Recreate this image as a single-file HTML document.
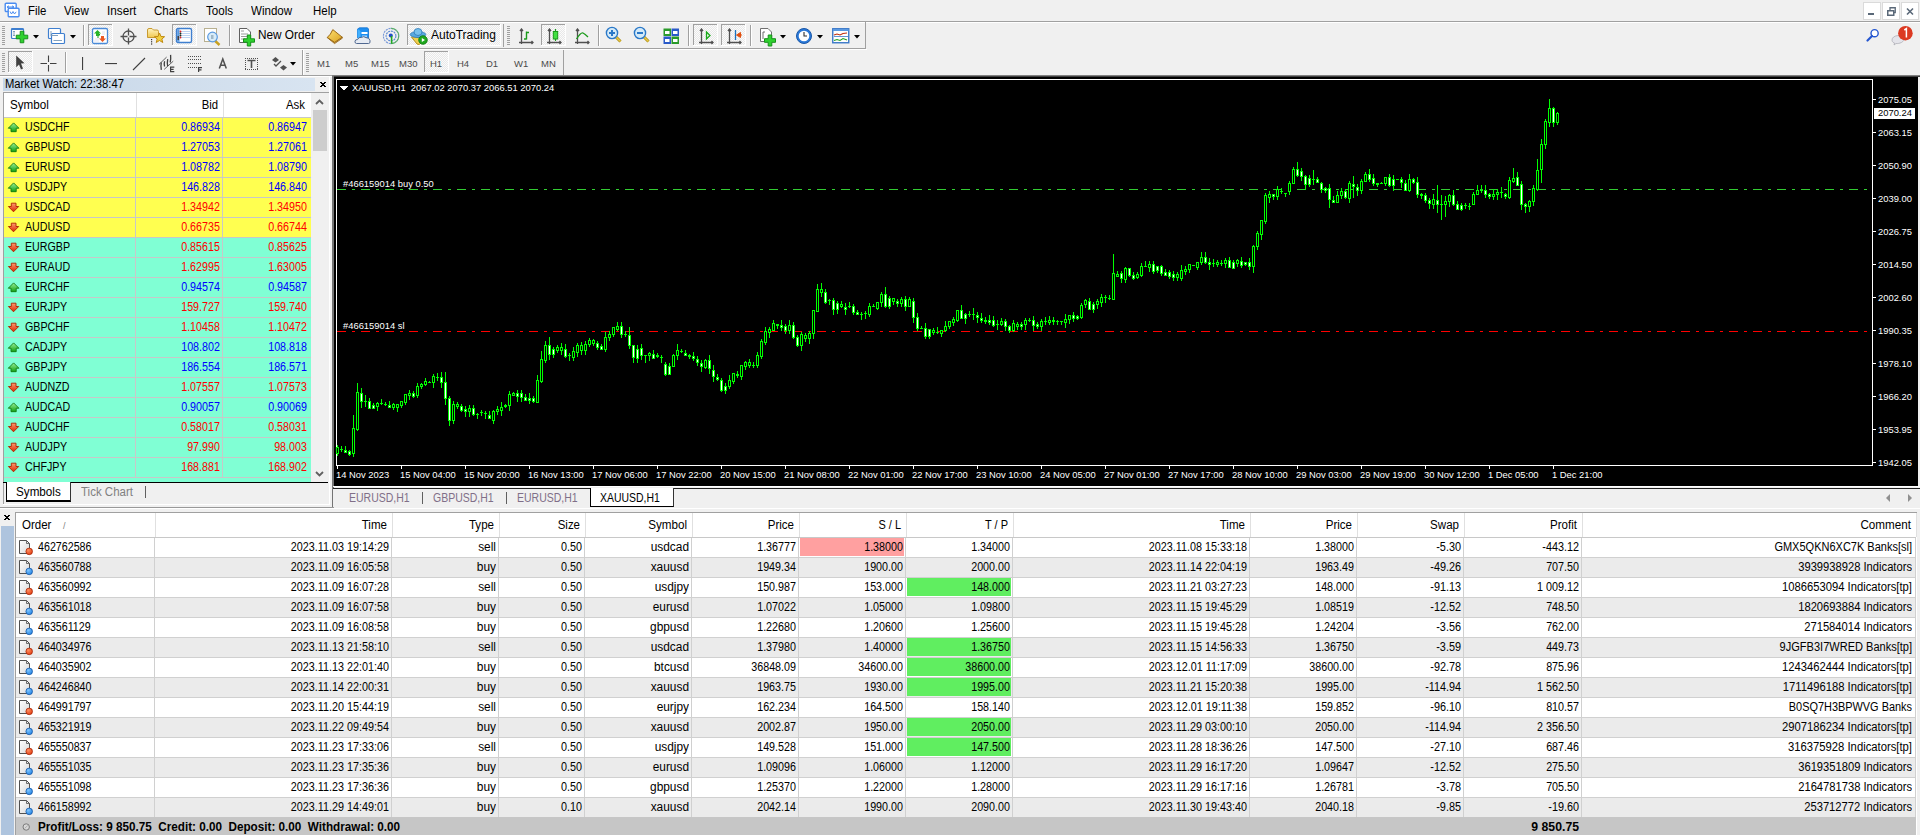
<!DOCTYPE html>
<html><head><meta charset="utf-8"><style>
html,body{margin:0;padding:0;}
body{width:1920px;height:835px;overflow:hidden;position:relative;background:#f0f0f0;font-family:"Liberation Sans", sans-serif;}
body>div, body>svg{position:absolute;}
.t{white-space:nowrap;}
</style></head><body>
<div class="t" style="left:28px;top:4.84px;font-size:12px;line-height:12px;color:#000;font-weight:normal;transform:scaleX(0.952);transform-origin:left top;">File</div><div class="t" style="left:64px;top:4.84px;font-size:12px;line-height:12px;color:#000;font-weight:normal;transform:scaleX(0.959);transform-origin:left top;">View</div><div class="t" style="left:107px;top:4.84px;font-size:12px;line-height:12px;color:#000;font-weight:normal;transform:scaleX(0.979);transform-origin:left top;">Insert</div><div class="t" style="left:154px;top:4.84px;font-size:12px;line-height:12px;color:#000;font-weight:normal;transform:scaleX(0.965);transform-origin:left top;">Charts</div><div class="t" style="left:206px;top:4.84px;font-size:12px;line-height:12px;color:#000;font-weight:normal;transform:scaleX(0.965);transform-origin:left top;">Tools</div><div class="t" style="left:251px;top:4.84px;font-size:12px;line-height:12px;color:#000;font-weight:normal;transform:scaleX(0.963);transform-origin:left top;">Window</div><div class="t" style="left:313px;top:4.84px;font-size:12px;line-height:12px;color:#000;font-weight:normal;transform:scaleX(0.955);transform-origin:left top;">Help</div><div style="left:0px;top:21px;width:1920px;height:1px;background:#a0a0a0"></div><div style="left:0px;top:22px;width:1920px;height:1px;background:#fff"></div><div style="left:0px;top:48px;width:866px;height:1px;background:#a0a0a0"></div><div style="left:0px;top:49px;width:867px;height:1px;background:#fff"></div><div style="left:0px;top:75px;width:1920px;height:1px;background:#a0a0a0"></div><div style="left:0px;top:76px;width:332px;height:1px;background:#fff"></div><div style="left:332px;top:75px;width:1588px;height:2px;background:linear-gradient(#a0a0a0,#202020)"></div><svg style="left:4px;top:2px" width="17" height="16" viewBox="0 0 17 16"><rect x="1.2" y="1.2" width="11" height="8.3" rx="1" fill="#fff" stroke="#4a8cf0" stroke-width="1.4"/><path d="M3 5 L5 3.8 M3 5 L5 6.2 M3 5 H10 L8 3.8 M10 5 L8 6.2" fill="none" stroke="#4a8cf0" stroke-width="1"/><rect x="4.2" y="6.2" width="10.8" height="8.6" rx="1" fill="#fff" stroke="#4a8cf0" stroke-width="1.4"/><path d="M6 9.5 L7.5 12 L9 9.5 L10.5 12 L12.2 9.8" fill="none" stroke="#4a8cf0" stroke-width="1"/></svg><div style="left:1863px;top:2px;width:18px;height:18px;background:#fff;border:1px solid #dadada;box-sizing:border-box"></div><div style="left:1882px;top:2px;width:18px;height:18px;background:#fff;border:1px solid #dadada;box-sizing:border-box"></div><div style="left:1901px;top:2px;width:18px;height:18px;background:#fff;border:1px solid #dadada;box-sizing:border-box"></div><svg style="left:1863px;top:2px" width="18" height="18" viewBox="0 0 18 18"><rect x="5" y="11" width="6" height="2" fill="#5a6878"/></svg><svg style="left:1882px;top:2px" width="18" height="18" viewBox="0 0 18 18"><rect x="5.75" y="8.75" width="6" height="4.5" fill="none" stroke="#5a6878" stroke-width="1.5"/><path d="M8 8 V5.75 H13.25 V10.5 H12" fill="none" stroke="#5a6878" stroke-width="1.3"/></svg><svg style="left:1901px;top:2px" width="18" height="18" viewBox="0 0 18 18"><path d="M6 6.5 L12 12.5 M12 6.5 L6 12.5" stroke="#5a6878" stroke-width="1.6"/></svg><svg style="left:1864px;top:27px" width="16" height="16" viewBox="0 0 16 16"><circle cx="10.6" cy="6.2" r="3.6" fill="#fff" stroke="#2456d0" stroke-width="1.4"/><path d="M8 9 L3.5 13.5" stroke="#2456d0" stroke-width="2.2" stroke-linecap="round"/></svg><svg style="left:1889px;top:24px" width="24" height="24" viewBox="0 0 24 24"><path d="M3 16 C3 11 13 10 15 14 C16 18 10 20 7 19.5 L5 21 L5.5 19 C3.5 18.5 3 17 3 16Z" fill="#e4e4ea" stroke="#a8a8b0" stroke-width="0.7"/><circle cx="16.4" cy="9.2" r="7.3" fill="#dc3a22"/><path d="M15.3 6 L17.4 4.7 V13.5" fill="none" stroke="#fff" stroke-width="1.5"/></svg><svg style="left:2px;top:26px" width="3" height="20" viewBox="0 0 3 20"><rect x="0" y="0" width="3" height="1" fill="#a0a0a0"/><rect x="0" y="2" width="3" height="1" fill="#a0a0a0"/><rect x="0" y="4" width="3" height="1" fill="#a0a0a0"/><rect x="0" y="6" width="3" height="1" fill="#a0a0a0"/><rect x="0" y="8" width="3" height="1" fill="#a0a0a0"/><rect x="0" y="10" width="3" height="1" fill="#a0a0a0"/><rect x="0" y="12" width="3" height="1" fill="#a0a0a0"/><rect x="0" y="14" width="3" height="1" fill="#a0a0a0"/><rect x="0" y="16" width="3" height="1" fill="#a0a0a0"/><rect x="0" y="18" width="3" height="1" fill="#a0a0a0"/></svg><svg style="left:10px;top:27px" width="20" height="18" viewBox="0 0 20 18"><rect x="1.5" y="1.5" width="12" height="10" rx="1" fill="#fff" stroke="#3f7fcf" stroke-width="1.2"/><rect x="1.5" y="1.5" width="12" height="1.5" fill="#3f7fcf"/><path d="M4 4 V9 M3 5 L4 4 L5 5 M3 8 L4 9 L5 8" stroke="#7090b0" stroke-width="0.8" fill="none"/><path d="M10.2 4.25 H13.8 V8.2 H17.75 V11.8 H13.8 V15.75 H10.2 V11.8 H6.25 V8.2 H10.2 Z" fill="#2fd12f" stroke="#16901a" stroke-width="1"/></svg><svg style="left:33px;top:35px" width="6" height="4" viewBox="0 0 6 4"><path d="M0 0 H6 L3 3.5 Z" fill="#000"/></svg><svg style="left:47px;top:27px" width="20" height="18" viewBox="0 0 20 18"><rect x="1.5" y="1.5" width="12" height="10" rx="1" fill="#fff" stroke="#3f7fcf" stroke-width="1.2"/><rect x="4.5" y="6.5" width="13" height="10" rx="1" fill="#fff" stroke="#3f7fcf" stroke-width="1.2"/><path d="M4 4 V9 M4 8.5 H11 M6.5 13.5 H15" stroke="#7898b8" stroke-width="0.9" fill="none"/></svg><svg style="left:70px;top:35px" width="6" height="4" viewBox="0 0 6 4"><path d="M0 0 H6 L3 3.5 Z" fill="#000"/></svg><svg style="left:83px;top:25px" width="2" height="21" viewBox="0 0 2 21"><rect x="0" y="0" width="1" height="21" fill="#a0a0a0"/><rect x="1" y="0" width="1" height="21" fill="#fff"/></svg><svg style="left:88px;top:24px" width="25" height="22" viewBox="0 0 25 22"><defs><pattern id="chk88" width="2" height="2" patternUnits="userSpaceOnUse"><rect width="2" height="2" fill="#fbfbfb"/><rect width="1" height="1" fill="#e8e8e8"/><rect x="1" y="1" width="1" height="1" fill="#e8e8e8"/></pattern></defs><rect width="25" height="22" fill="url(#chk88)"/><rect x="0" y="0" width="25" height="1" fill="#a0a0a0"/><rect x="0" y="0" width="1" height="22" fill="#a0a0a0"/><rect x="24" y="0" width="1" height="22" fill="#fff"/><rect x="0" y="21" width="25" height="1" fill="#fff"/></svg><svg style="left:91px;top:27px" width="18" height="18" viewBox="0 0 18 18"><rect x="1.5" y="1.5" width="15" height="15" rx="1.5" fill="#fff" stroke="#4a8ad8" stroke-width="1.3"/><path d="M7 8 V11 M7 6 L5 8 H9Z" stroke="#1e9a1e" fill="#2fbf2f" stroke-width="1"/><path d="M4 3 L7.5 6.5 L6 6.5 L6 9 L4 9 Z" fill="#24a824" opacity="0"/><path d="M6.5 3 L10 6.5 H8 V9 H5 V6.5 H3Z" fill="#27b427"/><path d="M11.5 15 L15 11.5 H13 V9 H10 V11.5 H8Z" fill="#ec5a24"/><path d="M4 12 H8 M11 5 H14 M11 7 H14 M3 14 H8" stroke="#dde" stroke-width="0.8"/></svg><svg style="left:120px;top:28px" width="17" height="17" viewBox="0 0 17 17"><circle cx="8.5" cy="8.5" r="5.5" fill="none" stroke="#505050" stroke-width="1.3"/><path d="M8.5 0.5 V7.5 M8.5 9.5 V16.5 M0.5 8.5 H7.5 M9.5 8.5 H16.5" stroke="#505050" stroke-width="1.3"/></svg><svg style="left:146px;top:27px" width="20" height="18" viewBox="0 0 20 18"><defs><linearGradient id="fld" x1="0" y1="0" x2="0" y2="1"><stop offset="0" stop-color="#fff4c0"/><stop offset="1" stop-color="#f0c850"/></linearGradient></defs><path d="M1.5 3 Q1.5 1.5 3 1.5 H6 L7.5 3 H11 Q12.5 3 12.5 4.5 V10.5 H1.5 Z" fill="url(#fld)" stroke="#c89a30" stroke-width="1"/><path d="M13.5 6 L15 9.5 L18.6 9.7 L15.8 12 L16.8 15.5 L13.5 13.5 L10.2 15.5 L11.2 12 L8.4 9.7 L12 9.5 Z" fill="#f2d040" stroke="#c08a10" stroke-width="1"/><rect x="5" y="12" width="1.2" height="1.2" fill="#303030"/><rect x="5" y="14.2" width="1.2" height="1.2" fill="#303030"/><rect x="5" y="16.4" width="1.2" height="1.2" fill="#303030"/></svg><svg style="left:172px;top:24px" width="25" height="22" viewBox="0 0 25 22"><defs><pattern id="chk172" width="2" height="2" patternUnits="userSpaceOnUse"><rect width="2" height="2" fill="#fbfbfb"/><rect width="1" height="1" fill="#e8e8e8"/><rect x="1" y="1" width="1" height="1" fill="#e8e8e8"/></pattern></defs><rect width="25" height="22" fill="url(#chk172)"/><rect x="0" y="0" width="25" height="1" fill="#a0a0a0"/><rect x="0" y="0" width="1" height="22" fill="#a0a0a0"/><rect x="24" y="0" width="1" height="22" fill="#fff"/><rect x="0" y="21" width="25" height="1" fill="#fff"/></svg><svg style="left:175px;top:27px" width="18" height="18" viewBox="0 0 18 18"><rect x="1.5" y="1.5" width="15" height="14" rx="1.5" fill="#fff" stroke="#3f7fcf" stroke-width="1.4"/><rect x="2.2" y="2.2" width="2.3" height="12.6" fill="#5a9ae0"/><rect x="2.5" y="9" width="1.5" height="4" fill="#404040"/><path d="M6 4.5 H15 M6 6.5 H15 M6 8.5 H15 M6 10.5 H15" stroke="#b8cff0" stroke-width="0.9"/><circle cx="5.5" cy="4.5" r="0.9" fill="#e02020"/><circle cx="5.5" cy="6.5" r="0.9" fill="#203020"/><circle cx="5.5" cy="8.5" r="0.9" fill="#203020"/><circle cx="5.5" cy="10.5" r="0.9" fill="#e02020"/></svg><svg style="left:203px;top:27px" width="20" height="20" viewBox="0 0 20 20"><rect x="1.5" y="1.5" width="12" height="13" fill="#fff" stroke="#b8b090" stroke-width="1"/><path d="M9 11 L16.5 18" stroke="#c8a020" stroke-width="2.4"/><circle cx="9.5" cy="10" r="4.8" fill="#d8ecf8" stroke="#5a9ae0" stroke-width="1.2"/><rect x="8" y="8" width="2.5" height="4" fill="#a0b8c8"/></svg><svg style="left:229px;top:25px" width="2" height="21" viewBox="0 0 2 21"><rect x="0" y="0" width="1" height="21" fill="#a0a0a0"/><rect x="1" y="0" width="1" height="21" fill="#fff"/></svg><svg style="left:238px;top:27px" width="19" height="20" viewBox="0 0 19 20"><path d="M1.5 1.5 H9 L12.5 5 V15.5 H1.5 Z" fill="#fff" stroke="#606060" stroke-width="1"/><path d="M3 4 H6 M3 7 H10 M3 9.5 H10 M3 12 H7" stroke="#909090" stroke-width="0.9"/><path d="M9.3 8.0 H12.7 V11.8 H16.5 V15.2 H12.7 V19.0 H9.3 V15.2 H5.5 V11.8 H9.3 Z" fill="#2fd12f" stroke="#16901a" stroke-width="1"/></svg><svg style="left:326px;top:28px" width="18" height="17" viewBox="0 0 18 17"><defs><linearGradient id="gbk" x1="0" y1="0" x2="1" y2="1"><stop offset="0" stop-color="#ffe070"/><stop offset="1" stop-color="#d8a020"/></linearGradient></defs><path d="M1.3 9.6 L8.6 15.6 L16.6 10 L16.2 9.2 L8.6 14.4 Z" fill="#e8d8a0" stroke="#9a6818" stroke-width="0.9" stroke-linejoin="round"/><path d="M1.3 9.4 Q4.5 7 6.8 1.6 L16.2 9.2 L8.6 14.4 Z" fill="url(#gbk)" stroke="#9a6818" stroke-width="1" stroke-linejoin="round"/></svg><svg style="left:354px;top:27px" width="18" height="18" viewBox="0 0 18 18"><path d="M3.5 2 L5.5 0.8 H13.5 L14.5 2 V11 H3.5 Z" fill="#1e8ef0" stroke="#1070d0" stroke-width="0.8"/><path d="M3.5 2 L6.5 4 V11 H3.5 Z" fill="#40b0ff"/><rect x="7.5" y="5" width="6" height="2" fill="#fff"/><rect x="8" y="8.5" width="5" height="1.5" fill="#a8d8ff"/><path d="M2.5 16.5 Q0.8 16.5 1 14.2 Q1.3 12.3 3.5 12.6 Q4.6 9.8 7.5 10.4 Q9.6 8.8 12 10.6 Q15.6 10.6 16 13.6 Q16.6 16.5 14.6 16.5 Z" fill="#e6ebf3" stroke="#506890" stroke-width="1"/></svg><svg style="left:382px;top:27px" width="18" height="18" viewBox="0 0 18 18"><circle cx="9" cy="9" r="7.6" fill="none" stroke="#7898d8" stroke-width="1.1" stroke-dasharray="2.2 0.8"/><circle cx="9" cy="9" r="4.9" fill="none" stroke="#5a88d0" stroke-width="1.1" stroke-dasharray="2 0.8"/><path d="M9 1.4 A7.6 7.6 0 0 1 9.5 16.6" fill="none" stroke="#50b050" stroke-width="1.1" opacity="0.8"/><circle cx="8.8" cy="8.6" r="2" fill="#2050c8"/><path d="M9.6 9 V16.8" stroke="#20a820" stroke-width="1.6"/></svg><svg style="left:407px;top:24px" width="94" height="22" viewBox="0 0 94 22"><defs><pattern id="chk407" width="2" height="2" patternUnits="userSpaceOnUse"><rect width="2" height="2" fill="#fbfbfb"/><rect width="1" height="1" fill="#e8e8e8"/><rect x="1" y="1" width="1" height="1" fill="#e8e8e8"/></pattern></defs><rect width="94" height="22" fill="url(#chk407)"/><rect x="0" y="0" width="94" height="1" fill="#a0a0a0"/><rect x="0" y="0" width="1" height="22" fill="#a0a0a0"/><rect x="93" y="0" width="1" height="22" fill="#fff"/><rect x="0" y="21" width="94" height="1" fill="#fff"/></svg><svg style="left:409px;top:27px" width="20" height="19" viewBox="0 0 20 19"><path d="M2.5 10 L8 17 Q10 18.5 12 16 L16 10 Z" fill="#f0d050" stroke="#b89020" stroke-width="1"/><ellipse cx="9" cy="7.5" rx="7.8" ry="3" fill="#58a8e0" stroke="#2a78b8" stroke-width="0.8"/><ellipse cx="9" cy="5" rx="4" ry="3.5" fill="#78c0ec" stroke="#2a78b8" stroke-width="0.8"/><circle cx="14" cy="13" r="4.3" fill="#1fa81f" stroke="#0e780e" stroke-width="0.8"/><path d="M12.8 11 L16 13 L12.8 15 Z" fill="#fff"/></svg><svg style="left:503px;top:24px" width="1" height="23" viewBox="0 0 1 23"><rect width="1" height="23" fill="#a0a0a0"/></svg><svg style="left:507px;top:26px" width="3" height="20" viewBox="0 0 3 20"><rect x="0" y="0" width="3" height="1" fill="#a0a0a0"/><rect x="0" y="2" width="3" height="1" fill="#a0a0a0"/><rect x="0" y="4" width="3" height="1" fill="#a0a0a0"/><rect x="0" y="6" width="3" height="1" fill="#a0a0a0"/><rect x="0" y="8" width="3" height="1" fill="#a0a0a0"/><rect x="0" y="10" width="3" height="1" fill="#a0a0a0"/><rect x="0" y="12" width="3" height="1" fill="#a0a0a0"/><rect x="0" y="14" width="3" height="1" fill="#a0a0a0"/><rect x="0" y="16" width="3" height="1" fill="#a0a0a0"/><rect x="0" y="18" width="3" height="1" fill="#a0a0a0"/></svg><svg style="left:515px;top:28px" width="20" height="17" viewBox="0 0 20 17"><path d="M6.5 1 V16 M4 14.5 H18 M5 3 L6.5 1 L8 3 M16.5 13 L18 14.5 L16.5 16" fill="none" stroke="#505050" stroke-width="1.3"/><path d="M11.5 3.5 V11.5 M11.5 4.5 H14 M9 11 H11.5" fill="none" stroke="#1a9a1a" stroke-width="1.4"/></svg><svg style="left:541px;top:24px" width="25" height="22" viewBox="0 0 25 22"><defs><pattern id="chk541" width="2" height="2" patternUnits="userSpaceOnUse"><rect width="2" height="2" fill="#fbfbfb"/><rect width="1" height="1" fill="#e8e8e8"/><rect x="1" y="1" width="1" height="1" fill="#e8e8e8"/></pattern></defs><rect width="25" height="22" fill="url(#chk541)"/><rect x="0" y="0" width="25" height="1" fill="#a0a0a0"/><rect x="0" y="0" width="1" height="22" fill="#a0a0a0"/><rect x="24" y="0" width="1" height="22" fill="#fff"/><rect x="0" y="21" width="25" height="1" fill="#fff"/></svg><svg style="left:543px;top:28px" width="20" height="17" viewBox="0 0 20 17"><path d="M6.5 1 V16 M4 14.5 H18 M5 3 L6.5 1 L8 3 M16.5 13 L18 14.5 L16.5 16" fill="none" stroke="#505050" stroke-width="1.3"/><path d="M12.5 1 V13" stroke="#1a9a1a" stroke-width="1.2"/><rect x="10.3" y="3.5" width="4.4" height="7.5" fill="#40e040" stroke="#1a9a1a" stroke-width="1"/></svg><svg style="left:571px;top:28px" width="20" height="17" viewBox="0 0 20 17"><path d="M6.5 1 V16 M4 14.5 H18 M5 3 L6.5 1 L8 3 M16.5 13 L18 14.5 L16.5 16" fill="none" stroke="#505050" stroke-width="1.3"/><path d="M5.5 11 Q10 4 12 5 Q14 6 17 9" fill="none" stroke="#1a9a1a" stroke-width="1.3"/></svg><svg style="left:598px;top:25px" width="2" height="21" viewBox="0 0 2 21"><rect x="0" y="0" width="1" height="21" fill="#a0a0a0"/><rect x="1" y="0" width="1" height="21" fill="#fff"/></svg><svg style="left:605px;top:26px" width="18" height="18" viewBox="0 0 18 18"><path d="M10.5 10.5 L15.5 15.5" stroke="#a88a10" stroke-width="3"/><path d="M10.5 10.5 L15.5 15.5" stroke="#e8c848" stroke-width="1.6"/><circle cx="7" cy="7" r="5.6" fill="#d4eaf8" stroke="#2a78c8" stroke-width="1.4"/><path d="M4 7 H10 M7 4 V10" stroke="#2a78c8" stroke-width="2"/></svg><svg style="left:633px;top:26px" width="18" height="18" viewBox="0 0 18 18"><path d="M10.5 10.5 L15.5 15.5" stroke="#a88a10" stroke-width="3"/><path d="M10.5 10.5 L15.5 15.5" stroke="#e8c848" stroke-width="1.6"/><circle cx="7" cy="7" r="5.6" fill="#d4eaf8" stroke="#2a78c8" stroke-width="1.4"/><path d="M4 7 H10" stroke="#2a78c8" stroke-width="2"/></svg><svg style="left:663px;top:28px" width="17" height="17" viewBox="0 0 17 17"><rect x="0.5" y="0.5" width="7.5" height="7.5" fill="#2a9a2a"/><rect x="2" y="3" width="4.5" height="3" fill="#fff"/><rect x="8.5" y="0.5" width="7.5" height="7.5" fill="#2a5ac8"/><rect x="10" y="3" width="4.5" height="3" fill="#fff"/><rect x="0.5" y="8.5" width="7.5" height="7.5" fill="#2a5ac8"/><rect x="2" y="11" width="4.5" height="3" fill="#fff"/><rect x="8.5" y="8.5" width="7.5" height="7.5" fill="#2a9a2a"/><rect x="10" y="11" width="4.5" height="3" fill="#fff"/></svg><svg style="left:688px;top:25px" width="2" height="21" viewBox="0 0 2 21"><rect x="0" y="0" width="1" height="21" fill="#a0a0a0"/><rect x="1" y="0" width="1" height="21" fill="#fff"/></svg><svg style="left:693px;top:24px" width="25" height="22" viewBox="0 0 25 22"><defs><pattern id="chk693" width="2" height="2" patternUnits="userSpaceOnUse"><rect width="2" height="2" fill="#fbfbfb"/><rect width="1" height="1" fill="#e8e8e8"/><rect x="1" y="1" width="1" height="1" fill="#e8e8e8"/></pattern></defs><rect width="25" height="22" fill="url(#chk693)"/><rect x="0" y="0" width="25" height="1" fill="#a0a0a0"/><rect x="0" y="0" width="1" height="22" fill="#a0a0a0"/><rect x="24" y="0" width="1" height="22" fill="#fff"/><rect x="0" y="21" width="25" height="1" fill="#fff"/></svg><svg style="left:695px;top:28px" width="20" height="17" viewBox="0 0 20 17"><path d="M6.5 1 V16 M4 14.5 H18 M5 3 L6.5 1 L8 3 M16.5 13 L18 14.5 L16.5 16" fill="none" stroke="#505050" stroke-width="1.3"/><path d="M11.5 4 L15 7.5 L11.5 11 Z" fill="none" stroke="#1aaa1a" stroke-width="1.3"/></svg><svg style="left:721px;top:24px" width="25" height="22" viewBox="0 0 25 22"><defs><pattern id="chk721" width="2" height="2" patternUnits="userSpaceOnUse"><rect width="2" height="2" fill="#fbfbfb"/><rect width="1" height="1" fill="#e8e8e8"/><rect x="1" y="1" width="1" height="1" fill="#e8e8e8"/></pattern></defs><rect width="25" height="22" fill="url(#chk721)"/><rect x="0" y="0" width="25" height="1" fill="#a0a0a0"/><rect x="0" y="0" width="1" height="22" fill="#a0a0a0"/><rect x="24" y="0" width="1" height="22" fill="#fff"/><rect x="0" y="21" width="25" height="1" fill="#fff"/></svg><svg style="left:723px;top:28px" width="20" height="17" viewBox="0 0 20 17"><path d="M6.5 1 V16 M4 14.5 H18 M5 3 L6.5 1 L8 3 M16.5 13 L18 14.5 L16.5 16" fill="none" stroke="#505050" stroke-width="1.3"/><path d="M12.5 2 V12" stroke="#1a70c0" stroke-width="1.3"/><path d="M13.5 7 L17.5 4.5 V9.5 Z M15 7 H19" fill="#e05010" stroke="#e05010" stroke-width="1"/></svg><svg style="left:750px;top:25px" width="2" height="21" viewBox="0 0 2 21"><rect x="0" y="0" width="1" height="21" fill="#a0a0a0"/><rect x="1" y="0" width="1" height="21" fill="#fff"/></svg><svg style="left:759px;top:27px" width="19" height="20" viewBox="0 0 19 20"><path d="M1.5 1.5 H9 L12.5 5 V14.5 H1.5 Z" fill="#fff" stroke="#707070" stroke-width="1"/><path d="M4 5 V12 M4 5 H6" stroke="#606060" stroke-width="0.9"/><path d="M9.2 8.0 H12.8 V11.7 H16.5 V15.3 H12.8 V19.0 H9.2 V15.3 H5.5 V11.7 H9.2 Z" fill="#2fd12f" stroke="#16901a" stroke-width="1"/></svg><svg style="left:780px;top:35px" width="6" height="4" viewBox="0 0 6 4"><path d="M0 0 H6 L3 3.5 Z" fill="#000"/></svg><svg style="left:795px;top:27px" width="18" height="18" viewBox="0 0 18 18"><circle cx="9" cy="9" r="7.5" fill="#2a78d8" stroke="#1a58a8" stroke-width="1"/><circle cx="9" cy="9" r="5.3" fill="#fff"/><path d="M9 5 V9 H12" fill="none" stroke="#303030" stroke-width="1.1"/></svg><svg style="left:817px;top:35px" width="6" height="4" viewBox="0 0 6 4"><path d="M0 0 H6 L3 3.5 Z" fill="#000"/></svg><svg style="left:832px;top:28px" width="18" height="16" viewBox="0 0 18 16"><rect x="0.75" y="0.75" width="16" height="14" fill="#fff" stroke="#3a78c8" stroke-width="1.4"/><rect x="1" y="1" width="15.5" height="2" fill="#5a98e0"/><path d="M2 7 L5 6 L8 7 L11 5.5 L15 5" fill="none" stroke="#c03010" stroke-width="1.1"/><path d="M2 8.5 H16" stroke="#3a78c8" stroke-width="0.8"/><path d="M2 12.5 L5 11.5 L8 12.5 L11 10.5 L15 12" fill="none" stroke="#20a020" stroke-width="1.1"/></svg><svg style="left:854px;top:35px" width="6" height="4" viewBox="0 0 6 4"><path d="M0 0 H6 L3 3.5 Z" fill="#000"/></svg><svg style="left:865px;top:22px" width="1" height="27" viewBox="0 0 1 27"><rect width="1" height="27" fill="#a0a0a0"/></svg><svg style="left:2px;top:53px" width="3" height="20" viewBox="0 0 3 20"><rect x="0" y="0" width="3" height="1" fill="#a0a0a0"/><rect x="0" y="2" width="3" height="1" fill="#a0a0a0"/><rect x="0" y="4" width="3" height="1" fill="#a0a0a0"/><rect x="0" y="6" width="3" height="1" fill="#a0a0a0"/><rect x="0" y="8" width="3" height="1" fill="#a0a0a0"/><rect x="0" y="10" width="3" height="1" fill="#a0a0a0"/><rect x="0" y="12" width="3" height="1" fill="#a0a0a0"/><rect x="0" y="14" width="3" height="1" fill="#a0a0a0"/><rect x="0" y="16" width="3" height="1" fill="#a0a0a0"/><rect x="0" y="18" width="3" height="1" fill="#a0a0a0"/></svg><svg style="left:8px;top:51px" width="25" height="22" viewBox="0 0 25 22"><defs><pattern id="chk8" width="2" height="2" patternUnits="userSpaceOnUse"><rect width="2" height="2" fill="#fbfbfb"/><rect width="1" height="1" fill="#e8e8e8"/><rect x="1" y="1" width="1" height="1" fill="#e8e8e8"/></pattern></defs><rect width="25" height="22" fill="url(#chk8)"/><rect x="0" y="0" width="25" height="1" fill="#a0a0a0"/><rect x="0" y="0" width="1" height="22" fill="#a0a0a0"/><rect x="24" y="0" width="1" height="22" fill="#fff"/><rect x="0" y="21" width="25" height="1" fill="#fff"/></svg><svg style="left:15px;top:55px" width="11" height="16" viewBox="0 0 11 16"><path d="M1.2 0.5 L9.5 8.3 L6 8.6 L8 13.5 L6 14.5 L4 9.6 L1.2 12.2 Z" fill="#404040"/></svg><svg style="left:40px;top:55px" width="17" height="17" viewBox="0 0 17 17"><path d="M8.5 0.5 V7 M8.5 10 V16.5 M0.5 8.5 H7 M10 8.5 H16.5" stroke="#404040" stroke-width="1.1"/></svg><svg style="left:65px;top:52px" width="2" height="21" viewBox="0 0 2 21"><rect x="0" y="0" width="1" height="21" fill="#a0a0a0"/><rect x="1" y="0" width="1" height="21" fill="#fff"/></svg><svg style="left:81px;top:57px" width="3" height="14" viewBox="0 0 3 14"><rect x="1" y="0" width="1.1" height="13" fill="#404040"/></svg><svg style="left:104px;top:62px" width="14" height="3" viewBox="0 0 14 3"><rect x="1" y="1" width="12" height="1.1" fill="#404040"/></svg><svg style="left:132px;top:57px" width="14" height="14" viewBox="0 0 14 14"><path d="M1 13 L13 1" stroke="#404040" stroke-width="1.1"/></svg><svg style="left:158px;top:54px" width="18" height="19" viewBox="0 0 18 19"><path d="M1 10.4 L8.6 3.1 M6.2 15.4 L15.2 7.2" stroke="#505050" stroke-width="0.9"/><path d="M3.3 8.3 Q2.6 12 3.3 15.9 M6.6 7.2 Q5.8 10 6.6 12.5 M9.7 5.1 Q9 8.5 9.7 12.2 M12.6 0.9 Q13 5 12.2 8.5" fill="none" stroke="#404040" stroke-width="1.3"/><path d="M16.3 13.2 H12.6 V17.6 H16.3 M12.6 15.4 H15.6" fill="none" stroke="#404040" stroke-width="1.2"/></svg><svg style="left:187px;top:55px" width="17" height="18" viewBox="0 0 17 18"><rect x="1" y="1" width="1" height="1" fill="#505050"/><rect x="3" y="1" width="1" height="1" fill="#505050"/><rect x="5" y="1" width="1" height="1" fill="#505050"/><rect x="7" y="1" width="1" height="1" fill="#505050"/><rect x="9" y="1" width="1" height="1" fill="#505050"/><rect x="11" y="1" width="1" height="1" fill="#505050"/><rect x="13" y="1" width="1" height="1" fill="#505050"/><rect x="1" y="4" width="1" height="1" fill="#505050"/><rect x="3" y="4" width="1" height="1" fill="#505050"/><rect x="5" y="4" width="1" height="1" fill="#505050"/><rect x="7" y="4" width="1" height="1" fill="#505050"/><rect x="9" y="4" width="1" height="1" fill="#505050"/><rect x="11" y="4" width="1" height="1" fill="#505050"/><rect x="13" y="4" width="1" height="1" fill="#505050"/><rect x="1" y="8" width="1" height="1" fill="#505050"/><rect x="3" y="8" width="1" height="1" fill="#505050"/><rect x="5" y="8" width="1" height="1" fill="#505050"/><rect x="7" y="8" width="1" height="1" fill="#505050"/><rect x="9" y="8" width="1" height="1" fill="#505050"/><rect x="11" y="8" width="1" height="1" fill="#505050"/><rect x="13" y="8" width="1" height="1" fill="#505050"/><rect x="1" y="12" width="1" height="1" fill="#505050"/><rect x="3" y="12" width="1" height="1" fill="#505050"/><rect x="5" y="12" width="1" height="1" fill="#505050"/><rect x="7" y="12" width="1" height="1" fill="#505050"/><rect x="9" y="12" width="1" height="1" fill="#505050"/><path d="M15 12.6 H11.6 V17 M11.6 14.8 H14.5" fill="none" stroke="#404040" stroke-width="1.2"/></svg><svg style="left:217px;top:57px" width="12" height="13" viewBox="0 0 12 13"><path d="M2.3 11.5 L5.8 2 L9.3 11.5 M3.6 8.2 H8" fill="none" stroke="#505050" stroke-width="1.5"/></svg><svg style="left:244px;top:56px" width="15" height="15" viewBox="0 0 15 15"><rect x="1" y="2" width="1" height="1" fill="#505050"/><rect x="1" y="13" width="1" height="1" fill="#505050"/><rect x="3" y="2" width="1" height="1" fill="#505050"/><rect x="3" y="13" width="1" height="1" fill="#505050"/><rect x="5" y="2" width="1" height="1" fill="#505050"/><rect x="5" y="13" width="1" height="1" fill="#505050"/><rect x="7" y="2" width="1" height="1" fill="#505050"/><rect x="7" y="13" width="1" height="1" fill="#505050"/><rect x="9" y="2" width="1" height="1" fill="#505050"/><rect x="9" y="13" width="1" height="1" fill="#505050"/><rect x="11" y="2" width="1" height="1" fill="#505050"/><rect x="11" y="13" width="1" height="1" fill="#505050"/><rect x="13" y="2" width="1" height="1" fill="#505050"/><rect x="13" y="13" width="1" height="1" fill="#505050"/><rect x="1" y="2" width="1" height="1" fill="#505050"/><rect x="13" y="2" width="1" height="1" fill="#505050"/><rect x="1" y="4" width="1" height="1" fill="#505050"/><rect x="13" y="4" width="1" height="1" fill="#505050"/><rect x="1" y="6" width="1" height="1" fill="#505050"/><rect x="13" y="6" width="1" height="1" fill="#505050"/><rect x="1" y="8" width="1" height="1" fill="#505050"/><rect x="13" y="8" width="1" height="1" fill="#505050"/><rect x="1" y="10" width="1" height="1" fill="#505050"/><rect x="13" y="10" width="1" height="1" fill="#505050"/><rect x="1" y="12" width="1" height="1" fill="#505050"/><rect x="13" y="12" width="1" height="1" fill="#505050"/><path d="M3.5 4.5 H11.5 M7.5 4.5 V12" stroke="#505050" stroke-width="1.6"/></svg><svg style="left:271px;top:56px" width="17" height="16" viewBox="0 0 17 16"><path d="M1 4 L4.5 1 L8 4 L4.5 6.5Z" fill="#505050"/><path d="M16 11.5 L12.5 14.5 L9 11.5 L12.5 9 Z" fill="#505050"/><path d="M3 8 L5 10 L10 5" fill="none" stroke="#505050" stroke-width="1.3"/></svg><svg style="left:290px;top:62px" width="6" height="4" viewBox="0 0 6 4"><path d="M0 0 H6 L3 3.5 Z" fill="#000"/></svg><svg style="left:302px;top:50px" width="2" height="25" viewBox="0 0 2 25"><rect width="1" height="25" fill="#a0a0a0"/><rect x="1" width="1" height="25" fill="#fff"/></svg><svg style="left:306px;top:53px" width="3" height="20" viewBox="0 0 3 20"><rect x="0" y="0" width="3" height="1" fill="#a0a0a0"/><rect x="0" y="2" width="3" height="1" fill="#a0a0a0"/><rect x="0" y="4" width="3" height="1" fill="#a0a0a0"/><rect x="0" y="6" width="3" height="1" fill="#a0a0a0"/><rect x="0" y="8" width="3" height="1" fill="#a0a0a0"/><rect x="0" y="10" width="3" height="1" fill="#a0a0a0"/><rect x="0" y="12" width="3" height="1" fill="#a0a0a0"/><rect x="0" y="14" width="3" height="1" fill="#a0a0a0"/><rect x="0" y="16" width="3" height="1" fill="#a0a0a0"/><rect x="0" y="18" width="3" height="1" fill="#a0a0a0"/></svg><svg style="left:424px;top:51px" width="25" height="22" viewBox="0 0 25 22"><defs><pattern id="chk424" width="2" height="2" patternUnits="userSpaceOnUse"><rect width="2" height="2" fill="#fbfbfb"/><rect width="1" height="1" fill="#e8e8e8"/><rect x="1" y="1" width="1" height="1" fill="#e8e8e8"/></pattern></defs><rect width="25" height="22" fill="url(#chk424)"/><rect x="0" y="0" width="25" height="1" fill="#a0a0a0"/><rect x="0" y="0" width="1" height="22" fill="#a0a0a0"/><rect x="24" y="0" width="1" height="22" fill="#fff"/><rect x="0" y="21" width="25" height="1" fill="#fff"/></svg><svg style="left:563px;top:50px" width="1" height="25" viewBox="0 0 1 25"><rect width="1" height="25" fill="#a0a0a0"/></svg><div class="t" style="left:258px;top:28.84px;font-size:12px;line-height:12px;color:#000;font-weight:normal;transform:scaleX(0.982);transform-origin:left top;">New Order</div><div class="t" style="left:431px;top:28.84px;font-size:12px;line-height:12px;color:#000;font-weight:normal;">AutoTrading</div><div class="t" style="left:317px;top:58.96px;font-size:9.5px;line-height:9.5px;color:#4a4a4a;font-weight:normal;">M1</div><div class="t" style="left:345px;top:58.96px;font-size:9.5px;line-height:9.5px;color:#4a4a4a;font-weight:normal;">M5</div><div class="t" style="left:371px;top:58.96px;font-size:9.5px;line-height:9.5px;color:#4a4a4a;font-weight:normal;">M15</div><div class="t" style="left:399px;top:58.96px;font-size:9.5px;line-height:9.5px;color:#4a4a4a;font-weight:normal;">M30</div><div class="t" style="left:430px;top:58.96px;font-size:9.5px;line-height:9.5px;color:#4a4a4a;font-weight:normal;">H1</div><div class="t" style="left:457px;top:58.96px;font-size:9.5px;line-height:9.5px;color:#4a4a4a;font-weight:normal;">H4</div><div class="t" style="left:486px;top:58.96px;font-size:9.5px;line-height:9.5px;color:#4a4a4a;font-weight:normal;">D1</div><div class="t" style="left:514px;top:58.96px;font-size:9.5px;line-height:9.5px;color:#4a4a4a;font-weight:normal;">W1</div><div class="t" style="left:541px;top:58.96px;font-size:9.5px;line-height:9.5px;color:#4a4a4a;font-weight:normal;">MN</div><div style="left:3px;top:78px;width:312px;height:13px;background:linear-gradient(90deg,#c6d6e7,#d8e4f1)"></div><div class="t" style="left:5px;top:77.84px;font-size:12px;line-height:12px;color:#000;font-weight:normal;transform:scaleX(0.937);transform-origin:left top;">Market Watch: 22:38:47</div><div style="left:3px;top:92px;width:326px;height:1px;background:#a0a0a0"></div><div style="left:3px;top:93px;width:308px;height:24px;background:#fff"></div><div style="left:3px;top:92px;width:1px;height:412px;background:#a0a0a0"></div><div style="left:136px;top:93px;width:1px;height:24px;background:#e0e0e0"></div><div style="left:223px;top:93px;width:1px;height:24px;background:#e0e0e0"></div><div class="t" style="left:10px;top:98.54px;font-size:12px;line-height:12px;color:#000;font-weight:normal;transform:scaleX(0.970);transform-origin:left top;">Symbol</div><div class="t" style="left:-182px;width:400px;text-align:right;top:98.54px;font-size:12px;line-height:12px;color:#000;font-weight:normal;transform:scaleX(0.944);transform-origin:right top;">Bid</div><div class="t" style="left:-95px;width:400px;text-align:right;top:98.54px;font-size:12px;line-height:12px;color:#000;font-weight:normal;transform:scaleX(0.950);transform-origin:right top;">Ask</div><div style="left:4px;top:117px;width:307px;height:1px;background:#c8c8c8"></div><div style="left:4px;top:118px;width:307px;height:19px;background:#ffff50"></div><div style="left:4px;top:137px;width:307px;height:1px;background:#c8c8c8"></div><div style="left:135px;top:118px;width:1px;height:19px;background:#c8c8c8"></div><div style="left:222px;top:118px;width:1px;height:19px;background:#c8c8c8"></div><svg style="left:7px;top:122px" width="13" height="12"><defs><linearGradient id="gu0" x1="0" y1="0" x2="0" y2="1"><stop offset="0" stop-color="#9af09a"/><stop offset="1" stop-color="#12a012"/></linearGradient></defs><path d="M6.6 0.9 L11.9 6.2 L9.2 6.2 L9.2 9.7 L4 9.7 L4 6.2 L1.3 6.2 Z" fill="url(#gu0)" stroke="#0e7a0e" stroke-width="0.9" stroke-linejoin="round"/></svg><div class="t" style="left:24.5px;top:121.34px;font-size:12px;line-height:12px;color:#000;font-weight:normal;transform:scaleX(0.890);transform-origin:left top;">USDCHF</div><div class="t" style="left:-180px;width:400px;text-align:right;top:121.34px;font-size:12px;line-height:12px;color:#0000ff;font-weight:normal;transform:scaleX(0.895);transform-origin:right top;">0.86934</div><div class="t" style="left:-93px;width:400px;text-align:right;top:121.34px;font-size:12px;line-height:12px;color:#0000ff;font-weight:normal;transform:scaleX(0.895);transform-origin:right top;">0.86947</div><div style="left:4px;top:138px;width:307px;height:19px;background:#ffff50"></div><div style="left:4px;top:157px;width:307px;height:1px;background:#c8c8c8"></div><div style="left:135px;top:138px;width:1px;height:19px;background:#c8c8c8"></div><div style="left:222px;top:138px;width:1px;height:19px;background:#c8c8c8"></div><svg style="left:7px;top:142px" width="13" height="12"><defs><linearGradient id="gu1" x1="0" y1="0" x2="0" y2="1"><stop offset="0" stop-color="#9af09a"/><stop offset="1" stop-color="#12a012"/></linearGradient></defs><path d="M6.6 0.9 L11.9 6.2 L9.2 6.2 L9.2 9.7 L4 9.7 L4 6.2 L1.3 6.2 Z" fill="url(#gu1)" stroke="#0e7a0e" stroke-width="0.9" stroke-linejoin="round"/></svg><div class="t" style="left:24.5px;top:141.34px;font-size:12px;line-height:12px;color:#000;font-weight:normal;transform:scaleX(0.890);transform-origin:left top;">GBPUSD</div><div class="t" style="left:-180px;width:400px;text-align:right;top:141.34px;font-size:12px;line-height:12px;color:#0000ff;font-weight:normal;transform:scaleX(0.895);transform-origin:right top;">1.27053</div><div class="t" style="left:-93px;width:400px;text-align:right;top:141.34px;font-size:12px;line-height:12px;color:#0000ff;font-weight:normal;transform:scaleX(0.895);transform-origin:right top;">1.27061</div><div style="left:4px;top:158px;width:307px;height:19px;background:#ffff50"></div><div style="left:4px;top:177px;width:307px;height:1px;background:#c8c8c8"></div><div style="left:135px;top:158px;width:1px;height:19px;background:#c8c8c8"></div><div style="left:222px;top:158px;width:1px;height:19px;background:#c8c8c8"></div><svg style="left:7px;top:162px" width="13" height="12"><defs><linearGradient id="gu2" x1="0" y1="0" x2="0" y2="1"><stop offset="0" stop-color="#9af09a"/><stop offset="1" stop-color="#12a012"/></linearGradient></defs><path d="M6.6 0.9 L11.9 6.2 L9.2 6.2 L9.2 9.7 L4 9.7 L4 6.2 L1.3 6.2 Z" fill="url(#gu2)" stroke="#0e7a0e" stroke-width="0.9" stroke-linejoin="round"/></svg><div class="t" style="left:24.5px;top:161.34px;font-size:12px;line-height:12px;color:#000;font-weight:normal;transform:scaleX(0.890);transform-origin:left top;">EURUSD</div><div class="t" style="left:-180px;width:400px;text-align:right;top:161.34px;font-size:12px;line-height:12px;color:#0000ff;font-weight:normal;transform:scaleX(0.895);transform-origin:right top;">1.08782</div><div class="t" style="left:-93px;width:400px;text-align:right;top:161.34px;font-size:12px;line-height:12px;color:#0000ff;font-weight:normal;transform:scaleX(0.895);transform-origin:right top;">1.08790</div><div style="left:4px;top:178px;width:307px;height:19px;background:#ffff50"></div><div style="left:4px;top:197px;width:307px;height:1px;background:#c8c8c8"></div><div style="left:135px;top:178px;width:1px;height:19px;background:#c8c8c8"></div><div style="left:222px;top:178px;width:1px;height:19px;background:#c8c8c8"></div><svg style="left:7px;top:182px" width="13" height="12"><defs><linearGradient id="gu3" x1="0" y1="0" x2="0" y2="1"><stop offset="0" stop-color="#9af09a"/><stop offset="1" stop-color="#12a012"/></linearGradient></defs><path d="M6.6 0.9 L11.9 6.2 L9.2 6.2 L9.2 9.7 L4 9.7 L4 6.2 L1.3 6.2 Z" fill="url(#gu3)" stroke="#0e7a0e" stroke-width="0.9" stroke-linejoin="round"/></svg><div class="t" style="left:24.5px;top:181.34px;font-size:12px;line-height:12px;color:#000;font-weight:normal;transform:scaleX(0.890);transform-origin:left top;">USDJPY</div><div class="t" style="left:-180px;width:400px;text-align:right;top:181.34px;font-size:12px;line-height:12px;color:#0000ff;font-weight:normal;transform:scaleX(0.895);transform-origin:right top;">146.828</div><div class="t" style="left:-93px;width:400px;text-align:right;top:181.34px;font-size:12px;line-height:12px;color:#0000ff;font-weight:normal;transform:scaleX(0.895);transform-origin:right top;">146.840</div><div style="left:4px;top:198px;width:307px;height:19px;background:#ffff50"></div><div style="left:4px;top:217px;width:307px;height:1px;background:#c8c8c8"></div><div style="left:135px;top:198px;width:1px;height:19px;background:#c8c8c8"></div><div style="left:222px;top:198px;width:1px;height:19px;background:#c8c8c8"></div><svg style="left:7px;top:202px" width="13" height="13"><defs><linearGradient id="gd4" x1="0" y1="0" x2="0" y2="1"><stop offset="0" stop-color="#ff9a70"/><stop offset="1" stop-color="#d82800"/></linearGradient></defs><path d="M6.5 9.8 L11.7 4.5 L9 4.5 L9 1.2 L4.3 1.2 L4.3 4.5 L1.4 4.5 Z" fill="url(#gd4)" stroke="#b02000" stroke-width="0.9" stroke-linejoin="round"/></svg><div class="t" style="left:24.5px;top:201.34px;font-size:12px;line-height:12px;color:#000;font-weight:normal;transform:scaleX(0.890);transform-origin:left top;">USDCAD</div><div class="t" style="left:-180px;width:400px;text-align:right;top:201.34px;font-size:12px;line-height:12px;color:#ff0000;font-weight:normal;transform:scaleX(0.895);transform-origin:right top;">1.34942</div><div class="t" style="left:-93px;width:400px;text-align:right;top:201.34px;font-size:12px;line-height:12px;color:#ff0000;font-weight:normal;transform:scaleX(0.895);transform-origin:right top;">1.34950</div><div style="left:4px;top:218px;width:307px;height:19px;background:#ffff50"></div><div style="left:4px;top:237px;width:307px;height:1px;background:#c8c8c8"></div><div style="left:135px;top:218px;width:1px;height:19px;background:#c8c8c8"></div><div style="left:222px;top:218px;width:1px;height:19px;background:#c8c8c8"></div><svg style="left:7px;top:222px" width="13" height="13"><defs><linearGradient id="gd5" x1="0" y1="0" x2="0" y2="1"><stop offset="0" stop-color="#ff9a70"/><stop offset="1" stop-color="#d82800"/></linearGradient></defs><path d="M6.5 9.8 L11.7 4.5 L9 4.5 L9 1.2 L4.3 1.2 L4.3 4.5 L1.4 4.5 Z" fill="url(#gd5)" stroke="#b02000" stroke-width="0.9" stroke-linejoin="round"/></svg><div class="t" style="left:24.5px;top:221.34px;font-size:12px;line-height:12px;color:#000;font-weight:normal;transform:scaleX(0.890);transform-origin:left top;">AUDUSD</div><div class="t" style="left:-180px;width:400px;text-align:right;top:221.34px;font-size:12px;line-height:12px;color:#ff0000;font-weight:normal;transform:scaleX(0.895);transform-origin:right top;">0.66735</div><div class="t" style="left:-93px;width:400px;text-align:right;top:221.34px;font-size:12px;line-height:12px;color:#ff0000;font-weight:normal;transform:scaleX(0.895);transform-origin:right top;">0.66744</div><div style="left:4px;top:238px;width:307px;height:19px;background:#80ffd4"></div><div style="left:4px;top:257px;width:307px;height:1px;background:#c8c8c8"></div><div style="left:135px;top:238px;width:1px;height:19px;background:#c8c8c8"></div><div style="left:222px;top:238px;width:1px;height:19px;background:#c8c8c8"></div><svg style="left:7px;top:242px" width="13" height="13"><defs><linearGradient id="gd6" x1="0" y1="0" x2="0" y2="1"><stop offset="0" stop-color="#ff9a70"/><stop offset="1" stop-color="#d82800"/></linearGradient></defs><path d="M6.5 9.8 L11.7 4.5 L9 4.5 L9 1.2 L4.3 1.2 L4.3 4.5 L1.4 4.5 Z" fill="url(#gd6)" stroke="#b02000" stroke-width="0.9" stroke-linejoin="round"/></svg><div class="t" style="left:24.5px;top:241.34px;font-size:12px;line-height:12px;color:#000;font-weight:normal;transform:scaleX(0.890);transform-origin:left top;">EURGBP</div><div class="t" style="left:-180px;width:400px;text-align:right;top:241.34px;font-size:12px;line-height:12px;color:#ff0000;font-weight:normal;transform:scaleX(0.895);transform-origin:right top;">0.85615</div><div class="t" style="left:-93px;width:400px;text-align:right;top:241.34px;font-size:12px;line-height:12px;color:#ff0000;font-weight:normal;transform:scaleX(0.895);transform-origin:right top;">0.85625</div><div style="left:4px;top:258px;width:307px;height:19px;background:#80ffd4"></div><div style="left:4px;top:277px;width:307px;height:1px;background:#c8c8c8"></div><div style="left:135px;top:258px;width:1px;height:19px;background:#c8c8c8"></div><div style="left:222px;top:258px;width:1px;height:19px;background:#c8c8c8"></div><svg style="left:7px;top:262px" width="13" height="13"><defs><linearGradient id="gd7" x1="0" y1="0" x2="0" y2="1"><stop offset="0" stop-color="#ff9a70"/><stop offset="1" stop-color="#d82800"/></linearGradient></defs><path d="M6.5 9.8 L11.7 4.5 L9 4.5 L9 1.2 L4.3 1.2 L4.3 4.5 L1.4 4.5 Z" fill="url(#gd7)" stroke="#b02000" stroke-width="0.9" stroke-linejoin="round"/></svg><div class="t" style="left:24.5px;top:261.34px;font-size:12px;line-height:12px;color:#000;font-weight:normal;transform:scaleX(0.890);transform-origin:left top;">EURAUD</div><div class="t" style="left:-180px;width:400px;text-align:right;top:261.34px;font-size:12px;line-height:12px;color:#ff0000;font-weight:normal;transform:scaleX(0.895);transform-origin:right top;">1.62995</div><div class="t" style="left:-93px;width:400px;text-align:right;top:261.34px;font-size:12px;line-height:12px;color:#ff0000;font-weight:normal;transform:scaleX(0.895);transform-origin:right top;">1.63005</div><div style="left:4px;top:278px;width:307px;height:19px;background:#80ffd4"></div><div style="left:4px;top:297px;width:307px;height:1px;background:#c8c8c8"></div><div style="left:135px;top:278px;width:1px;height:19px;background:#c8c8c8"></div><div style="left:222px;top:278px;width:1px;height:19px;background:#c8c8c8"></div><svg style="left:7px;top:282px" width="13" height="12"><defs><linearGradient id="gu8" x1="0" y1="0" x2="0" y2="1"><stop offset="0" stop-color="#9af09a"/><stop offset="1" stop-color="#12a012"/></linearGradient></defs><path d="M6.6 0.9 L11.9 6.2 L9.2 6.2 L9.2 9.7 L4 9.7 L4 6.2 L1.3 6.2 Z" fill="url(#gu8)" stroke="#0e7a0e" stroke-width="0.9" stroke-linejoin="round"/></svg><div class="t" style="left:24.5px;top:281.34px;font-size:12px;line-height:12px;color:#000;font-weight:normal;transform:scaleX(0.890);transform-origin:left top;">EURCHF</div><div class="t" style="left:-180px;width:400px;text-align:right;top:281.34px;font-size:12px;line-height:12px;color:#0000ff;font-weight:normal;transform:scaleX(0.895);transform-origin:right top;">0.94574</div><div class="t" style="left:-93px;width:400px;text-align:right;top:281.34px;font-size:12px;line-height:12px;color:#0000ff;font-weight:normal;transform:scaleX(0.895);transform-origin:right top;">0.94587</div><div style="left:4px;top:298px;width:307px;height:19px;background:#80ffd4"></div><div style="left:4px;top:317px;width:307px;height:1px;background:#c8c8c8"></div><div style="left:135px;top:298px;width:1px;height:19px;background:#c8c8c8"></div><div style="left:222px;top:298px;width:1px;height:19px;background:#c8c8c8"></div><svg style="left:7px;top:302px" width="13" height="13"><defs><linearGradient id="gd9" x1="0" y1="0" x2="0" y2="1"><stop offset="0" stop-color="#ff9a70"/><stop offset="1" stop-color="#d82800"/></linearGradient></defs><path d="M6.5 9.8 L11.7 4.5 L9 4.5 L9 1.2 L4.3 1.2 L4.3 4.5 L1.4 4.5 Z" fill="url(#gd9)" stroke="#b02000" stroke-width="0.9" stroke-linejoin="round"/></svg><div class="t" style="left:24.5px;top:301.34px;font-size:12px;line-height:12px;color:#000;font-weight:normal;transform:scaleX(0.890);transform-origin:left top;">EURJPY</div><div class="t" style="left:-180px;width:400px;text-align:right;top:301.34px;font-size:12px;line-height:12px;color:#ff0000;font-weight:normal;transform:scaleX(0.895);transform-origin:right top;">159.727</div><div class="t" style="left:-93px;width:400px;text-align:right;top:301.34px;font-size:12px;line-height:12px;color:#ff0000;font-weight:normal;transform:scaleX(0.895);transform-origin:right top;">159.740</div><div style="left:4px;top:318px;width:307px;height:19px;background:#80ffd4"></div><div style="left:4px;top:337px;width:307px;height:1px;background:#c8c8c8"></div><div style="left:135px;top:318px;width:1px;height:19px;background:#c8c8c8"></div><div style="left:222px;top:318px;width:1px;height:19px;background:#c8c8c8"></div><svg style="left:7px;top:322px" width="13" height="13"><defs><linearGradient id="gd10" x1="0" y1="0" x2="0" y2="1"><stop offset="0" stop-color="#ff9a70"/><stop offset="1" stop-color="#d82800"/></linearGradient></defs><path d="M6.5 9.8 L11.7 4.5 L9 4.5 L9 1.2 L4.3 1.2 L4.3 4.5 L1.4 4.5 Z" fill="url(#gd10)" stroke="#b02000" stroke-width="0.9" stroke-linejoin="round"/></svg><div class="t" style="left:24.5px;top:321.34px;font-size:12px;line-height:12px;color:#000;font-weight:normal;transform:scaleX(0.890);transform-origin:left top;">GBPCHF</div><div class="t" style="left:-180px;width:400px;text-align:right;top:321.34px;font-size:12px;line-height:12px;color:#ff0000;font-weight:normal;transform:scaleX(0.895);transform-origin:right top;">1.10458</div><div class="t" style="left:-93px;width:400px;text-align:right;top:321.34px;font-size:12px;line-height:12px;color:#ff0000;font-weight:normal;transform:scaleX(0.895);transform-origin:right top;">1.10472</div><div style="left:4px;top:338px;width:307px;height:19px;background:#80ffd4"></div><div style="left:4px;top:357px;width:307px;height:1px;background:#c8c8c8"></div><div style="left:135px;top:338px;width:1px;height:19px;background:#c8c8c8"></div><div style="left:222px;top:338px;width:1px;height:19px;background:#c8c8c8"></div><svg style="left:7px;top:342px" width="13" height="12"><defs><linearGradient id="gu11" x1="0" y1="0" x2="0" y2="1"><stop offset="0" stop-color="#9af09a"/><stop offset="1" stop-color="#12a012"/></linearGradient></defs><path d="M6.6 0.9 L11.9 6.2 L9.2 6.2 L9.2 9.7 L4 9.7 L4 6.2 L1.3 6.2 Z" fill="url(#gu11)" stroke="#0e7a0e" stroke-width="0.9" stroke-linejoin="round"/></svg><div class="t" style="left:24.5px;top:341.34px;font-size:12px;line-height:12px;color:#000;font-weight:normal;transform:scaleX(0.890);transform-origin:left top;">CADJPY</div><div class="t" style="left:-180px;width:400px;text-align:right;top:341.34px;font-size:12px;line-height:12px;color:#0000ff;font-weight:normal;transform:scaleX(0.895);transform-origin:right top;">108.802</div><div class="t" style="left:-93px;width:400px;text-align:right;top:341.34px;font-size:12px;line-height:12px;color:#0000ff;font-weight:normal;transform:scaleX(0.895);transform-origin:right top;">108.818</div><div style="left:4px;top:358px;width:307px;height:19px;background:#80ffd4"></div><div style="left:4px;top:377px;width:307px;height:1px;background:#c8c8c8"></div><div style="left:135px;top:358px;width:1px;height:19px;background:#c8c8c8"></div><div style="left:222px;top:358px;width:1px;height:19px;background:#c8c8c8"></div><svg style="left:7px;top:362px" width="13" height="12"><defs><linearGradient id="gu12" x1="0" y1="0" x2="0" y2="1"><stop offset="0" stop-color="#9af09a"/><stop offset="1" stop-color="#12a012"/></linearGradient></defs><path d="M6.6 0.9 L11.9 6.2 L9.2 6.2 L9.2 9.7 L4 9.7 L4 6.2 L1.3 6.2 Z" fill="url(#gu12)" stroke="#0e7a0e" stroke-width="0.9" stroke-linejoin="round"/></svg><div class="t" style="left:24.5px;top:361.34px;font-size:12px;line-height:12px;color:#000;font-weight:normal;transform:scaleX(0.890);transform-origin:left top;">GBPJPY</div><div class="t" style="left:-180px;width:400px;text-align:right;top:361.34px;font-size:12px;line-height:12px;color:#0000ff;font-weight:normal;transform:scaleX(0.895);transform-origin:right top;">186.554</div><div class="t" style="left:-93px;width:400px;text-align:right;top:361.34px;font-size:12px;line-height:12px;color:#0000ff;font-weight:normal;transform:scaleX(0.895);transform-origin:right top;">186.571</div><div style="left:4px;top:378px;width:307px;height:19px;background:#80ffd4"></div><div style="left:4px;top:397px;width:307px;height:1px;background:#c8c8c8"></div><div style="left:135px;top:378px;width:1px;height:19px;background:#c8c8c8"></div><div style="left:222px;top:378px;width:1px;height:19px;background:#c8c8c8"></div><svg style="left:7px;top:382px" width="13" height="13"><defs><linearGradient id="gd13" x1="0" y1="0" x2="0" y2="1"><stop offset="0" stop-color="#ff9a70"/><stop offset="1" stop-color="#d82800"/></linearGradient></defs><path d="M6.5 9.8 L11.7 4.5 L9 4.5 L9 1.2 L4.3 1.2 L4.3 4.5 L1.4 4.5 Z" fill="url(#gd13)" stroke="#b02000" stroke-width="0.9" stroke-linejoin="round"/></svg><div class="t" style="left:24.5px;top:381.34px;font-size:12px;line-height:12px;color:#000;font-weight:normal;transform:scaleX(0.890);transform-origin:left top;">AUDNZD</div><div class="t" style="left:-180px;width:400px;text-align:right;top:381.34px;font-size:12px;line-height:12px;color:#ff0000;font-weight:normal;transform:scaleX(0.895);transform-origin:right top;">1.07557</div><div class="t" style="left:-93px;width:400px;text-align:right;top:381.34px;font-size:12px;line-height:12px;color:#ff0000;font-weight:normal;transform:scaleX(0.895);transform-origin:right top;">1.07573</div><div style="left:4px;top:398px;width:307px;height:19px;background:#80ffd4"></div><div style="left:4px;top:417px;width:307px;height:1px;background:#c8c8c8"></div><div style="left:135px;top:398px;width:1px;height:19px;background:#c8c8c8"></div><div style="left:222px;top:398px;width:1px;height:19px;background:#c8c8c8"></div><svg style="left:7px;top:402px" width="13" height="12"><defs><linearGradient id="gu14" x1="0" y1="0" x2="0" y2="1"><stop offset="0" stop-color="#9af09a"/><stop offset="1" stop-color="#12a012"/></linearGradient></defs><path d="M6.6 0.9 L11.9 6.2 L9.2 6.2 L9.2 9.7 L4 9.7 L4 6.2 L1.3 6.2 Z" fill="url(#gu14)" stroke="#0e7a0e" stroke-width="0.9" stroke-linejoin="round"/></svg><div class="t" style="left:24.5px;top:401.34px;font-size:12px;line-height:12px;color:#000;font-weight:normal;transform:scaleX(0.890);transform-origin:left top;">AUDCAD</div><div class="t" style="left:-180px;width:400px;text-align:right;top:401.34px;font-size:12px;line-height:12px;color:#0000ff;font-weight:normal;transform:scaleX(0.895);transform-origin:right top;">0.90057</div><div class="t" style="left:-93px;width:400px;text-align:right;top:401.34px;font-size:12px;line-height:12px;color:#0000ff;font-weight:normal;transform:scaleX(0.895);transform-origin:right top;">0.90069</div><div style="left:4px;top:418px;width:307px;height:19px;background:#80ffd4"></div><div style="left:4px;top:437px;width:307px;height:1px;background:#c8c8c8"></div><div style="left:135px;top:418px;width:1px;height:19px;background:#c8c8c8"></div><div style="left:222px;top:418px;width:1px;height:19px;background:#c8c8c8"></div><svg style="left:7px;top:422px" width="13" height="13"><defs><linearGradient id="gd15" x1="0" y1="0" x2="0" y2="1"><stop offset="0" stop-color="#ff9a70"/><stop offset="1" stop-color="#d82800"/></linearGradient></defs><path d="M6.5 9.8 L11.7 4.5 L9 4.5 L9 1.2 L4.3 1.2 L4.3 4.5 L1.4 4.5 Z" fill="url(#gd15)" stroke="#b02000" stroke-width="0.9" stroke-linejoin="round"/></svg><div class="t" style="left:24.5px;top:421.34px;font-size:12px;line-height:12px;color:#000;font-weight:normal;transform:scaleX(0.890);transform-origin:left top;">AUDCHF</div><div class="t" style="left:-180px;width:400px;text-align:right;top:421.34px;font-size:12px;line-height:12px;color:#ff0000;font-weight:normal;transform:scaleX(0.895);transform-origin:right top;">0.58017</div><div class="t" style="left:-93px;width:400px;text-align:right;top:421.34px;font-size:12px;line-height:12px;color:#ff0000;font-weight:normal;transform:scaleX(0.895);transform-origin:right top;">0.58031</div><div style="left:4px;top:438px;width:307px;height:19px;background:#80ffd4"></div><div style="left:4px;top:457px;width:307px;height:1px;background:#c8c8c8"></div><div style="left:135px;top:438px;width:1px;height:19px;background:#c8c8c8"></div><div style="left:222px;top:438px;width:1px;height:19px;background:#c8c8c8"></div><svg style="left:7px;top:442px" width="13" height="13"><defs><linearGradient id="gd16" x1="0" y1="0" x2="0" y2="1"><stop offset="0" stop-color="#ff9a70"/><stop offset="1" stop-color="#d82800"/></linearGradient></defs><path d="M6.5 9.8 L11.7 4.5 L9 4.5 L9 1.2 L4.3 1.2 L4.3 4.5 L1.4 4.5 Z" fill="url(#gd16)" stroke="#b02000" stroke-width="0.9" stroke-linejoin="round"/></svg><div class="t" style="left:24.5px;top:441.34px;font-size:12px;line-height:12px;color:#000;font-weight:normal;transform:scaleX(0.890);transform-origin:left top;">AUDJPY</div><div class="t" style="left:-180px;width:400px;text-align:right;top:441.34px;font-size:12px;line-height:12px;color:#ff0000;font-weight:normal;transform:scaleX(0.895);transform-origin:right top;">97.990</div><div class="t" style="left:-93px;width:400px;text-align:right;top:441.34px;font-size:12px;line-height:12px;color:#ff0000;font-weight:normal;transform:scaleX(0.895);transform-origin:right top;">98.003</div><div style="left:4px;top:458px;width:307px;height:19px;background:#80ffd4"></div><div style="left:4px;top:477px;width:307px;height:1px;background:#c8c8c8"></div><div style="left:135px;top:458px;width:1px;height:19px;background:#c8c8c8"></div><div style="left:222px;top:458px;width:1px;height:19px;background:#c8c8c8"></div><svg style="left:7px;top:462px" width="13" height="13"><defs><linearGradient id="gd17" x1="0" y1="0" x2="0" y2="1"><stop offset="0" stop-color="#ff9a70"/><stop offset="1" stop-color="#d82800"/></linearGradient></defs><path d="M6.5 9.8 L11.7 4.5 L9 4.5 L9 1.2 L4.3 1.2 L4.3 4.5 L1.4 4.5 Z" fill="url(#gd17)" stroke="#b02000" stroke-width="0.9" stroke-linejoin="round"/></svg><div class="t" style="left:24.5px;top:461.34px;font-size:12px;line-height:12px;color:#000;font-weight:normal;transform:scaleX(0.890);transform-origin:left top;">CHFJPY</div><div class="t" style="left:-180px;width:400px;text-align:right;top:461.34px;font-size:12px;line-height:12px;color:#ff0000;font-weight:normal;transform:scaleX(0.895);transform-origin:right top;">168.881</div><div class="t" style="left:-93px;width:400px;text-align:right;top:461.34px;font-size:12px;line-height:12px;color:#ff0000;font-weight:normal;transform:scaleX(0.895);transform-origin:right top;">168.902</div><div style="left:4px;top:478px;width:307px;height:4px;background:#80ffd4"></div><div style="left:312px;top:93px;width:17px;height:389px;background:#f0f0f0"></div><div style="left:313px;top:110px;width:14px;height:41px;background:#cdcdcd"></div><svg style="left:315px;top:98px" width="9" height="8"><path d="M1 6 L4.5 2.5 L8 6" fill="none" stroke="#606060" stroke-width="1.8"/></svg><svg style="left:315px;top:470px" width="9" height="8"><path d="M1 2 L4.5 5.5 L8 2" fill="none" stroke="#606060" stroke-width="1.8"/></svg><svg style="left:320px;top:82px" width="6" height="5" shape-rendering="crispEdges"><rect x="0" y="0" width="1" height="1"/><rect x="1" y="0" width="1" height="1"/><rect x="4" y="0" width="1" height="1"/><rect x="5" y="0" width="1" height="1"/><rect x="1" y="1" width="1" height="1"/><rect x="2" y="1" width="1" height="1"/><rect x="3" y="1" width="1" height="1"/><rect x="4" y="1" width="1" height="1"/><rect x="2" y="2" width="1" height="1"/><rect x="3" y="2" width="1" height="1"/><rect x="1" y="3" width="1" height="1"/><rect x="2" y="3" width="1" height="1"/><rect x="3" y="3" width="1" height="1"/><rect x="4" y="3" width="1" height="1"/><rect x="0" y="4" width="1" height="1"/><rect x="1" y="4" width="1" height="1"/><rect x="4" y="4" width="1" height="1"/><rect x="5" y="4" width="1" height="1"/></svg><div style="left:3px;top:482px;width:325px;height:1px;background:#000"></div><div style="left:6px;top:482px;width:65px;height:20px;background:#fff;border-left:1px solid #000;border-right:1px solid #333;border-bottom:2px solid #000;box-sizing:border-box"></div><div class="t" style="left:16px;top:485.84px;font-size:12px;line-height:12px;color:#000;font-weight:normal;transform:scaleX(0.973);transform-origin:left top;">Symbols</div><div class="t" style="left:81px;top:485.84px;font-size:12px;line-height:12px;color:#808080;font-weight:normal;transform:scaleX(0.958);transform-origin:left top;">Tick Chart</div><div style="left:145px;top:486px;width:1px;height:12px;background:#606060"></div><div style="left:329px;top:76px;width:1px;height:428px;background:#fff"></div><div style="left:332px;top:76px;width:2px;height:432px;background:#747474"></div><div style="left:3px;top:504px;width:327px;height:1px;background:#fff"></div><div style="left:334px;top:77px;width:1584px;height:409px;background:#000"></div><svg style="left:0;top:0" width="1920" height="835" shape-rendering="crispEdges"><rect x="336" y="79" width="1537" height="1" fill="#fff"/><rect x="336" y="465" width="1537" height="1" fill="#fff"/><rect x="336" y="79" width="1" height="387" fill="#fff"/><rect x="1872" y="79" width="1" height="387" fill="#fff"/><rect x="1873" y="99" width="3" height="1" fill="#fff"/><rect x="1873" y="132" width="3" height="1" fill="#fff"/><rect x="1873" y="165" width="3" height="1" fill="#fff"/><rect x="1873" y="198" width="3" height="1" fill="#fff"/><rect x="1873" y="231" width="3" height="1" fill="#fff"/><rect x="1873" y="264" width="3" height="1" fill="#fff"/><rect x="1873" y="297" width="3" height="1" fill="#fff"/><rect x="1873" y="330" width="3" height="1" fill="#fff"/><rect x="1873" y="363" width="3" height="1" fill="#fff"/><rect x="1873" y="396" width="3" height="1" fill="#fff"/><rect x="1873" y="429" width="3" height="1" fill="#fff"/><rect x="1873" y="462" width="3" height="1" fill="#fff"/><rect x="337" y="466" width="1" height="3" fill="#fff"/><rect x="401" y="466" width="1" height="3" fill="#fff"/><rect x="465" y="466" width="1" height="3" fill="#fff"/><rect x="529" y="466" width="1" height="3" fill="#fff"/><rect x="593" y="466" width="1" height="3" fill="#fff"/><rect x="657" y="466" width="1" height="3" fill="#fff"/><rect x="721" y="466" width="1" height="3" fill="#fff"/><rect x="785" y="466" width="1" height="3" fill="#fff"/><rect x="849" y="466" width="1" height="3" fill="#fff"/><rect x="913" y="466" width="1" height="3" fill="#fff"/><rect x="977" y="466" width="1" height="3" fill="#fff"/><rect x="1041" y="466" width="1" height="3" fill="#fff"/><rect x="1105" y="466" width="1" height="3" fill="#fff"/><rect x="1169" y="466" width="1" height="3" fill="#fff"/><rect x="1233" y="466" width="1" height="3" fill="#fff"/><rect x="1297" y="466" width="1" height="3" fill="#fff"/><rect x="1361" y="466" width="1" height="3" fill="#fff"/><rect x="1425" y="466" width="1" height="3" fill="#fff"/><rect x="1489" y="466" width="1" height="3" fill="#fff"/><rect x="1553" y="466" width="1" height="3" fill="#fff"/><rect x="337" y="189" width="9" height="1" fill="#32cd32"/><rect x="352" y="189" width="3" height="1" fill="#32cd32"/><rect x="361" y="189" width="9" height="1" fill="#32cd32"/><rect x="376" y="189" width="3" height="1" fill="#32cd32"/><rect x="385" y="189" width="9" height="1" fill="#32cd32"/><rect x="400" y="189" width="3" height="1" fill="#32cd32"/><rect x="409" y="189" width="9" height="1" fill="#32cd32"/><rect x="424" y="189" width="3" height="1" fill="#32cd32"/><rect x="433" y="189" width="9" height="1" fill="#32cd32"/><rect x="448" y="189" width="3" height="1" fill="#32cd32"/><rect x="457" y="189" width="9" height="1" fill="#32cd32"/><rect x="472" y="189" width="3" height="1" fill="#32cd32"/><rect x="481" y="189" width="9" height="1" fill="#32cd32"/><rect x="496" y="189" width="3" height="1" fill="#32cd32"/><rect x="505" y="189" width="9" height="1" fill="#32cd32"/><rect x="520" y="189" width="3" height="1" fill="#32cd32"/><rect x="529" y="189" width="9" height="1" fill="#32cd32"/><rect x="544" y="189" width="3" height="1" fill="#32cd32"/><rect x="553" y="189" width="9" height="1" fill="#32cd32"/><rect x="568" y="189" width="3" height="1" fill="#32cd32"/><rect x="577" y="189" width="9" height="1" fill="#32cd32"/><rect x="592" y="189" width="3" height="1" fill="#32cd32"/><rect x="601" y="189" width="9" height="1" fill="#32cd32"/><rect x="616" y="189" width="3" height="1" fill="#32cd32"/><rect x="625" y="189" width="9" height="1" fill="#32cd32"/><rect x="640" y="189" width="3" height="1" fill="#32cd32"/><rect x="649" y="189" width="9" height="1" fill="#32cd32"/><rect x="664" y="189" width="3" height="1" fill="#32cd32"/><rect x="673" y="189" width="9" height="1" fill="#32cd32"/><rect x="688" y="189" width="3" height="1" fill="#32cd32"/><rect x="697" y="189" width="9" height="1" fill="#32cd32"/><rect x="712" y="189" width="3" height="1" fill="#32cd32"/><rect x="721" y="189" width="9" height="1" fill="#32cd32"/><rect x="736" y="189" width="3" height="1" fill="#32cd32"/><rect x="745" y="189" width="9" height="1" fill="#32cd32"/><rect x="760" y="189" width="3" height="1" fill="#32cd32"/><rect x="769" y="189" width="9" height="1" fill="#32cd32"/><rect x="784" y="189" width="3" height="1" fill="#32cd32"/><rect x="793" y="189" width="9" height="1" fill="#32cd32"/><rect x="808" y="189" width="3" height="1" fill="#32cd32"/><rect x="817" y="189" width="9" height="1" fill="#32cd32"/><rect x="832" y="189" width="3" height="1" fill="#32cd32"/><rect x="841" y="189" width="9" height="1" fill="#32cd32"/><rect x="856" y="189" width="3" height="1" fill="#32cd32"/><rect x="865" y="189" width="9" height="1" fill="#32cd32"/><rect x="880" y="189" width="3" height="1" fill="#32cd32"/><rect x="889" y="189" width="9" height="1" fill="#32cd32"/><rect x="904" y="189" width="3" height="1" fill="#32cd32"/><rect x="913" y="189" width="9" height="1" fill="#32cd32"/><rect x="928" y="189" width="3" height="1" fill="#32cd32"/><rect x="937" y="189" width="9" height="1" fill="#32cd32"/><rect x="952" y="189" width="3" height="1" fill="#32cd32"/><rect x="961" y="189" width="9" height="1" fill="#32cd32"/><rect x="976" y="189" width="3" height="1" fill="#32cd32"/><rect x="985" y="189" width="9" height="1" fill="#32cd32"/><rect x="1000" y="189" width="3" height="1" fill="#32cd32"/><rect x="1009" y="189" width="9" height="1" fill="#32cd32"/><rect x="1024" y="189" width="3" height="1" fill="#32cd32"/><rect x="1033" y="189" width="9" height="1" fill="#32cd32"/><rect x="1048" y="189" width="3" height="1" fill="#32cd32"/><rect x="1057" y="189" width="9" height="1" fill="#32cd32"/><rect x="1072" y="189" width="3" height="1" fill="#32cd32"/><rect x="1081" y="189" width="9" height="1" fill="#32cd32"/><rect x="1096" y="189" width="3" height="1" fill="#32cd32"/><rect x="1105" y="189" width="9" height="1" fill="#32cd32"/><rect x="1120" y="189" width="3" height="1" fill="#32cd32"/><rect x="1129" y="189" width="9" height="1" fill="#32cd32"/><rect x="1144" y="189" width="3" height="1" fill="#32cd32"/><rect x="1153" y="189" width="9" height="1" fill="#32cd32"/><rect x="1168" y="189" width="3" height="1" fill="#32cd32"/><rect x="1177" y="189" width="9" height="1" fill="#32cd32"/><rect x="1192" y="189" width="3" height="1" fill="#32cd32"/><rect x="1201" y="189" width="9" height="1" fill="#32cd32"/><rect x="1216" y="189" width="3" height="1" fill="#32cd32"/><rect x="1225" y="189" width="9" height="1" fill="#32cd32"/><rect x="1240" y="189" width="3" height="1" fill="#32cd32"/><rect x="1249" y="189" width="9" height="1" fill="#32cd32"/><rect x="1264" y="189" width="3" height="1" fill="#32cd32"/><rect x="1273" y="189" width="9" height="1" fill="#32cd32"/><rect x="1288" y="189" width="3" height="1" fill="#32cd32"/><rect x="1297" y="189" width="9" height="1" fill="#32cd32"/><rect x="1312" y="189" width="3" height="1" fill="#32cd32"/><rect x="1321" y="189" width="9" height="1" fill="#32cd32"/><rect x="1336" y="189" width="3" height="1" fill="#32cd32"/><rect x="1345" y="189" width="9" height="1" fill="#32cd32"/><rect x="1360" y="189" width="3" height="1" fill="#32cd32"/><rect x="1369" y="189" width="9" height="1" fill="#32cd32"/><rect x="1384" y="189" width="3" height="1" fill="#32cd32"/><rect x="1393" y="189" width="9" height="1" fill="#32cd32"/><rect x="1408" y="189" width="3" height="1" fill="#32cd32"/><rect x="1417" y="189" width="9" height="1" fill="#32cd32"/><rect x="1432" y="189" width="3" height="1" fill="#32cd32"/><rect x="1441" y="189" width="9" height="1" fill="#32cd32"/><rect x="1456" y="189" width="3" height="1" fill="#32cd32"/><rect x="1465" y="189" width="9" height="1" fill="#32cd32"/><rect x="1480" y="189" width="3" height="1" fill="#32cd32"/><rect x="1489" y="189" width="9" height="1" fill="#32cd32"/><rect x="1504" y="189" width="3" height="1" fill="#32cd32"/><rect x="1513" y="189" width="9" height="1" fill="#32cd32"/><rect x="1528" y="189" width="3" height="1" fill="#32cd32"/><rect x="1537" y="189" width="9" height="1" fill="#32cd32"/><rect x="1552" y="189" width="3" height="1" fill="#32cd32"/><rect x="1561" y="189" width="9" height="1" fill="#32cd32"/><rect x="1576" y="189" width="3" height="1" fill="#32cd32"/><rect x="1585" y="189" width="9" height="1" fill="#32cd32"/><rect x="1600" y="189" width="3" height="1" fill="#32cd32"/><rect x="1609" y="189" width="9" height="1" fill="#32cd32"/><rect x="1624" y="189" width="3" height="1" fill="#32cd32"/><rect x="1633" y="189" width="9" height="1" fill="#32cd32"/><rect x="1648" y="189" width="3" height="1" fill="#32cd32"/><rect x="1657" y="189" width="9" height="1" fill="#32cd32"/><rect x="1672" y="189" width="3" height="1" fill="#32cd32"/><rect x="1681" y="189" width="9" height="1" fill="#32cd32"/><rect x="1696" y="189" width="3" height="1" fill="#32cd32"/><rect x="1705" y="189" width="9" height="1" fill="#32cd32"/><rect x="1720" y="189" width="3" height="1" fill="#32cd32"/><rect x="1729" y="189" width="9" height="1" fill="#32cd32"/><rect x="1744" y="189" width="3" height="1" fill="#32cd32"/><rect x="1753" y="189" width="9" height="1" fill="#32cd32"/><rect x="1768" y="189" width="3" height="1" fill="#32cd32"/><rect x="1777" y="189" width="9" height="1" fill="#32cd32"/><rect x="1792" y="189" width="3" height="1" fill="#32cd32"/><rect x="1801" y="189" width="9" height="1" fill="#32cd32"/><rect x="1816" y="189" width="3" height="1" fill="#32cd32"/><rect x="1825" y="189" width="9" height="1" fill="#32cd32"/><rect x="1840" y="189" width="3" height="1" fill="#32cd32"/><rect x="1849" y="189" width="9" height="1" fill="#32cd32"/><rect x="1864" y="189" width="3" height="1" fill="#32cd32"/><rect x="337" y="331" width="9" height="1" fill="#ff0000"/><rect x="352" y="331" width="3" height="1" fill="#ff0000"/><rect x="361" y="331" width="9" height="1" fill="#ff0000"/><rect x="376" y="331" width="3" height="1" fill="#ff0000"/><rect x="385" y="331" width="9" height="1" fill="#ff0000"/><rect x="400" y="331" width="3" height="1" fill="#ff0000"/><rect x="409" y="331" width="9" height="1" fill="#ff0000"/><rect x="424" y="331" width="3" height="1" fill="#ff0000"/><rect x="433" y="331" width="9" height="1" fill="#ff0000"/><rect x="448" y="331" width="3" height="1" fill="#ff0000"/><rect x="457" y="331" width="9" height="1" fill="#ff0000"/><rect x="472" y="331" width="3" height="1" fill="#ff0000"/><rect x="481" y="331" width="9" height="1" fill="#ff0000"/><rect x="496" y="331" width="3" height="1" fill="#ff0000"/><rect x="505" y="331" width="9" height="1" fill="#ff0000"/><rect x="520" y="331" width="3" height="1" fill="#ff0000"/><rect x="529" y="331" width="9" height="1" fill="#ff0000"/><rect x="544" y="331" width="3" height="1" fill="#ff0000"/><rect x="553" y="331" width="9" height="1" fill="#ff0000"/><rect x="568" y="331" width="3" height="1" fill="#ff0000"/><rect x="577" y="331" width="9" height="1" fill="#ff0000"/><rect x="592" y="331" width="3" height="1" fill="#ff0000"/><rect x="601" y="331" width="9" height="1" fill="#ff0000"/><rect x="616" y="331" width="3" height="1" fill="#ff0000"/><rect x="625" y="331" width="9" height="1" fill="#ff0000"/><rect x="640" y="331" width="3" height="1" fill="#ff0000"/><rect x="649" y="331" width="9" height="1" fill="#ff0000"/><rect x="664" y="331" width="3" height="1" fill="#ff0000"/><rect x="673" y="331" width="9" height="1" fill="#ff0000"/><rect x="688" y="331" width="3" height="1" fill="#ff0000"/><rect x="697" y="331" width="9" height="1" fill="#ff0000"/><rect x="712" y="331" width="3" height="1" fill="#ff0000"/><rect x="721" y="331" width="9" height="1" fill="#ff0000"/><rect x="736" y="331" width="3" height="1" fill="#ff0000"/><rect x="745" y="331" width="9" height="1" fill="#ff0000"/><rect x="760" y="331" width="3" height="1" fill="#ff0000"/><rect x="769" y="331" width="9" height="1" fill="#ff0000"/><rect x="784" y="331" width="3" height="1" fill="#ff0000"/><rect x="793" y="331" width="9" height="1" fill="#ff0000"/><rect x="808" y="331" width="3" height="1" fill="#ff0000"/><rect x="817" y="331" width="9" height="1" fill="#ff0000"/><rect x="832" y="331" width="3" height="1" fill="#ff0000"/><rect x="841" y="331" width="9" height="1" fill="#ff0000"/><rect x="856" y="331" width="3" height="1" fill="#ff0000"/><rect x="865" y="331" width="9" height="1" fill="#ff0000"/><rect x="880" y="331" width="3" height="1" fill="#ff0000"/><rect x="889" y="331" width="9" height="1" fill="#ff0000"/><rect x="904" y="331" width="3" height="1" fill="#ff0000"/><rect x="913" y="331" width="9" height="1" fill="#ff0000"/><rect x="928" y="331" width="3" height="1" fill="#ff0000"/><rect x="937" y="331" width="9" height="1" fill="#ff0000"/><rect x="952" y="331" width="3" height="1" fill="#ff0000"/><rect x="961" y="331" width="9" height="1" fill="#ff0000"/><rect x="976" y="331" width="3" height="1" fill="#ff0000"/><rect x="985" y="331" width="9" height="1" fill="#ff0000"/><rect x="1000" y="331" width="3" height="1" fill="#ff0000"/><rect x="1009" y="331" width="9" height="1" fill="#ff0000"/><rect x="1024" y="331" width="3" height="1" fill="#ff0000"/><rect x="1033" y="331" width="9" height="1" fill="#ff0000"/><rect x="1048" y="331" width="3" height="1" fill="#ff0000"/><rect x="1057" y="331" width="9" height="1" fill="#ff0000"/><rect x="1072" y="331" width="3" height="1" fill="#ff0000"/><rect x="1081" y="331" width="9" height="1" fill="#ff0000"/><rect x="1096" y="331" width="3" height="1" fill="#ff0000"/><rect x="1105" y="331" width="9" height="1" fill="#ff0000"/><rect x="1120" y="331" width="3" height="1" fill="#ff0000"/><rect x="1129" y="331" width="9" height="1" fill="#ff0000"/><rect x="1144" y="331" width="3" height="1" fill="#ff0000"/><rect x="1153" y="331" width="9" height="1" fill="#ff0000"/><rect x="1168" y="331" width="3" height="1" fill="#ff0000"/><rect x="1177" y="331" width="9" height="1" fill="#ff0000"/><rect x="1192" y="331" width="3" height="1" fill="#ff0000"/><rect x="1201" y="331" width="9" height="1" fill="#ff0000"/><rect x="1216" y="331" width="3" height="1" fill="#ff0000"/><rect x="1225" y="331" width="9" height="1" fill="#ff0000"/><rect x="1240" y="331" width="3" height="1" fill="#ff0000"/><rect x="1249" y="331" width="9" height="1" fill="#ff0000"/><rect x="1264" y="331" width="3" height="1" fill="#ff0000"/><rect x="1273" y="331" width="9" height="1" fill="#ff0000"/><rect x="1288" y="331" width="3" height="1" fill="#ff0000"/><rect x="1297" y="331" width="9" height="1" fill="#ff0000"/><rect x="1312" y="331" width="3" height="1" fill="#ff0000"/><rect x="1321" y="331" width="9" height="1" fill="#ff0000"/><rect x="1336" y="331" width="3" height="1" fill="#ff0000"/><rect x="1345" y="331" width="9" height="1" fill="#ff0000"/><rect x="1360" y="331" width="3" height="1" fill="#ff0000"/><rect x="1369" y="331" width="9" height="1" fill="#ff0000"/><rect x="1384" y="331" width="3" height="1" fill="#ff0000"/><rect x="1393" y="331" width="9" height="1" fill="#ff0000"/><rect x="1408" y="331" width="3" height="1" fill="#ff0000"/><rect x="1417" y="331" width="9" height="1" fill="#ff0000"/><rect x="1432" y="331" width="3" height="1" fill="#ff0000"/><rect x="1441" y="331" width="9" height="1" fill="#ff0000"/><rect x="1456" y="331" width="3" height="1" fill="#ff0000"/><rect x="1465" y="331" width="9" height="1" fill="#ff0000"/><rect x="1480" y="331" width="3" height="1" fill="#ff0000"/><rect x="1489" y="331" width="9" height="1" fill="#ff0000"/><rect x="1504" y="331" width="3" height="1" fill="#ff0000"/><rect x="1513" y="331" width="9" height="1" fill="#ff0000"/><rect x="1528" y="331" width="3" height="1" fill="#ff0000"/><rect x="1537" y="331" width="9" height="1" fill="#ff0000"/><rect x="1552" y="331" width="3" height="1" fill="#ff0000"/><rect x="1561" y="331" width="9" height="1" fill="#ff0000"/><rect x="1576" y="331" width="3" height="1" fill="#ff0000"/><rect x="1585" y="331" width="9" height="1" fill="#ff0000"/><rect x="1600" y="331" width="3" height="1" fill="#ff0000"/><rect x="1609" y="331" width="9" height="1" fill="#ff0000"/><rect x="1624" y="331" width="3" height="1" fill="#ff0000"/><rect x="1633" y="331" width="9" height="1" fill="#ff0000"/><rect x="1648" y="331" width="3" height="1" fill="#ff0000"/><rect x="1657" y="331" width="9" height="1" fill="#ff0000"/><rect x="1672" y="331" width="3" height="1" fill="#ff0000"/><rect x="1681" y="331" width="9" height="1" fill="#ff0000"/><rect x="1696" y="331" width="3" height="1" fill="#ff0000"/><rect x="1705" y="331" width="9" height="1" fill="#ff0000"/><rect x="1720" y="331" width="3" height="1" fill="#ff0000"/><rect x="1729" y="331" width="9" height="1" fill="#ff0000"/><rect x="1744" y="331" width="3" height="1" fill="#ff0000"/><rect x="1753" y="331" width="9" height="1" fill="#ff0000"/><rect x="1768" y="331" width="3" height="1" fill="#ff0000"/><rect x="1777" y="331" width="9" height="1" fill="#ff0000"/><rect x="1792" y="331" width="3" height="1" fill="#ff0000"/><rect x="1801" y="331" width="9" height="1" fill="#ff0000"/><rect x="1816" y="331" width="3" height="1" fill="#ff0000"/><rect x="1825" y="331" width="9" height="1" fill="#ff0000"/><rect x="1840" y="331" width="3" height="1" fill="#ff0000"/><rect x="1849" y="331" width="9" height="1" fill="#ff0000"/><rect x="1864" y="331" width="3" height="1" fill="#ff0000"/><g fill="#00ff00"><rect x="337" y="445" width="1" height="11"/><rect x="336" y="447" width="3" height="7"/><rect x="337" y="448" width="1" height="5" fill="#000"/><rect x="341" y="446" width="1" height="6"/><rect x="340" y="449" width="3" height="1"/><rect x="345" y="446" width="1" height="7"/><rect x="344" y="450" width="3" height="3"/><rect x="345" y="451" width="1" height="1" fill="#fff"/><rect x="349" y="450" width="1" height="6"/><rect x="348" y="451" width="3" height="4"/><rect x="349" y="452" width="1" height="2" fill="#fff"/><rect x="353" y="415" width="1" height="42"/><rect x="352" y="428" width="3" height="26"/><rect x="353" y="429" width="1" height="24" fill="#000"/><rect x="357" y="383" width="1" height="48"/><rect x="356" y="392" width="3" height="38"/><rect x="357" y="393" width="1" height="36" fill="#000"/><rect x="361" y="388" width="1" height="20"/><rect x="360" y="393" width="3" height="9"/><rect x="361" y="394" width="1" height="7" fill="#fff"/><rect x="365" y="395" width="1" height="12"/><rect x="364" y="401" width="3" height="1"/><rect x="369" y="398" width="1" height="11"/><rect x="368" y="401" width="3" height="8"/><rect x="369" y="402" width="1" height="6" fill="#fff"/><rect x="373" y="403" width="1" height="6"/><rect x="372" y="405" width="3" height="4"/><rect x="373" y="406" width="1" height="2" fill="#fff"/><rect x="377" y="402" width="1" height="9"/><rect x="376" y="403" width="3" height="4"/><rect x="377" y="404" width="1" height="2" fill="#000"/><rect x="381" y="399" width="1" height="6"/><rect x="380" y="403" width="3" height="1"/><rect x="385" y="402" width="1" height="4"/><rect x="384" y="404" width="3" height="1"/><rect x="389" y="401" width="1" height="7"/><rect x="388" y="405" width="3" height="3"/><rect x="389" y="406" width="1" height="1" fill="#fff"/><rect x="393" y="403" width="1" height="7"/><rect x="392" y="404" width="3" height="4"/><rect x="393" y="405" width="1" height="2" fill="#000"/><rect x="397" y="404" width="1" height="8"/><rect x="396" y="404" width="3" height="4"/><rect x="397" y="405" width="1" height="2" fill="#000"/><rect x="401" y="401" width="1" height="7"/><rect x="400" y="401" width="3" height="5"/><rect x="401" y="402" width="1" height="3" fill="#000"/><rect x="405" y="394" width="1" height="11"/><rect x="404" y="394" width="3" height="9"/><rect x="405" y="395" width="1" height="7" fill="#000"/><rect x="409" y="390" width="1" height="10"/><rect x="408" y="393" width="3" height="3"/><rect x="409" y="394" width="1" height="1" fill="#000"/><rect x="413" y="391" width="1" height="7"/><rect x="412" y="393" width="3" height="4"/><rect x="413" y="394" width="1" height="2" fill="#fff"/><rect x="417" y="383" width="1" height="15"/><rect x="416" y="386" width="3" height="10"/><rect x="417" y="387" width="1" height="8" fill="#000"/><rect x="421" y="383" width="1" height="6"/><rect x="420" y="384" width="3" height="3"/><rect x="421" y="385" width="1" height="1" fill="#000"/><rect x="425" y="378" width="1" height="8"/><rect x="424" y="381" width="3" height="4"/><rect x="425" y="382" width="1" height="2" fill="#000"/><rect x="429" y="381" width="1" height="2"/><rect x="428" y="382" width="3" height="1"/><rect x="433" y="374" width="1" height="14"/><rect x="432" y="376" width="3" height="7"/><rect x="433" y="377" width="1" height="5" fill="#000"/><rect x="437" y="373" width="1" height="8"/><rect x="436" y="377" width="3" height="1"/><rect x="441" y="372" width="1" height="16"/><rect x="440" y="377" width="3" height="6"/><rect x="441" y="378" width="1" height="4" fill="#fff"/><rect x="445" y="372" width="1" height="33"/><rect x="444" y="382" width="3" height="17"/><rect x="445" y="383" width="1" height="15" fill="#fff"/><rect x="449" y="396" width="1" height="30"/><rect x="448" y="398" width="3" height="23"/><rect x="449" y="399" width="1" height="21" fill="#fff"/><rect x="453" y="401" width="1" height="23"/><rect x="452" y="404" width="3" height="17"/><rect x="453" y="405" width="1" height="15" fill="#000"/><rect x="457" y="402" width="1" height="7"/><rect x="456" y="404" width="3" height="3"/><rect x="457" y="405" width="1" height="1" fill="#000"/><rect x="461" y="404" width="1" height="8"/><rect x="460" y="406" width="3" height="5"/><rect x="461" y="407" width="1" height="3" fill="#fff"/><rect x="465" y="406" width="1" height="11"/><rect x="464" y="409" width="3" height="3"/><rect x="465" y="410" width="1" height="1" fill="#fff"/><rect x="469" y="405" width="1" height="12"/><rect x="468" y="408" width="3" height="4"/><rect x="469" y="409" width="1" height="2" fill="#000"/><rect x="473" y="405" width="1" height="11"/><rect x="472" y="408" width="3" height="7"/><rect x="473" y="409" width="1" height="5" fill="#fff"/><rect x="477" y="413" width="1" height="6"/><rect x="476" y="414" width="3" height="1"/><rect x="481" y="410" width="1" height="6"/><rect x="480" y="412" width="3" height="1"/><rect x="485" y="411" width="1" height="8"/><rect x="484" y="413" width="3" height="1"/><rect x="489" y="411" width="1" height="8"/><rect x="488" y="415" width="3" height="4"/><rect x="489" y="416" width="1" height="2" fill="#fff"/><rect x="493" y="410" width="1" height="14"/><rect x="492" y="411" width="3" height="10"/><rect x="493" y="412" width="1" height="8" fill="#000"/><rect x="497" y="406" width="1" height="9"/><rect x="496" y="409" width="3" height="3"/><rect x="497" y="410" width="1" height="1" fill="#000"/><rect x="501" y="402" width="1" height="14"/><rect x="500" y="407" width="3" height="4"/><rect x="501" y="408" width="1" height="2" fill="#000"/><rect x="505" y="404" width="1" height="4"/><rect x="504" y="405" width="3" height="2"/><rect x="509" y="391" width="1" height="20"/><rect x="508" y="394" width="3" height="12"/><rect x="509" y="395" width="1" height="10" fill="#000"/><rect x="513" y="392" width="1" height="4"/><rect x="512" y="393" width="3" height="3"/><rect x="513" y="394" width="1" height="1" fill="#000"/><rect x="517" y="390" width="1" height="12"/><rect x="516" y="393" width="3" height="4"/><rect x="517" y="394" width="1" height="2" fill="#fff"/><rect x="521" y="390" width="1" height="12"/><rect x="520" y="393" width="3" height="5"/><rect x="521" y="394" width="1" height="3" fill="#fff"/><rect x="525" y="394" width="1" height="7"/><rect x="524" y="397" width="3" height="4"/><rect x="525" y="398" width="1" height="2" fill="#fff"/><rect x="529" y="393" width="1" height="11"/><rect x="528" y="398" width="3" height="3"/><rect x="529" y="399" width="1" height="1" fill="#fff"/><rect x="533" y="396" width="1" height="7"/><rect x="532" y="398" width="3" height="4"/><rect x="533" y="399" width="1" height="2" fill="#fff"/><rect x="537" y="375" width="1" height="28"/><rect x="536" y="380" width="3" height="23"/><rect x="537" y="381" width="1" height="21" fill="#000"/><rect x="541" y="351" width="1" height="32"/><rect x="540" y="359" width="3" height="23"/><rect x="541" y="360" width="1" height="21" fill="#000"/><rect x="545" y="341" width="1" height="22"/><rect x="544" y="345" width="3" height="16"/><rect x="545" y="346" width="1" height="14" fill="#000"/><rect x="549" y="337" width="1" height="23"/><rect x="548" y="345" width="3" height="10"/><rect x="549" y="346" width="1" height="8" fill="#fff"/><rect x="553" y="347" width="1" height="11"/><rect x="552" y="349" width="3" height="6"/><rect x="553" y="350" width="1" height="4" fill="#fff"/><rect x="557" y="345" width="1" height="8"/><rect x="556" y="347" width="3" height="4"/><rect x="557" y="348" width="1" height="2" fill="#000"/><rect x="561" y="343" width="1" height="12"/><rect x="560" y="347" width="3" height="4"/><rect x="561" y="348" width="1" height="2" fill="#000"/><rect x="565" y="344" width="1" height="14"/><rect x="564" y="349" width="3" height="8"/><rect x="565" y="350" width="1" height="6" fill="#fff"/><rect x="569" y="353" width="1" height="8"/><rect x="568" y="355" width="3" height="1"/><rect x="573" y="347" width="1" height="14"/><rect x="572" y="351" width="3" height="7"/><rect x="573" y="352" width="1" height="5" fill="#000"/><rect x="577" y="343" width="1" height="14"/><rect x="576" y="345" width="3" height="8"/><rect x="577" y="346" width="1" height="6" fill="#000"/><rect x="581" y="342" width="1" height="13"/><rect x="580" y="345" width="3" height="6"/><rect x="581" y="346" width="1" height="4" fill="#000"/><rect x="585" y="341" width="1" height="14"/><rect x="584" y="344" width="3" height="7"/><rect x="585" y="345" width="1" height="5" fill="#000"/><rect x="589" y="338" width="1" height="9"/><rect x="588" y="340" width="3" height="5"/><rect x="589" y="341" width="1" height="3" fill="#000"/><rect x="593" y="339" width="1" height="7"/><rect x="592" y="340" width="3" height="4"/><rect x="593" y="341" width="1" height="2" fill="#000"/><rect x="597" y="341" width="1" height="9"/><rect x="596" y="343" width="3" height="5"/><rect x="597" y="344" width="1" height="3" fill="#fff"/><rect x="601" y="344" width="1" height="6"/><rect x="600" y="346" width="3" height="4"/><rect x="601" y="347" width="1" height="2" fill="#fff"/><rect x="605" y="332" width="1" height="20"/><rect x="604" y="337" width="3" height="13"/><rect x="605" y="338" width="1" height="11" fill="#000"/><rect x="609" y="331" width="1" height="10"/><rect x="608" y="334" width="3" height="4"/><rect x="609" y="335" width="1" height="2" fill="#000"/><rect x="613" y="327" width="1" height="10"/><rect x="612" y="327" width="3" height="8"/><rect x="613" y="328" width="1" height="6" fill="#000"/><rect x="617" y="322" width="1" height="9"/><rect x="616" y="326" width="3" height="4"/><rect x="617" y="327" width="1" height="2" fill="#000"/><rect x="621" y="322" width="1" height="16"/><rect x="620" y="326" width="3" height="9"/><rect x="621" y="327" width="1" height="7" fill="#fff"/><rect x="625" y="331" width="1" height="6"/><rect x="624" y="334" width="3" height="1"/><rect x="629" y="327" width="1" height="22"/><rect x="628" y="335" width="3" height="11"/><rect x="629" y="336" width="1" height="9" fill="#fff"/><rect x="633" y="345" width="1" height="18"/><rect x="632" y="345" width="3" height="13"/><rect x="633" y="346" width="1" height="11" fill="#fff"/><rect x="637" y="345" width="1" height="18"/><rect x="636" y="349" width="3" height="10"/><rect x="637" y="350" width="1" height="8" fill="#fff"/><rect x="641" y="344" width="1" height="16"/><rect x="640" y="348" width="3" height="8"/><rect x="641" y="349" width="1" height="6" fill="#fff"/><rect x="645" y="355" width="1" height="8"/><rect x="644" y="355" width="3" height="1"/><rect x="649" y="352" width="1" height="9"/><rect x="648" y="353" width="3" height="3"/><rect x="649" y="354" width="1" height="1" fill="#000"/><rect x="653" y="350" width="1" height="9"/><rect x="652" y="354" width="3" height="5"/><rect x="653" y="355" width="1" height="3" fill="#fff"/><rect x="657" y="353" width="1" height="5"/><rect x="656" y="355" width="3" height="2"/><rect x="661" y="355" width="1" height="8"/><rect x="660" y="357" width="3" height="1"/><rect x="665" y="362" width="1" height="14"/><rect x="664" y="364" width="3" height="11"/><rect x="665" y="365" width="1" height="9" fill="#fff"/><rect x="669" y="363" width="1" height="12"/><rect x="668" y="366" width="3" height="9"/><rect x="669" y="367" width="1" height="7" fill="#fff"/><rect x="673" y="354" width="1" height="13"/><rect x="672" y="355" width="3" height="12"/><rect x="673" y="356" width="1" height="10" fill="#000"/><rect x="677" y="344" width="1" height="16"/><rect x="676" y="350" width="3" height="6"/><rect x="677" y="351" width="1" height="4" fill="#000"/><rect x="681" y="349" width="1" height="4"/><rect x="680" y="351" width="3" height="1"/><rect x="685" y="350" width="1" height="6"/><rect x="684" y="353" width="3" height="3"/><rect x="685" y="354" width="1" height="1" fill="#fff"/><rect x="689" y="354" width="1" height="5"/><rect x="688" y="355" width="3" height="2"/><rect x="693" y="352" width="1" height="9"/><rect x="692" y="356" width="3" height="3"/><rect x="693" y="357" width="1" height="1" fill="#fff"/><rect x="697" y="356" width="1" height="10"/><rect x="696" y="359" width="3" height="4"/><rect x="697" y="360" width="1" height="2" fill="#fff"/><rect x="701" y="360" width="1" height="12"/><rect x="700" y="363" width="3" height="4"/><rect x="701" y="364" width="1" height="2" fill="#fff"/><rect x="705" y="359" width="1" height="10"/><rect x="704" y="360" width="3" height="8"/><rect x="705" y="361" width="1" height="6" fill="#000"/><rect x="709" y="355" width="1" height="19"/><rect x="708" y="360" width="3" height="9"/><rect x="709" y="361" width="1" height="7" fill="#fff"/><rect x="713" y="365" width="1" height="17"/><rect x="712" y="370" width="3" height="7"/><rect x="713" y="371" width="1" height="5" fill="#fff"/><rect x="717" y="374" width="1" height="7"/><rect x="716" y="377" width="3" height="3"/><rect x="717" y="378" width="1" height="1" fill="#fff"/><rect x="721" y="378" width="1" height="14"/><rect x="720" y="380" width="3" height="11"/><rect x="721" y="381" width="1" height="9" fill="#fff"/><rect x="725" y="383" width="1" height="11"/><rect x="724" y="386" width="3" height="5"/><rect x="725" y="387" width="1" height="3" fill="#fff"/><rect x="729" y="375" width="1" height="14"/><rect x="728" y="380" width="3" height="7"/><rect x="729" y="381" width="1" height="5" fill="#000"/><rect x="733" y="373" width="1" height="11"/><rect x="732" y="373" width="3" height="9"/><rect x="733" y="374" width="1" height="7" fill="#000"/><rect x="737" y="371" width="1" height="7"/><rect x="736" y="374" width="3" height="2"/><rect x="741" y="365" width="1" height="15"/><rect x="740" y="365" width="3" height="12"/><rect x="741" y="366" width="1" height="10" fill="#000"/><rect x="745" y="361" width="1" height="9"/><rect x="744" y="362" width="3" height="5"/><rect x="745" y="363" width="1" height="3" fill="#000"/><rect x="749" y="359" width="1" height="9"/><rect x="748" y="362" width="3" height="4"/><rect x="749" y="363" width="1" height="2" fill="#000"/><rect x="753" y="362" width="1" height="6"/><rect x="752" y="365" width="3" height="1"/><rect x="757" y="352" width="1" height="16"/><rect x="756" y="355" width="3" height="11"/><rect x="757" y="356" width="1" height="9" fill="#000"/><rect x="761" y="339" width="1" height="20"/><rect x="760" y="341" width="3" height="16"/><rect x="761" y="342" width="1" height="14" fill="#000"/><rect x="765" y="327" width="1" height="18"/><rect x="764" y="331" width="3" height="12"/><rect x="765" y="332" width="1" height="10" fill="#000"/><rect x="769" y="327" width="1" height="11"/><rect x="768" y="329" width="3" height="4"/><rect x="769" y="330" width="1" height="2" fill="#000"/><rect x="773" y="320" width="1" height="11"/><rect x="772" y="323" width="3" height="8"/><rect x="773" y="324" width="1" height="6" fill="#000"/><rect x="777" y="324" width="1" height="5"/><rect x="776" y="324" width="3" height="2"/><rect x="781" y="320" width="1" height="11"/><rect x="780" y="325" width="3" height="3"/><rect x="781" y="326" width="1" height="1" fill="#fff"/><rect x="785" y="324" width="1" height="10"/><rect x="784" y="326" width="3" height="5"/><rect x="785" y="327" width="1" height="3" fill="#fff"/><rect x="789" y="320" width="1" height="14"/><rect x="788" y="325" width="3" height="6"/><rect x="789" y="326" width="1" height="4" fill="#000"/><rect x="793" y="322" width="1" height="17"/><rect x="792" y="325" width="3" height="13"/><rect x="793" y="326" width="1" height="11" fill="#fff"/><rect x="797" y="335" width="1" height="12"/><rect x="796" y="337" width="3" height="9"/><rect x="797" y="338" width="1" height="7" fill="#fff"/><rect x="801" y="332" width="1" height="19"/><rect x="800" y="334" width="3" height="12"/><rect x="801" y="335" width="1" height="10" fill="#000"/><rect x="805" y="333" width="1" height="9"/><rect x="804" y="335" width="3" height="4"/><rect x="805" y="336" width="1" height="2" fill="#000"/><rect x="809" y="331" width="1" height="13"/><rect x="808" y="333" width="3" height="6"/><rect x="809" y="334" width="1" height="4" fill="#000"/><rect x="813" y="310" width="1" height="29"/><rect x="812" y="310" width="3" height="24"/><rect x="813" y="311" width="1" height="22" fill="#000"/><rect x="817" y="284" width="1" height="28"/><rect x="816" y="289" width="3" height="23"/><rect x="817" y="290" width="1" height="21" fill="#000"/><rect x="821" y="283" width="1" height="14"/><rect x="820" y="289" width="3" height="4"/><rect x="821" y="290" width="1" height="2" fill="#000"/><rect x="825" y="289" width="1" height="15"/><rect x="824" y="292" width="3" height="11"/><rect x="825" y="293" width="1" height="9" fill="#fff"/><rect x="829" y="299" width="1" height="6"/><rect x="828" y="300" width="3" height="1"/><rect x="833" y="298" width="1" height="17"/><rect x="832" y="300" width="3" height="10"/><rect x="833" y="301" width="1" height="8" fill="#fff"/><rect x="837" y="301" width="1" height="13"/><rect x="836" y="303" width="3" height="7"/><rect x="837" y="304" width="1" height="5" fill="#fff"/><rect x="841" y="301" width="1" height="7"/><rect x="840" y="304" width="3" height="3"/><rect x="841" y="305" width="1" height="1" fill="#000"/><rect x="845" y="303" width="1" height="12"/><rect x="844" y="307" width="3" height="3"/><rect x="845" y="308" width="1" height="1" fill="#fff"/><rect x="849" y="302" width="1" height="6"/><rect x="848" y="306" width="3" height="1"/><rect x="853" y="304" width="1" height="11"/><rect x="852" y="306" width="3" height="7"/><rect x="853" y="307" width="1" height="5" fill="#fff"/><rect x="857" y="310" width="1" height="5"/><rect x="856" y="312" width="3" height="3"/><rect x="857" y="313" width="1" height="1" fill="#fff"/><rect x="861" y="312" width="1" height="8"/><rect x="860" y="314" width="3" height="1"/><rect x="865" y="311" width="1" height="8"/><rect x="864" y="313" width="3" height="1"/><rect x="869" y="303" width="1" height="14"/><rect x="868" y="306" width="3" height="9"/><rect x="869" y="307" width="1" height="7" fill="#000"/><rect x="873" y="304" width="1" height="3"/><rect x="872" y="306" width="3" height="1"/><rect x="877" y="302" width="1" height="8"/><rect x="876" y="302" width="3" height="7"/><rect x="877" y="303" width="1" height="5" fill="#000"/><rect x="881" y="292" width="1" height="15"/><rect x="880" y="294" width="3" height="9"/><rect x="881" y="295" width="1" height="7" fill="#000"/><rect x="885" y="287" width="1" height="21"/><rect x="884" y="294" width="3" height="13"/><rect x="885" y="295" width="1" height="11" fill="#fff"/><rect x="889" y="296" width="1" height="13"/><rect x="888" y="298" width="3" height="9"/><rect x="889" y="299" width="1" height="7" fill="#fff"/><rect x="893" y="298" width="1" height="7"/><rect x="892" y="298" width="3" height="4"/><rect x="893" y="299" width="1" height="2" fill="#000"/><rect x="897" y="299" width="1" height="8"/><rect x="896" y="301" width="3" height="3"/><rect x="897" y="302" width="1" height="1" fill="#fff"/><rect x="901" y="297" width="1" height="10"/><rect x="900" y="299" width="3" height="5"/><rect x="901" y="300" width="1" height="3" fill="#000"/><rect x="905" y="296" width="1" height="15"/><rect x="904" y="299" width="3" height="8"/><rect x="905" y="300" width="1" height="6" fill="#fff"/><rect x="909" y="297" width="1" height="10"/><rect x="908" y="299" width="3" height="8"/><rect x="909" y="300" width="1" height="6" fill="#000"/><rect x="913" y="298" width="1" height="25"/><rect x="912" y="301" width="3" height="17"/><rect x="913" y="302" width="1" height="15" fill="#fff"/><rect x="917" y="313" width="1" height="18"/><rect x="916" y="317" width="3" height="12"/><rect x="917" y="318" width="1" height="10" fill="#fff"/><rect x="921" y="326" width="1" height="3"/><rect x="920" y="328" width="3" height="1"/><rect x="925" y="323" width="1" height="16"/><rect x="924" y="328" width="3" height="9"/><rect x="925" y="329" width="1" height="7" fill="#fff"/><rect x="929" y="329" width="1" height="10"/><rect x="928" y="329" width="3" height="8"/><rect x="929" y="330" width="1" height="6" fill="#fff"/><rect x="933" y="328" width="1" height="7"/><rect x="932" y="330" width="3" height="3"/><rect x="933" y="331" width="1" height="1" fill="#000"/><rect x="937" y="327" width="1" height="7"/><rect x="936" y="332" width="3" height="1"/><rect x="941" y="330" width="1" height="7"/><rect x="940" y="330" width="3" height="4"/><rect x="941" y="331" width="1" height="2" fill="#000"/><rect x="945" y="321" width="1" height="11"/><rect x="944" y="326" width="3" height="5"/><rect x="945" y="327" width="1" height="3" fill="#000"/><rect x="949" y="321" width="1" height="8"/><rect x="948" y="321" width="3" height="6"/><rect x="949" y="322" width="1" height="4" fill="#000"/><rect x="953" y="317" width="1" height="9"/><rect x="952" y="319" width="3" height="4"/><rect x="953" y="320" width="1" height="2" fill="#000"/><rect x="957" y="310" width="1" height="12"/><rect x="956" y="310" width="3" height="11"/><rect x="957" y="311" width="1" height="9" fill="#000"/><rect x="961" y="305" width="1" height="14"/><rect x="960" y="310" width="3" height="9"/><rect x="961" y="311" width="1" height="7" fill="#fff"/><rect x="965" y="313" width="1" height="11"/><rect x="964" y="314" width="3" height="5"/><rect x="965" y="315" width="1" height="3" fill="#fff"/><rect x="969" y="311" width="1" height="6"/><rect x="968" y="314" width="3" height="1"/><rect x="973" y="308" width="1" height="12"/><rect x="972" y="314" width="3" height="1"/><rect x="977" y="312" width="1" height="11"/><rect x="976" y="315" width="3" height="3"/><rect x="977" y="316" width="1" height="1" fill="#fff"/><rect x="981" y="313" width="1" height="10"/><rect x="980" y="318" width="3" height="3"/><rect x="981" y="319" width="1" height="1" fill="#fff"/><rect x="985" y="317" width="1" height="7"/><rect x="984" y="320" width="3" height="2"/><rect x="989" y="315" width="1" height="10"/><rect x="988" y="320" width="3" height="3"/><rect x="989" y="321" width="1" height="1" fill="#fff"/><rect x="993" y="316" width="1" height="11"/><rect x="992" y="320" width="3" height="6"/><rect x="993" y="321" width="1" height="4" fill="#fff"/><rect x="997" y="320" width="1" height="10"/><rect x="996" y="324" width="3" height="1"/><rect x="1001" y="318" width="1" height="8"/><rect x="1000" y="321" width="3" height="4"/><rect x="1001" y="322" width="1" height="2" fill="#000"/><rect x="1005" y="319" width="1" height="12"/><rect x="1004" y="321" width="3" height="6"/><rect x="1005" y="322" width="1" height="4" fill="#fff"/><rect x="1009" y="325" width="1" height="8"/><rect x="1008" y="326" width="3" height="5"/><rect x="1009" y="327" width="1" height="3" fill="#fff"/><rect x="1013" y="320" width="1" height="12"/><rect x="1012" y="323" width="3" height="8"/><rect x="1013" y="324" width="1" height="6" fill="#000"/><rect x="1017" y="322" width="1" height="8"/><rect x="1016" y="324" width="3" height="3"/><rect x="1017" y="325" width="1" height="1" fill="#000"/><rect x="1021" y="322" width="1" height="8"/><rect x="1020" y="324" width="3" height="3"/><rect x="1021" y="325" width="1" height="1" fill="#fff"/><rect x="1025" y="318" width="1" height="12"/><rect x="1024" y="320" width="3" height="5"/><rect x="1025" y="321" width="1" height="3" fill="#000"/><rect x="1029" y="318" width="1" height="4"/><rect x="1028" y="320" width="3" height="1"/><rect x="1033" y="316" width="1" height="15"/><rect x="1032" y="320" width="3" height="6"/><rect x="1033" y="321" width="1" height="4" fill="#fff"/><rect x="1037" y="322" width="1" height="7"/><rect x="1036" y="324" width="3" height="3"/><rect x="1037" y="325" width="1" height="1" fill="#fff"/><rect x="1041" y="319" width="1" height="12"/><rect x="1040" y="321" width="3" height="6"/><rect x="1041" y="322" width="1" height="4" fill="#000"/><rect x="1045" y="317" width="1" height="8"/><rect x="1044" y="321" width="3" height="1"/><rect x="1049" y="316" width="1" height="9"/><rect x="1048" y="320" width="3" height="3"/><rect x="1049" y="321" width="1" height="1" fill="#000"/><rect x="1053" y="317" width="1" height="8"/><rect x="1052" y="320" width="3" height="2"/><rect x="1057" y="320" width="1" height="5"/><rect x="1056" y="321" width="3" height="1"/><rect x="1061" y="321" width="1" height="4"/><rect x="1060" y="321" width="3" height="1"/><rect x="1065" y="314" width="1" height="14"/><rect x="1064" y="319" width="3" height="4"/><rect x="1065" y="320" width="1" height="2" fill="#000"/><rect x="1069" y="315" width="1" height="9"/><rect x="1068" y="315" width="3" height="5"/><rect x="1069" y="316" width="1" height="3" fill="#000"/><rect x="1073" y="312" width="1" height="10"/><rect x="1072" y="315" width="3" height="4"/><rect x="1073" y="316" width="1" height="2" fill="#fff"/><rect x="1077" y="315" width="1" height="5"/><rect x="1076" y="316" width="3" height="3"/><rect x="1077" y="317" width="1" height="1" fill="#fff"/><rect x="1081" y="303" width="1" height="16"/><rect x="1080" y="305" width="3" height="13"/><rect x="1081" y="306" width="1" height="11" fill="#000"/><rect x="1085" y="299" width="1" height="9"/><rect x="1084" y="300" width="3" height="5"/><rect x="1085" y="301" width="1" height="3" fill="#000"/><rect x="1089" y="298" width="1" height="12"/><rect x="1088" y="301" width="3" height="9"/><rect x="1089" y="302" width="1" height="7" fill="#fff"/><rect x="1093" y="302" width="1" height="11"/><rect x="1092" y="304" width="3" height="6"/><rect x="1093" y="305" width="1" height="4" fill="#fff"/><rect x="1097" y="299" width="1" height="10"/><rect x="1096" y="301" width="3" height="4"/><rect x="1097" y="302" width="1" height="2" fill="#000"/><rect x="1101" y="294" width="1" height="13"/><rect x="1100" y="297" width="3" height="6"/><rect x="1101" y="298" width="1" height="4" fill="#000"/><rect x="1105" y="295" width="1" height="8"/><rect x="1104" y="297" width="3" height="1"/><rect x="1109" y="295" width="1" height="5"/><rect x="1108" y="298" width="3" height="1"/><rect x="1113" y="254" width="1" height="46"/><rect x="1112" y="273" width="3" height="27"/><rect x="1113" y="274" width="1" height="25" fill="#000"/><rect x="1117" y="271" width="1" height="6"/><rect x="1116" y="274" width="3" height="3"/><rect x="1117" y="275" width="1" height="1" fill="#000"/><rect x="1121" y="271" width="1" height="12"/><rect x="1120" y="273" width="3" height="6"/><rect x="1121" y="274" width="1" height="4" fill="#fff"/><rect x="1125" y="267" width="1" height="16"/><rect x="1124" y="268" width="3" height="12"/><rect x="1125" y="269" width="1" height="10" fill="#000"/><rect x="1129" y="268" width="1" height="9"/><rect x="1128" y="268" width="3" height="8"/><rect x="1129" y="269" width="1" height="6" fill="#fff"/><rect x="1133" y="272" width="1" height="8"/><rect x="1132" y="275" width="3" height="4"/><rect x="1133" y="276" width="1" height="2" fill="#fff"/><rect x="1137" y="272" width="1" height="7"/><rect x="1136" y="274" width="3" height="4"/><rect x="1137" y="275" width="1" height="2" fill="#000"/><rect x="1141" y="263" width="1" height="14"/><rect x="1140" y="266" width="3" height="10"/><rect x="1141" y="267" width="1" height="8" fill="#000"/><rect x="1145" y="261" width="1" height="6"/><rect x="1144" y="266" width="3" height="1"/><rect x="1149" y="261" width="1" height="11"/><rect x="1148" y="264" width="3" height="4"/><rect x="1149" y="265" width="1" height="2" fill="#000"/><rect x="1153" y="261" width="1" height="13"/><rect x="1152" y="264" width="3" height="8"/><rect x="1153" y="265" width="1" height="6" fill="#fff"/><rect x="1157" y="266" width="1" height="7"/><rect x="1156" y="266" width="3" height="5"/><rect x="1157" y="267" width="1" height="3" fill="#fff"/><rect x="1161" y="265" width="1" height="11"/><rect x="1160" y="266" width="3" height="8"/><rect x="1161" y="267" width="1" height="6" fill="#fff"/><rect x="1165" y="269" width="1" height="7"/><rect x="1164" y="272" width="3" height="4"/><rect x="1165" y="273" width="1" height="2" fill="#fff"/><rect x="1169" y="270" width="1" height="9"/><rect x="1168" y="272" width="3" height="5"/><rect x="1169" y="273" width="1" height="3" fill="#fff"/><rect x="1173" y="271" width="1" height="10"/><rect x="1172" y="274" width="3" height="4"/><rect x="1173" y="275" width="1" height="2" fill="#fff"/><rect x="1177" y="272" width="1" height="9"/><rect x="1176" y="274" width="3" height="4"/><rect x="1177" y="275" width="1" height="2" fill="#000"/><rect x="1181" y="265" width="1" height="16"/><rect x="1180" y="270" width="3" height="9"/><rect x="1181" y="271" width="1" height="7" fill="#000"/><rect x="1185" y="266" width="1" height="9"/><rect x="1184" y="269" width="3" height="3"/><rect x="1185" y="270" width="1" height="1" fill="#000"/><rect x="1189" y="264" width="1" height="9"/><rect x="1188" y="264" width="3" height="6"/><rect x="1189" y="265" width="1" height="4" fill="#000"/><rect x="1193" y="265" width="1" height="1"/><rect x="1192" y="265" width="3" height="1"/><rect x="1197" y="262" width="1" height="8"/><rect x="1196" y="262" width="3" height="6"/><rect x="1197" y="263" width="1" height="4" fill="#000"/><rect x="1201" y="252" width="1" height="13"/><rect x="1200" y="257" width="3" height="6"/><rect x="1201" y="258" width="1" height="4" fill="#000"/><rect x="1205" y="252" width="1" height="12"/><rect x="1204" y="257" width="3" height="6"/><rect x="1205" y="258" width="1" height="4" fill="#fff"/><rect x="1209" y="258" width="1" height="12"/><rect x="1208" y="262" width="3" height="3"/><rect x="1209" y="263" width="1" height="1" fill="#fff"/><rect x="1213" y="259" width="1" height="8"/><rect x="1212" y="263" width="3" height="1"/><rect x="1217" y="260" width="1" height="7"/><rect x="1216" y="262" width="3" height="3"/><rect x="1217" y="263" width="1" height="1" fill="#000"/><rect x="1221" y="260" width="1" height="6"/><rect x="1220" y="263" width="3" height="1"/><rect x="1225" y="258" width="1" height="10"/><rect x="1224" y="260" width="3" height="4"/><rect x="1225" y="261" width="1" height="2" fill="#000"/><rect x="1229" y="257" width="1" height="11"/><rect x="1228" y="260" width="3" height="8"/><rect x="1229" y="261" width="1" height="6" fill="#fff"/><rect x="1233" y="260" width="1" height="9"/><rect x="1232" y="262" width="3" height="7"/><rect x="1233" y="263" width="1" height="5" fill="#fff"/><rect x="1237" y="259" width="1" height="8"/><rect x="1236" y="260" width="3" height="4"/><rect x="1237" y="261" width="1" height="2" fill="#000"/><rect x="1241" y="257" width="1" height="11"/><rect x="1240" y="261" width="3" height="5"/><rect x="1241" y="262" width="1" height="3" fill="#fff"/><rect x="1245" y="262" width="1" height="4"/><rect x="1244" y="262" width="3" height="3"/><rect x="1245" y="263" width="1" height="1" fill="#fff"/><rect x="1249" y="258" width="1" height="12"/><rect x="1248" y="262" width="3" height="5"/><rect x="1249" y="263" width="1" height="3" fill="#fff"/><rect x="1253" y="245" width="1" height="28"/><rect x="1252" y="246" width="3" height="21"/><rect x="1253" y="247" width="1" height="19" fill="#000"/><rect x="1257" y="231" width="1" height="19"/><rect x="1256" y="233" width="3" height="14"/><rect x="1257" y="234" width="1" height="12" fill="#000"/><rect x="1261" y="220" width="1" height="20"/><rect x="1260" y="220" width="3" height="15"/><rect x="1261" y="221" width="1" height="13" fill="#000"/><rect x="1265" y="193" width="1" height="31"/><rect x="1264" y="195" width="3" height="27"/><rect x="1265" y="196" width="1" height="25" fill="#000"/><rect x="1269" y="191" width="1" height="12"/><rect x="1268" y="194" width="3" height="4"/><rect x="1269" y="195" width="1" height="2" fill="#000"/><rect x="1273" y="194" width="1" height="6"/><rect x="1272" y="194" width="3" height="3"/><rect x="1273" y="195" width="1" height="1" fill="#fff"/><rect x="1277" y="186" width="1" height="14"/><rect x="1276" y="189" width="3" height="8"/><rect x="1277" y="190" width="1" height="6" fill="#000"/><rect x="1281" y="188" width="1" height="6"/><rect x="1280" y="191" width="3" height="1"/><rect x="1285" y="193" width="1" height="4"/><rect x="1284" y="193" width="3" height="1"/><rect x="1289" y="181" width="1" height="14"/><rect x="1288" y="183" width="3" height="9"/><rect x="1289" y="184" width="1" height="7" fill="#000"/><rect x="1293" y="167" width="1" height="17"/><rect x="1292" y="169" width="3" height="15"/><rect x="1293" y="170" width="1" height="13" fill="#000"/><rect x="1297" y="162" width="1" height="15"/><rect x="1296" y="169" width="3" height="7"/><rect x="1297" y="170" width="1" height="5" fill="#fff"/><rect x="1301" y="168" width="1" height="13"/><rect x="1300" y="171" width="3" height="6"/><rect x="1301" y="172" width="1" height="4" fill="#fff"/><rect x="1305" y="175" width="1" height="15"/><rect x="1304" y="176" width="3" height="9"/><rect x="1305" y="177" width="1" height="7" fill="#fff"/><rect x="1309" y="175" width="1" height="12"/><rect x="1308" y="178" width="3" height="7"/><rect x="1309" y="179" width="1" height="5" fill="#fff"/><rect x="1313" y="170" width="1" height="15"/><rect x="1312" y="179" width="3" height="1"/><rect x="1317" y="177" width="1" height="6"/><rect x="1316" y="179" width="3" height="4"/><rect x="1317" y="180" width="1" height="2" fill="#fff"/><rect x="1321" y="182" width="1" height="11"/><rect x="1320" y="183" width="3" height="7"/><rect x="1321" y="184" width="1" height="5" fill="#fff"/><rect x="1325" y="187" width="1" height="6"/><rect x="1324" y="188" width="3" height="3"/><rect x="1325" y="189" width="1" height="1" fill="#fff"/><rect x="1329" y="184" width="1" height="24"/><rect x="1328" y="188" width="3" height="12"/><rect x="1329" y="189" width="1" height="10" fill="#fff"/><rect x="1333" y="196" width="1" height="7"/><rect x="1332" y="200" width="3" height="3"/><rect x="1333" y="201" width="1" height="1" fill="#fff"/><rect x="1337" y="191" width="1" height="12"/><rect x="1336" y="195" width="3" height="8"/><rect x="1337" y="196" width="1" height="6" fill="#000"/><rect x="1341" y="188" width="1" height="11"/><rect x="1340" y="191" width="3" height="5"/><rect x="1341" y="192" width="1" height="3" fill="#000"/><rect x="1345" y="189" width="1" height="10"/><rect x="1344" y="191" width="3" height="7"/><rect x="1345" y="192" width="1" height="5" fill="#fff"/><rect x="1349" y="181" width="1" height="22"/><rect x="1348" y="183" width="3" height="16"/><rect x="1349" y="184" width="1" height="14" fill="#000"/><rect x="1353" y="176" width="1" height="22"/><rect x="1352" y="184" width="3" height="3"/><rect x="1353" y="185" width="1" height="1" fill="#fff"/><rect x="1357" y="184" width="1" height="12"/><rect x="1356" y="187" width="3" height="4"/><rect x="1357" y="188" width="1" height="2" fill="#fff"/><rect x="1361" y="179" width="1" height="15"/><rect x="1360" y="181" width="3" height="10"/><rect x="1361" y="182" width="1" height="8" fill="#000"/><rect x="1365" y="172" width="1" height="10"/><rect x="1364" y="174" width="3" height="8"/><rect x="1365" y="175" width="1" height="6" fill="#000"/><rect x="1369" y="169" width="1" height="13"/><rect x="1368" y="174" width="3" height="6"/><rect x="1369" y="175" width="1" height="4" fill="#fff"/><rect x="1373" y="174" width="1" height="12"/><rect x="1372" y="178" width="3" height="6"/><rect x="1373" y="179" width="1" height="4" fill="#fff"/><rect x="1377" y="183" width="1" height="4"/><rect x="1376" y="183" width="3" height="2"/><rect x="1381" y="182" width="1" height="2"/><rect x="1380" y="183" width="3" height="1"/><rect x="1385" y="177" width="1" height="9"/><rect x="1384" y="177" width="3" height="7"/><rect x="1385" y="178" width="1" height="5" fill="#000"/><rect x="1389" y="174" width="1" height="13"/><rect x="1388" y="177" width="3" height="9"/><rect x="1389" y="178" width="1" height="7" fill="#fff"/><rect x="1393" y="175" width="1" height="16"/><rect x="1392" y="179" width="3" height="7"/><rect x="1393" y="180" width="1" height="5" fill="#fff"/><rect x="1397" y="179" width="1" height="1"/><rect x="1396" y="179" width="3" height="1"/><rect x="1401" y="177" width="1" height="11"/><rect x="1400" y="179" width="3" height="4"/><rect x="1401" y="180" width="1" height="2" fill="#fff"/><rect x="1405" y="180" width="1" height="11"/><rect x="1404" y="183" width="3" height="8"/><rect x="1405" y="184" width="1" height="6" fill="#fff"/><rect x="1409" y="174" width="1" height="18"/><rect x="1408" y="179" width="3" height="12"/><rect x="1409" y="180" width="1" height="10" fill="#000"/><rect x="1413" y="178" width="1" height="6"/><rect x="1412" y="179" width="3" height="4"/><rect x="1413" y="180" width="1" height="2" fill="#fff"/><rect x="1417" y="177" width="1" height="21"/><rect x="1416" y="182" width="3" height="13"/><rect x="1417" y="183" width="1" height="11" fill="#fff"/><rect x="1421" y="193" width="1" height="6"/><rect x="1420" y="194" width="3" height="2"/><rect x="1425" y="193" width="1" height="10"/><rect x="1424" y="195" width="3" height="6"/><rect x="1425" y="196" width="1" height="4" fill="#fff"/><rect x="1429" y="198" width="1" height="11"/><rect x="1428" y="200" width="3" height="4"/><rect x="1429" y="201" width="1" height="2" fill="#fff"/><rect x="1433" y="194" width="1" height="15"/><rect x="1432" y="199" width="3" height="6"/><rect x="1433" y="200" width="1" height="4" fill="#000"/><rect x="1437" y="185" width="1" height="28"/><rect x="1436" y="200" width="3" height="5"/><rect x="1437" y="201" width="1" height="3" fill="#fff"/><rect x="1441" y="195" width="1" height="25"/><rect x="1440" y="204" width="3" height="1"/><rect x="1445" y="196" width="1" height="21"/><rect x="1444" y="201" width="3" height="4"/><rect x="1445" y="202" width="1" height="2" fill="#000"/><rect x="1449" y="194" width="1" height="13"/><rect x="1448" y="195" width="3" height="7"/><rect x="1449" y="196" width="1" height="5" fill="#000"/><rect x="1453" y="190" width="1" height="16"/><rect x="1452" y="195" width="3" height="10"/><rect x="1453" y="196" width="1" height="8" fill="#fff"/><rect x="1457" y="201" width="1" height="9"/><rect x="1456" y="204" width="3" height="6"/><rect x="1457" y="205" width="1" height="4" fill="#fff"/><rect x="1461" y="203" width="1" height="8"/><rect x="1460" y="205" width="3" height="5"/><rect x="1461" y="206" width="1" height="3" fill="#fff"/><rect x="1465" y="203" width="1" height="6"/><rect x="1464" y="205" width="3" height="1"/><rect x="1469" y="203" width="1" height="7"/><rect x="1468" y="206" width="3" height="1"/><rect x="1473" y="192" width="1" height="13"/><rect x="1472" y="194" width="3" height="11"/><rect x="1473" y="195" width="1" height="9" fill="#000"/><rect x="1477" y="185" width="1" height="10"/><rect x="1476" y="190" width="3" height="5"/><rect x="1477" y="191" width="1" height="3" fill="#000"/><rect x="1481" y="185" width="1" height="8"/><rect x="1480" y="190" width="3" height="1"/><rect x="1485" y="185" width="1" height="13"/><rect x="1484" y="190" width="3" height="5"/><rect x="1485" y="191" width="1" height="3" fill="#fff"/><rect x="1489" y="193" width="1" height="6"/><rect x="1488" y="194" width="3" height="3"/><rect x="1489" y="195" width="1" height="1" fill="#fff"/><rect x="1493" y="189" width="1" height="11"/><rect x="1492" y="194" width="3" height="3"/><rect x="1493" y="195" width="1" height="1" fill="#000"/><rect x="1497" y="189" width="1" height="11"/><rect x="1496" y="192" width="3" height="3"/><rect x="1497" y="193" width="1" height="1" fill="#000"/><rect x="1501" y="187" width="1" height="11"/><rect x="1500" y="192" width="3" height="1"/><rect x="1505" y="193" width="1" height="6"/><rect x="1504" y="194" width="3" height="3"/><rect x="1505" y="195" width="1" height="1" fill="#fff"/><rect x="1509" y="177" width="1" height="22"/><rect x="1508" y="180" width="3" height="18"/><rect x="1509" y="181" width="1" height="16" fill="#000"/><rect x="1513" y="168" width="1" height="15"/><rect x="1512" y="178" width="3" height="4"/><rect x="1513" y="179" width="1" height="2" fill="#000"/><rect x="1517" y="172" width="1" height="14"/><rect x="1516" y="177" width="3" height="9"/><rect x="1517" y="178" width="1" height="7" fill="#fff"/><rect x="1521" y="181" width="1" height="29"/><rect x="1520" y="184" width="3" height="21"/><rect x="1521" y="185" width="1" height="19" fill="#fff"/><rect x="1525" y="203" width="1" height="10"/><rect x="1524" y="204" width="3" height="3"/><rect x="1525" y="205" width="1" height="1" fill="#fff"/><rect x="1529" y="200" width="1" height="12"/><rect x="1528" y="201" width="3" height="6"/><rect x="1529" y="202" width="1" height="4" fill="#000"/><rect x="1533" y="185" width="1" height="21"/><rect x="1532" y="188" width="3" height="14"/><rect x="1533" y="189" width="1" height="12" fill="#000"/><rect x="1537" y="159" width="1" height="32"/><rect x="1536" y="170" width="3" height="20"/><rect x="1537" y="171" width="1" height="18" fill="#000"/><rect x="1541" y="139" width="1" height="44"/><rect x="1540" y="144" width="3" height="26"/><rect x="1541" y="145" width="1" height="24" fill="#000"/><rect x="1545" y="119" width="1" height="30"/><rect x="1544" y="121" width="3" height="24"/><rect x="1545" y="122" width="1" height="22" fill="#000"/><rect x="1549" y="99" width="1" height="28"/><rect x="1548" y="108" width="3" height="15"/><rect x="1549" y="109" width="1" height="13" fill="#000"/><rect x="1553" y="107" width="1" height="20"/><rect x="1552" y="108" width="3" height="15"/><rect x="1553" y="109" width="1" height="13" fill="#fff"/><rect x="1557" y="112" width="1" height="13"/><rect x="1556" y="113" width="3" height="10"/><rect x="1557" y="114" width="1" height="8" fill="#000"/></g><rect x="1874" y="108" width="41" height="11" fill="#fff"/><path d="M340 86 L348 86 L344 90.5 Z" fill="#fff"/></svg><div class="t" style="left:352px;top:83.04px;font-size:9.4px;line-height:9.4px;color:#fff;font-weight:normal;">XAUUSD,H1&nbsp;&nbsp;2067.02 2070.37 2066.51 2070.24</div><div class="t" style="left:343px;top:179.04px;font-size:9.4px;line-height:9.4px;color:#fff;font-weight:normal;">#466159014 buy 0.50</div><div class="t" style="left:343px;top:321.04px;font-size:9.4px;line-height:9.4px;color:#fff;font-weight:normal;">#466159014 sl</div><div class="t" style="left:1878px;top:95.04px;font-size:9.4px;line-height:9.4px;color:#fff;font-weight:normal;">2075.05</div><div class="t" style="left:1878px;top:128.04px;font-size:9.4px;line-height:9.4px;color:#fff;font-weight:normal;">2063.15</div><div class="t" style="left:1878px;top:161.04px;font-size:9.4px;line-height:9.4px;color:#fff;font-weight:normal;">2050.90</div><div class="t" style="left:1878px;top:194.04px;font-size:9.4px;line-height:9.4px;color:#fff;font-weight:normal;">2039.00</div><div class="t" style="left:1878px;top:227.04px;font-size:9.4px;line-height:9.4px;color:#fff;font-weight:normal;">2026.75</div><div class="t" style="left:1878px;top:260.04px;font-size:9.4px;line-height:9.4px;color:#fff;font-weight:normal;">2014.50</div><div class="t" style="left:1878px;top:293.04px;font-size:9.4px;line-height:9.4px;color:#fff;font-weight:normal;">2002.60</div><div class="t" style="left:1878px;top:326.04px;font-size:9.4px;line-height:9.4px;color:#fff;font-weight:normal;">1990.35</div><div class="t" style="left:1878px;top:359.04px;font-size:9.4px;line-height:9.4px;color:#fff;font-weight:normal;">1978.10</div><div class="t" style="left:1878px;top:392.04px;font-size:9.4px;line-height:9.4px;color:#fff;font-weight:normal;">1966.20</div><div class="t" style="left:1878px;top:425.04px;font-size:9.4px;line-height:9.4px;color:#fff;font-weight:normal;">1953.95</div><div class="t" style="left:1878px;top:458.04px;font-size:9.4px;line-height:9.4px;color:#fff;font-weight:normal;">1942.05</div><div class="t" style="left:1878px;top:108.44px;font-size:9.4px;line-height:9.4px;color:#000;font-weight:normal;">2070.24</div><div class="t" style="left:336px;top:470.04px;font-size:9.4px;line-height:9.4px;color:#fff;font-weight:normal;">14 Nov 2023</div><div class="t" style="left:400px;top:470.04px;font-size:9.4px;line-height:9.4px;color:#fff;font-weight:normal;">15 Nov 04:00</div><div class="t" style="left:464px;top:470.04px;font-size:9.4px;line-height:9.4px;color:#fff;font-weight:normal;">15 Nov 20:00</div><div class="t" style="left:528px;top:470.04px;font-size:9.4px;line-height:9.4px;color:#fff;font-weight:normal;">16 Nov 13:00</div><div class="t" style="left:592px;top:470.04px;font-size:9.4px;line-height:9.4px;color:#fff;font-weight:normal;">17 Nov 06:00</div><div class="t" style="left:656px;top:470.04px;font-size:9.4px;line-height:9.4px;color:#fff;font-weight:normal;">17 Nov 22:00</div><div class="t" style="left:720px;top:470.04px;font-size:9.4px;line-height:9.4px;color:#fff;font-weight:normal;">20 Nov 15:00</div><div class="t" style="left:784px;top:470.04px;font-size:9.4px;line-height:9.4px;color:#fff;font-weight:normal;">21 Nov 08:00</div><div class="t" style="left:848px;top:470.04px;font-size:9.4px;line-height:9.4px;color:#fff;font-weight:normal;">22 Nov 01:00</div><div class="t" style="left:912px;top:470.04px;font-size:9.4px;line-height:9.4px;color:#fff;font-weight:normal;">22 Nov 17:00</div><div class="t" style="left:976px;top:470.04px;font-size:9.4px;line-height:9.4px;color:#fff;font-weight:normal;">23 Nov 10:00</div><div class="t" style="left:1040px;top:470.04px;font-size:9.4px;line-height:9.4px;color:#fff;font-weight:normal;">24 Nov 05:00</div><div class="t" style="left:1104px;top:470.04px;font-size:9.4px;line-height:9.4px;color:#fff;font-weight:normal;">27 Nov 01:00</div><div class="t" style="left:1168px;top:470.04px;font-size:9.4px;line-height:9.4px;color:#fff;font-weight:normal;">27 Nov 17:00</div><div class="t" style="left:1232px;top:470.04px;font-size:9.4px;line-height:9.4px;color:#fff;font-weight:normal;">28 Nov 10:00</div><div class="t" style="left:1296px;top:470.04px;font-size:9.4px;line-height:9.4px;color:#fff;font-weight:normal;">29 Nov 03:00</div><div class="t" style="left:1360px;top:470.04px;font-size:9.4px;line-height:9.4px;color:#fff;font-weight:normal;">29 Nov 19:00</div><div class="t" style="left:1424px;top:470.04px;font-size:9.4px;line-height:9.4px;color:#fff;font-weight:normal;">30 Nov 12:00</div><div class="t" style="left:1488px;top:470.04px;font-size:9.4px;line-height:9.4px;color:#fff;font-weight:normal;">1 Dec 05:00</div><div class="t" style="left:1552px;top:470.04px;font-size:9.4px;line-height:9.4px;color:#fff;font-weight:normal;">1 Dec 21:00</div><div style="left:333px;top:486px;width:1587px;height:1px;background:#fff"></div><div style="left:333px;top:488px;width:1587px;height:1px;background:#202020"></div><div style="left:333px;top:489px;width:1587px;height:19px;background:#f0f0f0"></div><div class="t" style="left:349px;top:491.84px;font-size:12px;line-height:12px;color:#806f88;font-weight:normal;transform:scaleX(0.875);transform-origin:left top;">EURUSD,H1</div><div class="t" style="left:433px;top:491.84px;font-size:12px;line-height:12px;color:#806f88;font-weight:normal;transform:scaleX(0.875);transform-origin:left top;">GBPUSD,H1</div><div class="t" style="left:517px;top:491.84px;font-size:12px;line-height:12px;color:#806f88;font-weight:normal;transform:scaleX(0.875);transform-origin:left top;">EURUSD,H1</div><div style="left:422px;top:492px;width:1px;height:12px;background:#606060"></div><div style="left:506px;top:492px;width:1px;height:12px;background:#606060"></div><div style="left:590px;top:488px;width:84px;height:19px;background:#fff;border-left:1px solid #000;border-right:1px solid #333;border-bottom:1px solid #000;box-sizing:border-box"></div><div class="t" style="left:600px;top:491.84px;font-size:12px;line-height:12px;color:#000;font-weight:normal;transform:scaleX(0.870);transform-origin:left top;">XAUUSD,H1</div><svg style="left:1884px;top:493px" width="30" height="10"><path d="M6 1 L2 5 L6 9 Z" fill="#909090"/><path d="M24 1 L28 5 L24 9 Z" fill="#909090"/></svg><div style="left:0px;top:508px;width:1920px;height:1px;background:#ffffff"></div><div style="left:0px;top:507px;width:334px;height:1px;background:#999"></div><svg style="left:4px;top:515px" width="6" height="5" shape-rendering="crispEdges"><rect x="0" y="0" width="1" height="1"/><rect x="1" y="0" width="1" height="1"/><rect x="4" y="0" width="1" height="1"/><rect x="5" y="0" width="1" height="1"/><rect x="1" y="1" width="1" height="1"/><rect x="2" y="1" width="1" height="1"/><rect x="3" y="1" width="1" height="1"/><rect x="4" y="1" width="1" height="1"/><rect x="2" y="2" width="1" height="1"/><rect x="3" y="2" width="1" height="1"/><rect x="1" y="3" width="1" height="1"/><rect x="2" y="3" width="1" height="1"/><rect x="3" y="3" width="1" height="1"/><rect x="4" y="3" width="1" height="1"/><rect x="0" y="4" width="1" height="1"/><rect x="1" y="4" width="1" height="1"/><rect x="4" y="4" width="1" height="1"/><rect x="5" y="4" width="1" height="1"/></svg><div style="left:1px;top:526px;width:13px;height:309px;background:#aec4de"></div><div style="left:15px;top:512px;width:1902px;height:323px;background:#fff;border-left:1px solid #a0a0a0;border-top:1px solid #a0a0a0;box-sizing:border-box"></div><div class="t" style="left:22px;top:519.34px;font-size:12px;line-height:12px;color:#000;font-weight:normal;transform:scaleX(0.960);transform-origin:left top;">Order</div><div class="t" style="left:63px;top:521.88px;font-size:9px;line-height:9px;color:#808080;font-weight:normal;">/</div><div class="t" style="left:-13px;width:400px;text-align:right;top:519.34px;font-size:12px;line-height:12px;color:#000;font-weight:normal;transform:scaleX(0.963);transform-origin:right top;">Time</div><div class="t" style="left:94px;width:400px;text-align:right;top:519.34px;font-size:12px;line-height:12px;color:#000;font-weight:normal;transform:scaleX(0.963);transform-origin:right top;">Type</div><div class="t" style="left:180px;width:400px;text-align:right;top:519.34px;font-size:12px;line-height:12px;color:#000;font-weight:normal;transform:scaleX(0.956);transform-origin:right top;">Size</div><div class="t" style="left:287px;width:400px;text-align:right;top:519.34px;font-size:12px;line-height:12px;color:#000;font-weight:normal;transform:scaleX(0.970);transform-origin:right top;">Symbol</div><div class="t" style="left:394px;width:400px;text-align:right;top:519.34px;font-size:12px;line-height:12px;color:#000;font-weight:normal;transform:scaleX(0.961);transform-origin:right top;">Price</div><div class="t" style="left:501px;width:400px;text-align:right;top:519.34px;font-size:12px;line-height:12px;color:#000;font-weight:normal;transform:scaleX(0.914);transform-origin:right top;">S / L</div><div class="t" style="left:608px;width:400px;text-align:right;top:519.34px;font-size:12px;line-height:12px;color:#000;font-weight:normal;transform:scaleX(0.914);transform-origin:right top;">T / P</div><div class="t" style="left:845px;width:400px;text-align:right;top:519.34px;font-size:12px;line-height:12px;color:#000;font-weight:normal;transform:scaleX(0.963);transform-origin:right top;">Time</div><div class="t" style="left:952px;width:400px;text-align:right;top:519.34px;font-size:12px;line-height:12px;color:#000;font-weight:normal;transform:scaleX(0.961);transform-origin:right top;">Price</div><div class="t" style="left:1059px;width:400px;text-align:right;top:519.34px;font-size:12px;line-height:12px;color:#000;font-weight:normal;transform:scaleX(0.963);transform-origin:right top;">Swap</div><div class="t" style="left:1177px;width:400px;text-align:right;top:519.34px;font-size:12px;line-height:12px;color:#000;font-weight:normal;transform:scaleX(0.961);transform-origin:right top;">Profit</div><div class="t" style="left:1511px;width:400px;text-align:right;top:519.34px;font-size:12px;line-height:12px;color:#000;font-weight:normal;transform:scaleX(0.973);transform-origin:right top;">Comment</div><div style="left:155px;top:513px;width:1px;height:24px;background:#e0e0e0"></div><div style="left:392px;top:513px;width:1px;height:24px;background:#e0e0e0"></div><div style="left:499px;top:513px;width:1px;height:24px;background:#e0e0e0"></div><div style="left:585px;top:513px;width:1px;height:24px;background:#e0e0e0"></div><div style="left:692px;top:513px;width:1px;height:24px;background:#e0e0e0"></div><div style="left:799px;top:513px;width:1px;height:24px;background:#e0e0e0"></div><div style="left:906px;top:513px;width:1px;height:24px;background:#e0e0e0"></div><div style="left:1013px;top:513px;width:1px;height:24px;background:#e0e0e0"></div><div style="left:1250px;top:513px;width:1px;height:24px;background:#e0e0e0"></div><div style="left:1357px;top:513px;width:1px;height:24px;background:#e0e0e0"></div><div style="left:1464px;top:513px;width:1px;height:24px;background:#e0e0e0"></div><div style="left:1582px;top:513px;width:1px;height:24px;background:#e0e0e0"></div><div style="left:1916px;top:513px;width:1px;height:24px;background:#e0e0e0"></div><div style="left:16px;top:537px;width:1900px;height:1px;background:#c8c8c8"></div><div style="left:16px;top:557px;width:1900px;height:1px;background:#d0d0d0"></div><div style="left:154px;top:538px;width:1px;height:19px;background:#d0d0d0"></div><div style="left:391px;top:538px;width:1px;height:19px;background:#d0d0d0"></div><div style="left:498px;top:538px;width:1px;height:19px;background:#d0d0d0"></div><div style="left:584px;top:538px;width:1px;height:19px;background:#d0d0d0"></div><div style="left:691px;top:538px;width:1px;height:19px;background:#d0d0d0"></div><div style="left:798px;top:538px;width:1px;height:19px;background:#d0d0d0"></div><div style="left:905px;top:538px;width:1px;height:19px;background:#d0d0d0"></div><div style="left:1012px;top:538px;width:1px;height:19px;background:#d0d0d0"></div><div style="left:1249px;top:538px;width:1px;height:19px;background:#d0d0d0"></div><div style="left:1356px;top:538px;width:1px;height:19px;background:#d0d0d0"></div><div style="left:1463px;top:538px;width:1px;height:19px;background:#d0d0d0"></div><div style="left:1581px;top:538px;width:1px;height:19px;background:#d0d0d0"></div><div style="left:1915px;top:538px;width:1px;height:19px;background:#d0d0d0"></div><div style="left:800px;top:538px;width:104px;height:18px;background:#ffa0a0"></div><svg style="left:18px;top:539px" width="16" height="17"><defs><linearGradient id="dg0" x1="0" y1="0" x2="1" y2="1"><stop offset="0" stop-color="#ffffff"/><stop offset="1" stop-color="#d8d8d8"/></linearGradient><radialGradient id="rg0" cx="0.35" cy="0.3" r="0.8"><stop offset="0" stop-color="#ff9060"/><stop offset="1" stop-color="#e03a10"/></radialGradient></defs><path d="M1.5 1.5 H8.5 L11.5 4.5 V14.5 H1.5 Z" fill="url(#dg0)" stroke="#505050" stroke-width="1" stroke-linejoin="round"/><path d="M8.5 1.5 V4.5 H11.5" fill="none" stroke="#505050" stroke-width="0.8"/><circle cx="11.2" cy="12.4" r="3.3" fill="url(#rg0)" stroke="#a02000" stroke-width="0.7"/></svg><div class="t" style="left:37.5px;top:541.34px;font-size:12px;line-height:12px;color:#000;font-weight:normal;transform:scaleX(0.890);transform-origin:left top;">462762586</div><div class="t" style="left:-11px;width:400px;text-align:right;top:541.34px;font-size:12px;line-height:12px;color:#000;font-weight:normal;transform:scaleX(0.899);transform-origin:right top;">2023.11.03 19:14:29</div><div class="t" style="left:96px;width:400px;text-align:right;top:541.34px;font-size:12px;line-height:12px;color:#000;font-weight:normal;transform:scaleX(0.990);transform-origin:right top;">sell</div><div class="t" style="left:182px;width:400px;text-align:right;top:541.34px;font-size:12px;line-height:12px;color:#000;font-weight:normal;transform:scaleX(0.899);transform-origin:right top;">0.50</div><div class="t" style="left:289px;width:400px;text-align:right;top:541.34px;font-size:12px;line-height:12px;color:#000;font-weight:normal;transform:scaleX(0.990);transform-origin:right top;">usdcad</div><div class="t" style="left:396px;width:400px;text-align:right;top:541.34px;font-size:12px;line-height:12px;color:#000;font-weight:normal;transform:scaleX(0.895);transform-origin:right top;">1.36777</div><div class="t" style="left:503px;width:400px;text-align:right;top:541.34px;font-size:12px;line-height:12px;color:#000;font-weight:normal;transform:scaleX(0.895);transform-origin:right top;">1.38000</div><div class="t" style="left:610px;width:400px;text-align:right;top:541.34px;font-size:12px;line-height:12px;color:#000;font-weight:normal;transform:scaleX(0.895);transform-origin:right top;">1.34000</div><div class="t" style="left:847px;width:400px;text-align:right;top:541.34px;font-size:12px;line-height:12px;color:#000;font-weight:normal;transform:scaleX(0.899);transform-origin:right top;">2023.11.08 15:33:18</div><div class="t" style="left:954px;width:400px;text-align:right;top:541.34px;font-size:12px;line-height:12px;color:#000;font-weight:normal;transform:scaleX(0.895);transform-origin:right top;">1.38000</div><div class="t" style="left:1061px;width:400px;text-align:right;top:541.34px;font-size:12px;line-height:12px;color:#000;font-weight:normal;transform:scaleX(0.906);transform-origin:right top;">-5.30</div><div class="t" style="left:1179px;width:400px;text-align:right;top:541.34px;font-size:12px;line-height:12px;color:#000;font-weight:normal;transform:scaleX(0.901);transform-origin:right top;">-443.12</div><div class="t" style="left:1512px;width:400px;text-align:right;top:541.34px;font-size:12px;line-height:12px;color:#000;font-weight:normal;transform:scaleX(0.917);transform-origin:right top;">GMX5QKN6XC7K Banks[sl]</div><div style="left:16px;top:558px;width:1900px;height:19px;background:#ebebeb"></div><div style="left:16px;top:577px;width:1900px;height:1px;background:#d0d0d0"></div><div style="left:154px;top:558px;width:1px;height:19px;background:#d0d0d0"></div><div style="left:391px;top:558px;width:1px;height:19px;background:#d0d0d0"></div><div style="left:498px;top:558px;width:1px;height:19px;background:#d0d0d0"></div><div style="left:584px;top:558px;width:1px;height:19px;background:#d0d0d0"></div><div style="left:691px;top:558px;width:1px;height:19px;background:#d0d0d0"></div><div style="left:798px;top:558px;width:1px;height:19px;background:#d0d0d0"></div><div style="left:905px;top:558px;width:1px;height:19px;background:#d0d0d0"></div><div style="left:1012px;top:558px;width:1px;height:19px;background:#d0d0d0"></div><div style="left:1249px;top:558px;width:1px;height:19px;background:#d0d0d0"></div><div style="left:1356px;top:558px;width:1px;height:19px;background:#d0d0d0"></div><div style="left:1463px;top:558px;width:1px;height:19px;background:#d0d0d0"></div><div style="left:1581px;top:558px;width:1px;height:19px;background:#d0d0d0"></div><div style="left:1915px;top:558px;width:1px;height:19px;background:#d0d0d0"></div><svg style="left:18px;top:559px" width="16" height="17"><defs><linearGradient id="dg1" x1="0" y1="0" x2="1" y2="1"><stop offset="0" stop-color="#ffffff"/><stop offset="1" stop-color="#d8d8d8"/></linearGradient><radialGradient id="rg1" cx="0.35" cy="0.3" r="0.8"><stop offset="0" stop-color="#80c8ff"/><stop offset="1" stop-color="#1e7ee0"/></radialGradient></defs><path d="M1.5 1.5 H8.5 L11.5 4.5 V14.5 H1.5 Z" fill="url(#dg1)" stroke="#505050" stroke-width="1" stroke-linejoin="round"/><path d="M8.5 1.5 V4.5 H11.5" fill="none" stroke="#505050" stroke-width="0.8"/><circle cx="11.2" cy="12.4" r="3.3" fill="url(#rg1)" stroke="#1050a0" stroke-width="0.7"/></svg><div class="t" style="left:37.5px;top:561.34px;font-size:12px;line-height:12px;color:#000;font-weight:normal;transform:scaleX(0.890);transform-origin:left top;">463560788</div><div class="t" style="left:-11px;width:400px;text-align:right;top:561.34px;font-size:12px;line-height:12px;color:#000;font-weight:normal;transform:scaleX(0.899);transform-origin:right top;">2023.11.09 16:05:58</div><div class="t" style="left:96px;width:400px;text-align:right;top:561.34px;font-size:12px;line-height:12px;color:#000;font-weight:normal;transform:scaleX(0.990);transform-origin:right top;">buy</div><div class="t" style="left:182px;width:400px;text-align:right;top:561.34px;font-size:12px;line-height:12px;color:#000;font-weight:normal;transform:scaleX(0.899);transform-origin:right top;">0.50</div><div class="t" style="left:289px;width:400px;text-align:right;top:561.34px;font-size:12px;line-height:12px;color:#000;font-weight:normal;transform:scaleX(0.990);transform-origin:right top;">xauusd</div><div class="t" style="left:396px;width:400px;text-align:right;top:561.34px;font-size:12px;line-height:12px;color:#000;font-weight:normal;transform:scaleX(0.895);transform-origin:right top;">1949.34</div><div class="t" style="left:503px;width:400px;text-align:right;top:561.34px;font-size:12px;line-height:12px;color:#000;font-weight:normal;transform:scaleX(0.895);transform-origin:right top;">1900.00</div><div class="t" style="left:610px;width:400px;text-align:right;top:561.34px;font-size:12px;line-height:12px;color:#000;font-weight:normal;transform:scaleX(0.895);transform-origin:right top;">2000.00</div><div class="t" style="left:847px;width:400px;text-align:right;top:561.34px;font-size:12px;line-height:12px;color:#000;font-weight:normal;transform:scaleX(0.899);transform-origin:right top;">2023.11.14 22:04:19</div><div class="t" style="left:954px;width:400px;text-align:right;top:561.34px;font-size:12px;line-height:12px;color:#000;font-weight:normal;transform:scaleX(0.895);transform-origin:right top;">1963.49</div><div class="t" style="left:1061px;width:400px;text-align:right;top:561.34px;font-size:12px;line-height:12px;color:#000;font-weight:normal;transform:scaleX(0.903);transform-origin:right top;">-49.26</div><div class="t" style="left:1179px;width:400px;text-align:right;top:561.34px;font-size:12px;line-height:12px;color:#000;font-weight:normal;transform:scaleX(0.895);transform-origin:right top;">707.50</div><div class="t" style="left:1512px;width:400px;text-align:right;top:561.34px;font-size:12px;line-height:12px;color:#000;font-weight:normal;transform:scaleX(0.932);transform-origin:right top;">3939938928 Indicators</div><div style="left:16px;top:597px;width:1900px;height:1px;background:#d0d0d0"></div><div style="left:154px;top:578px;width:1px;height:19px;background:#d0d0d0"></div><div style="left:391px;top:578px;width:1px;height:19px;background:#d0d0d0"></div><div style="left:498px;top:578px;width:1px;height:19px;background:#d0d0d0"></div><div style="left:584px;top:578px;width:1px;height:19px;background:#d0d0d0"></div><div style="left:691px;top:578px;width:1px;height:19px;background:#d0d0d0"></div><div style="left:798px;top:578px;width:1px;height:19px;background:#d0d0d0"></div><div style="left:905px;top:578px;width:1px;height:19px;background:#d0d0d0"></div><div style="left:1012px;top:578px;width:1px;height:19px;background:#d0d0d0"></div><div style="left:1249px;top:578px;width:1px;height:19px;background:#d0d0d0"></div><div style="left:1356px;top:578px;width:1px;height:19px;background:#d0d0d0"></div><div style="left:1463px;top:578px;width:1px;height:19px;background:#d0d0d0"></div><div style="left:1581px;top:578px;width:1px;height:19px;background:#d0d0d0"></div><div style="left:1915px;top:578px;width:1px;height:19px;background:#d0d0d0"></div><div style="left:907px;top:578px;width:104px;height:18px;background:#60ee60"></div><svg style="left:18px;top:579px" width="16" height="17"><defs><linearGradient id="dg2" x1="0" y1="0" x2="1" y2="1"><stop offset="0" stop-color="#ffffff"/><stop offset="1" stop-color="#d8d8d8"/></linearGradient><radialGradient id="rg2" cx="0.35" cy="0.3" r="0.8"><stop offset="0" stop-color="#ff9060"/><stop offset="1" stop-color="#e03a10"/></radialGradient></defs><path d="M1.5 1.5 H8.5 L11.5 4.5 V14.5 H1.5 Z" fill="url(#dg2)" stroke="#505050" stroke-width="1" stroke-linejoin="round"/><path d="M8.5 1.5 V4.5 H11.5" fill="none" stroke="#505050" stroke-width="0.8"/><circle cx="11.2" cy="12.4" r="3.3" fill="url(#rg2)" stroke="#a02000" stroke-width="0.7"/></svg><div class="t" style="left:37.5px;top:581.34px;font-size:12px;line-height:12px;color:#000;font-weight:normal;transform:scaleX(0.890);transform-origin:left top;">463560992</div><div class="t" style="left:-11px;width:400px;text-align:right;top:581.34px;font-size:12px;line-height:12px;color:#000;font-weight:normal;transform:scaleX(0.899);transform-origin:right top;">2023.11.09 16:07:28</div><div class="t" style="left:96px;width:400px;text-align:right;top:581.34px;font-size:12px;line-height:12px;color:#000;font-weight:normal;transform:scaleX(0.990);transform-origin:right top;">sell</div><div class="t" style="left:182px;width:400px;text-align:right;top:581.34px;font-size:12px;line-height:12px;color:#000;font-weight:normal;transform:scaleX(0.899);transform-origin:right top;">0.50</div><div class="t" style="left:289px;width:400px;text-align:right;top:581.34px;font-size:12px;line-height:12px;color:#000;font-weight:normal;transform:scaleX(0.990);transform-origin:right top;">usdjpy</div><div class="t" style="left:396px;width:400px;text-align:right;top:581.34px;font-size:12px;line-height:12px;color:#000;font-weight:normal;transform:scaleX(0.895);transform-origin:right top;">150.987</div><div class="t" style="left:503px;width:400px;text-align:right;top:581.34px;font-size:12px;line-height:12px;color:#000;font-weight:normal;transform:scaleX(0.895);transform-origin:right top;">153.000</div><div class="t" style="left:610px;width:400px;text-align:right;top:581.34px;font-size:12px;line-height:12px;color:#000;font-weight:normal;transform:scaleX(0.895);transform-origin:right top;">148.000</div><div class="t" style="left:847px;width:400px;text-align:right;top:581.34px;font-size:12px;line-height:12px;color:#000;font-weight:normal;transform:scaleX(0.899);transform-origin:right top;">2023.11.21 03:27:23</div><div class="t" style="left:954px;width:400px;text-align:right;top:581.34px;font-size:12px;line-height:12px;color:#000;font-weight:normal;transform:scaleX(0.895);transform-origin:right top;">148.000</div><div class="t" style="left:1061px;width:400px;text-align:right;top:581.34px;font-size:12px;line-height:12px;color:#000;font-weight:normal;transform:scaleX(0.903);transform-origin:right top;">-91.13</div><div class="t" style="left:1179px;width:400px;text-align:right;top:581.34px;font-size:12px;line-height:12px;color:#000;font-weight:normal;transform:scaleX(0.899);transform-origin:right top;">1 009.12</div><div class="t" style="left:1512px;width:400px;text-align:right;top:581.34px;font-size:12px;line-height:12px;color:#000;font-weight:normal;transform:scaleX(0.937);transform-origin:right top;">1086653094 Indicators[tp]</div><div style="left:16px;top:598px;width:1900px;height:19px;background:#ebebeb"></div><div style="left:16px;top:617px;width:1900px;height:1px;background:#d0d0d0"></div><div style="left:154px;top:598px;width:1px;height:19px;background:#d0d0d0"></div><div style="left:391px;top:598px;width:1px;height:19px;background:#d0d0d0"></div><div style="left:498px;top:598px;width:1px;height:19px;background:#d0d0d0"></div><div style="left:584px;top:598px;width:1px;height:19px;background:#d0d0d0"></div><div style="left:691px;top:598px;width:1px;height:19px;background:#d0d0d0"></div><div style="left:798px;top:598px;width:1px;height:19px;background:#d0d0d0"></div><div style="left:905px;top:598px;width:1px;height:19px;background:#d0d0d0"></div><div style="left:1012px;top:598px;width:1px;height:19px;background:#d0d0d0"></div><div style="left:1249px;top:598px;width:1px;height:19px;background:#d0d0d0"></div><div style="left:1356px;top:598px;width:1px;height:19px;background:#d0d0d0"></div><div style="left:1463px;top:598px;width:1px;height:19px;background:#d0d0d0"></div><div style="left:1581px;top:598px;width:1px;height:19px;background:#d0d0d0"></div><div style="left:1915px;top:598px;width:1px;height:19px;background:#d0d0d0"></div><svg style="left:18px;top:599px" width="16" height="17"><defs><linearGradient id="dg3" x1="0" y1="0" x2="1" y2="1"><stop offset="0" stop-color="#ffffff"/><stop offset="1" stop-color="#d8d8d8"/></linearGradient><radialGradient id="rg3" cx="0.35" cy="0.3" r="0.8"><stop offset="0" stop-color="#80c8ff"/><stop offset="1" stop-color="#1e7ee0"/></radialGradient></defs><path d="M1.5 1.5 H8.5 L11.5 4.5 V14.5 H1.5 Z" fill="url(#dg3)" stroke="#505050" stroke-width="1" stroke-linejoin="round"/><path d="M8.5 1.5 V4.5 H11.5" fill="none" stroke="#505050" stroke-width="0.8"/><circle cx="11.2" cy="12.4" r="3.3" fill="url(#rg3)" stroke="#1050a0" stroke-width="0.7"/></svg><div class="t" style="left:37.5px;top:601.34px;font-size:12px;line-height:12px;color:#000;font-weight:normal;transform:scaleX(0.890);transform-origin:left top;">463561018</div><div class="t" style="left:-11px;width:400px;text-align:right;top:601.34px;font-size:12px;line-height:12px;color:#000;font-weight:normal;transform:scaleX(0.899);transform-origin:right top;">2023.11.09 16:07:58</div><div class="t" style="left:96px;width:400px;text-align:right;top:601.34px;font-size:12px;line-height:12px;color:#000;font-weight:normal;transform:scaleX(0.990);transform-origin:right top;">buy</div><div class="t" style="left:182px;width:400px;text-align:right;top:601.34px;font-size:12px;line-height:12px;color:#000;font-weight:normal;transform:scaleX(0.899);transform-origin:right top;">0.50</div><div class="t" style="left:289px;width:400px;text-align:right;top:601.34px;font-size:12px;line-height:12px;color:#000;font-weight:normal;transform:scaleX(0.990);transform-origin:right top;">eurusd</div><div class="t" style="left:396px;width:400px;text-align:right;top:601.34px;font-size:12px;line-height:12px;color:#000;font-weight:normal;transform:scaleX(0.895);transform-origin:right top;">1.07022</div><div class="t" style="left:503px;width:400px;text-align:right;top:601.34px;font-size:12px;line-height:12px;color:#000;font-weight:normal;transform:scaleX(0.895);transform-origin:right top;">1.05000</div><div class="t" style="left:610px;width:400px;text-align:right;top:601.34px;font-size:12px;line-height:12px;color:#000;font-weight:normal;transform:scaleX(0.895);transform-origin:right top;">1.09800</div><div class="t" style="left:847px;width:400px;text-align:right;top:601.34px;font-size:12px;line-height:12px;color:#000;font-weight:normal;transform:scaleX(0.899);transform-origin:right top;">2023.11.15 19:45:29</div><div class="t" style="left:954px;width:400px;text-align:right;top:601.34px;font-size:12px;line-height:12px;color:#000;font-weight:normal;transform:scaleX(0.895);transform-origin:right top;">1.08519</div><div class="t" style="left:1061px;width:400px;text-align:right;top:601.34px;font-size:12px;line-height:12px;color:#000;font-weight:normal;transform:scaleX(0.903);transform-origin:right top;">-12.52</div><div class="t" style="left:1179px;width:400px;text-align:right;top:601.34px;font-size:12px;line-height:12px;color:#000;font-weight:normal;transform:scaleX(0.895);transform-origin:right top;">748.50</div><div class="t" style="left:1512px;width:400px;text-align:right;top:601.34px;font-size:12px;line-height:12px;color:#000;font-weight:normal;transform:scaleX(0.932);transform-origin:right top;">1820693884 Indicators</div><div style="left:16px;top:637px;width:1900px;height:1px;background:#d0d0d0"></div><div style="left:154px;top:618px;width:1px;height:19px;background:#d0d0d0"></div><div style="left:391px;top:618px;width:1px;height:19px;background:#d0d0d0"></div><div style="left:498px;top:618px;width:1px;height:19px;background:#d0d0d0"></div><div style="left:584px;top:618px;width:1px;height:19px;background:#d0d0d0"></div><div style="left:691px;top:618px;width:1px;height:19px;background:#d0d0d0"></div><div style="left:798px;top:618px;width:1px;height:19px;background:#d0d0d0"></div><div style="left:905px;top:618px;width:1px;height:19px;background:#d0d0d0"></div><div style="left:1012px;top:618px;width:1px;height:19px;background:#d0d0d0"></div><div style="left:1249px;top:618px;width:1px;height:19px;background:#d0d0d0"></div><div style="left:1356px;top:618px;width:1px;height:19px;background:#d0d0d0"></div><div style="left:1463px;top:618px;width:1px;height:19px;background:#d0d0d0"></div><div style="left:1581px;top:618px;width:1px;height:19px;background:#d0d0d0"></div><div style="left:1915px;top:618px;width:1px;height:19px;background:#d0d0d0"></div><svg style="left:18px;top:619px" width="16" height="17"><defs><linearGradient id="dg4" x1="0" y1="0" x2="1" y2="1"><stop offset="0" stop-color="#ffffff"/><stop offset="1" stop-color="#d8d8d8"/></linearGradient><radialGradient id="rg4" cx="0.35" cy="0.3" r="0.8"><stop offset="0" stop-color="#80c8ff"/><stop offset="1" stop-color="#1e7ee0"/></radialGradient></defs><path d="M1.5 1.5 H8.5 L11.5 4.5 V14.5 H1.5 Z" fill="url(#dg4)" stroke="#505050" stroke-width="1" stroke-linejoin="round"/><path d="M8.5 1.5 V4.5 H11.5" fill="none" stroke="#505050" stroke-width="0.8"/><circle cx="11.2" cy="12.4" r="3.3" fill="url(#rg4)" stroke="#1050a0" stroke-width="0.7"/></svg><div class="t" style="left:37.5px;top:621.34px;font-size:12px;line-height:12px;color:#000;font-weight:normal;transform:scaleX(0.890);transform-origin:left top;">463561129</div><div class="t" style="left:-11px;width:400px;text-align:right;top:621.34px;font-size:12px;line-height:12px;color:#000;font-weight:normal;transform:scaleX(0.899);transform-origin:right top;">2023.11.09 16:08:58</div><div class="t" style="left:96px;width:400px;text-align:right;top:621.34px;font-size:12px;line-height:12px;color:#000;font-weight:normal;transform:scaleX(0.990);transform-origin:right top;">buy</div><div class="t" style="left:182px;width:400px;text-align:right;top:621.34px;font-size:12px;line-height:12px;color:#000;font-weight:normal;transform:scaleX(0.899);transform-origin:right top;">0.50</div><div class="t" style="left:289px;width:400px;text-align:right;top:621.34px;font-size:12px;line-height:12px;color:#000;font-weight:normal;transform:scaleX(0.990);transform-origin:right top;">gbpusd</div><div class="t" style="left:396px;width:400px;text-align:right;top:621.34px;font-size:12px;line-height:12px;color:#000;font-weight:normal;transform:scaleX(0.895);transform-origin:right top;">1.22680</div><div class="t" style="left:503px;width:400px;text-align:right;top:621.34px;font-size:12px;line-height:12px;color:#000;font-weight:normal;transform:scaleX(0.895);transform-origin:right top;">1.20600</div><div class="t" style="left:610px;width:400px;text-align:right;top:621.34px;font-size:12px;line-height:12px;color:#000;font-weight:normal;transform:scaleX(0.895);transform-origin:right top;">1.25600</div><div class="t" style="left:847px;width:400px;text-align:right;top:621.34px;font-size:12px;line-height:12px;color:#000;font-weight:normal;transform:scaleX(0.899);transform-origin:right top;">2023.11.15 19:45:28</div><div class="t" style="left:954px;width:400px;text-align:right;top:621.34px;font-size:12px;line-height:12px;color:#000;font-weight:normal;transform:scaleX(0.895);transform-origin:right top;">1.24204</div><div class="t" style="left:1061px;width:400px;text-align:right;top:621.34px;font-size:12px;line-height:12px;color:#000;font-weight:normal;transform:scaleX(0.906);transform-origin:right top;">-3.56</div><div class="t" style="left:1179px;width:400px;text-align:right;top:621.34px;font-size:12px;line-height:12px;color:#000;font-weight:normal;transform:scaleX(0.895);transform-origin:right top;">762.00</div><div class="t" style="left:1512px;width:400px;text-align:right;top:621.34px;font-size:12px;line-height:12px;color:#000;font-weight:normal;transform:scaleX(0.934);transform-origin:right top;">271584014 Indicators</div><div style="left:16px;top:638px;width:1900px;height:19px;background:#ebebeb"></div><div style="left:16px;top:657px;width:1900px;height:1px;background:#d0d0d0"></div><div style="left:154px;top:638px;width:1px;height:19px;background:#d0d0d0"></div><div style="left:391px;top:638px;width:1px;height:19px;background:#d0d0d0"></div><div style="left:498px;top:638px;width:1px;height:19px;background:#d0d0d0"></div><div style="left:584px;top:638px;width:1px;height:19px;background:#d0d0d0"></div><div style="left:691px;top:638px;width:1px;height:19px;background:#d0d0d0"></div><div style="left:798px;top:638px;width:1px;height:19px;background:#d0d0d0"></div><div style="left:905px;top:638px;width:1px;height:19px;background:#d0d0d0"></div><div style="left:1012px;top:638px;width:1px;height:19px;background:#d0d0d0"></div><div style="left:1249px;top:638px;width:1px;height:19px;background:#d0d0d0"></div><div style="left:1356px;top:638px;width:1px;height:19px;background:#d0d0d0"></div><div style="left:1463px;top:638px;width:1px;height:19px;background:#d0d0d0"></div><div style="left:1581px;top:638px;width:1px;height:19px;background:#d0d0d0"></div><div style="left:1915px;top:638px;width:1px;height:19px;background:#d0d0d0"></div><div style="left:907px;top:638px;width:104px;height:18px;background:#60ee60"></div><svg style="left:18px;top:639px" width="16" height="17"><defs><linearGradient id="dg5" x1="0" y1="0" x2="1" y2="1"><stop offset="0" stop-color="#ffffff"/><stop offset="1" stop-color="#d8d8d8"/></linearGradient><radialGradient id="rg5" cx="0.35" cy="0.3" r="0.8"><stop offset="0" stop-color="#ff9060"/><stop offset="1" stop-color="#e03a10"/></radialGradient></defs><path d="M1.5 1.5 H8.5 L11.5 4.5 V14.5 H1.5 Z" fill="url(#dg5)" stroke="#505050" stroke-width="1" stroke-linejoin="round"/><path d="M8.5 1.5 V4.5 H11.5" fill="none" stroke="#505050" stroke-width="0.8"/><circle cx="11.2" cy="12.4" r="3.3" fill="url(#rg5)" stroke="#a02000" stroke-width="0.7"/></svg><div class="t" style="left:37.5px;top:641.34px;font-size:12px;line-height:12px;color:#000;font-weight:normal;transform:scaleX(0.890);transform-origin:left top;">464034976</div><div class="t" style="left:-11px;width:400px;text-align:right;top:641.34px;font-size:12px;line-height:12px;color:#000;font-weight:normal;transform:scaleX(0.899);transform-origin:right top;">2023.11.13 21:58:10</div><div class="t" style="left:96px;width:400px;text-align:right;top:641.34px;font-size:12px;line-height:12px;color:#000;font-weight:normal;transform:scaleX(0.990);transform-origin:right top;">sell</div><div class="t" style="left:182px;width:400px;text-align:right;top:641.34px;font-size:12px;line-height:12px;color:#000;font-weight:normal;transform:scaleX(0.899);transform-origin:right top;">0.50</div><div class="t" style="left:289px;width:400px;text-align:right;top:641.34px;font-size:12px;line-height:12px;color:#000;font-weight:normal;transform:scaleX(0.990);transform-origin:right top;">usdcad</div><div class="t" style="left:396px;width:400px;text-align:right;top:641.34px;font-size:12px;line-height:12px;color:#000;font-weight:normal;transform:scaleX(0.895);transform-origin:right top;">1.37980</div><div class="t" style="left:503px;width:400px;text-align:right;top:641.34px;font-size:12px;line-height:12px;color:#000;font-weight:normal;transform:scaleX(0.895);transform-origin:right top;">1.40000</div><div class="t" style="left:610px;width:400px;text-align:right;top:641.34px;font-size:12px;line-height:12px;color:#000;font-weight:normal;transform:scaleX(0.895);transform-origin:right top;">1.36750</div><div class="t" style="left:847px;width:400px;text-align:right;top:641.34px;font-size:12px;line-height:12px;color:#000;font-weight:normal;transform:scaleX(0.899);transform-origin:right top;">2023.11.15 14:56:33</div><div class="t" style="left:954px;width:400px;text-align:right;top:641.34px;font-size:12px;line-height:12px;color:#000;font-weight:normal;transform:scaleX(0.895);transform-origin:right top;">1.36750</div><div class="t" style="left:1061px;width:400px;text-align:right;top:641.34px;font-size:12px;line-height:12px;color:#000;font-weight:normal;transform:scaleX(0.906);transform-origin:right top;">-3.59</div><div class="t" style="left:1179px;width:400px;text-align:right;top:641.34px;font-size:12px;line-height:12px;color:#000;font-weight:normal;transform:scaleX(0.895);transform-origin:right top;">449.73</div><div class="t" style="left:1512px;width:400px;text-align:right;top:641.34px;font-size:12px;line-height:12px;color:#000;font-weight:normal;transform:scaleX(0.919);transform-origin:right top;">9JGFB3I7WRED Banks[tp]</div><div style="left:16px;top:677px;width:1900px;height:1px;background:#d0d0d0"></div><div style="left:154px;top:658px;width:1px;height:19px;background:#d0d0d0"></div><div style="left:391px;top:658px;width:1px;height:19px;background:#d0d0d0"></div><div style="left:498px;top:658px;width:1px;height:19px;background:#d0d0d0"></div><div style="left:584px;top:658px;width:1px;height:19px;background:#d0d0d0"></div><div style="left:691px;top:658px;width:1px;height:19px;background:#d0d0d0"></div><div style="left:798px;top:658px;width:1px;height:19px;background:#d0d0d0"></div><div style="left:905px;top:658px;width:1px;height:19px;background:#d0d0d0"></div><div style="left:1012px;top:658px;width:1px;height:19px;background:#d0d0d0"></div><div style="left:1249px;top:658px;width:1px;height:19px;background:#d0d0d0"></div><div style="left:1356px;top:658px;width:1px;height:19px;background:#d0d0d0"></div><div style="left:1463px;top:658px;width:1px;height:19px;background:#d0d0d0"></div><div style="left:1581px;top:658px;width:1px;height:19px;background:#d0d0d0"></div><div style="left:1915px;top:658px;width:1px;height:19px;background:#d0d0d0"></div><div style="left:907px;top:658px;width:104px;height:18px;background:#60ee60"></div><svg style="left:18px;top:659px" width="16" height="17"><defs><linearGradient id="dg6" x1="0" y1="0" x2="1" y2="1"><stop offset="0" stop-color="#ffffff"/><stop offset="1" stop-color="#d8d8d8"/></linearGradient><radialGradient id="rg6" cx="0.35" cy="0.3" r="0.8"><stop offset="0" stop-color="#80c8ff"/><stop offset="1" stop-color="#1e7ee0"/></radialGradient></defs><path d="M1.5 1.5 H8.5 L11.5 4.5 V14.5 H1.5 Z" fill="url(#dg6)" stroke="#505050" stroke-width="1" stroke-linejoin="round"/><path d="M8.5 1.5 V4.5 H11.5" fill="none" stroke="#505050" stroke-width="0.8"/><circle cx="11.2" cy="12.4" r="3.3" fill="url(#rg6)" stroke="#1050a0" stroke-width="0.7"/></svg><div class="t" style="left:37.5px;top:661.34px;font-size:12px;line-height:12px;color:#000;font-weight:normal;transform:scaleX(0.890);transform-origin:left top;">464035902</div><div class="t" style="left:-11px;width:400px;text-align:right;top:661.34px;font-size:12px;line-height:12px;color:#000;font-weight:normal;transform:scaleX(0.899);transform-origin:right top;">2023.11.13 22:01:40</div><div class="t" style="left:96px;width:400px;text-align:right;top:661.34px;font-size:12px;line-height:12px;color:#000;font-weight:normal;transform:scaleX(0.990);transform-origin:right top;">buy</div><div class="t" style="left:182px;width:400px;text-align:right;top:661.34px;font-size:12px;line-height:12px;color:#000;font-weight:normal;transform:scaleX(0.899);transform-origin:right top;">0.50</div><div class="t" style="left:289px;width:400px;text-align:right;top:661.34px;font-size:12px;line-height:12px;color:#000;font-weight:normal;transform:scaleX(0.990);transform-origin:right top;">btcusd</div><div class="t" style="left:396px;width:400px;text-align:right;top:661.34px;font-size:12px;line-height:12px;color:#000;font-weight:normal;transform:scaleX(0.894);transform-origin:right top;">36848.09</div><div class="t" style="left:503px;width:400px;text-align:right;top:661.34px;font-size:12px;line-height:12px;color:#000;font-weight:normal;transform:scaleX(0.894);transform-origin:right top;">34600.00</div><div class="t" style="left:610px;width:400px;text-align:right;top:661.34px;font-size:12px;line-height:12px;color:#000;font-weight:normal;transform:scaleX(0.894);transform-origin:right top;">38600.00</div><div class="t" style="left:847px;width:400px;text-align:right;top:661.34px;font-size:12px;line-height:12px;color:#000;font-weight:normal;transform:scaleX(0.899);transform-origin:right top;">2023.12.01 11:17:09</div><div class="t" style="left:954px;width:400px;text-align:right;top:661.34px;font-size:12px;line-height:12px;color:#000;font-weight:normal;transform:scaleX(0.894);transform-origin:right top;">38600.00</div><div class="t" style="left:1061px;width:400px;text-align:right;top:661.34px;font-size:12px;line-height:12px;color:#000;font-weight:normal;transform:scaleX(0.903);transform-origin:right top;">-92.78</div><div class="t" style="left:1179px;width:400px;text-align:right;top:661.34px;font-size:12px;line-height:12px;color:#000;font-weight:normal;transform:scaleX(0.895);transform-origin:right top;">875.96</div><div class="t" style="left:1512px;width:400px;text-align:right;top:661.34px;font-size:12px;line-height:12px;color:#000;font-weight:normal;transform:scaleX(0.937);transform-origin:right top;">1243462444 Indicators[tp]</div><div style="left:16px;top:678px;width:1900px;height:19px;background:#ebebeb"></div><div style="left:16px;top:697px;width:1900px;height:1px;background:#d0d0d0"></div><div style="left:154px;top:678px;width:1px;height:19px;background:#d0d0d0"></div><div style="left:391px;top:678px;width:1px;height:19px;background:#d0d0d0"></div><div style="left:498px;top:678px;width:1px;height:19px;background:#d0d0d0"></div><div style="left:584px;top:678px;width:1px;height:19px;background:#d0d0d0"></div><div style="left:691px;top:678px;width:1px;height:19px;background:#d0d0d0"></div><div style="left:798px;top:678px;width:1px;height:19px;background:#d0d0d0"></div><div style="left:905px;top:678px;width:1px;height:19px;background:#d0d0d0"></div><div style="left:1012px;top:678px;width:1px;height:19px;background:#d0d0d0"></div><div style="left:1249px;top:678px;width:1px;height:19px;background:#d0d0d0"></div><div style="left:1356px;top:678px;width:1px;height:19px;background:#d0d0d0"></div><div style="left:1463px;top:678px;width:1px;height:19px;background:#d0d0d0"></div><div style="left:1581px;top:678px;width:1px;height:19px;background:#d0d0d0"></div><div style="left:1915px;top:678px;width:1px;height:19px;background:#d0d0d0"></div><div style="left:907px;top:678px;width:104px;height:18px;background:#60ee60"></div><svg style="left:18px;top:679px" width="16" height="17"><defs><linearGradient id="dg7" x1="0" y1="0" x2="1" y2="1"><stop offset="0" stop-color="#ffffff"/><stop offset="1" stop-color="#d8d8d8"/></linearGradient><radialGradient id="rg7" cx="0.35" cy="0.3" r="0.8"><stop offset="0" stop-color="#80c8ff"/><stop offset="1" stop-color="#1e7ee0"/></radialGradient></defs><path d="M1.5 1.5 H8.5 L11.5 4.5 V14.5 H1.5 Z" fill="url(#dg7)" stroke="#505050" stroke-width="1" stroke-linejoin="round"/><path d="M8.5 1.5 V4.5 H11.5" fill="none" stroke="#505050" stroke-width="0.8"/><circle cx="11.2" cy="12.4" r="3.3" fill="url(#rg7)" stroke="#1050a0" stroke-width="0.7"/></svg><div class="t" style="left:37.5px;top:681.34px;font-size:12px;line-height:12px;color:#000;font-weight:normal;transform:scaleX(0.890);transform-origin:left top;">464246840</div><div class="t" style="left:-11px;width:400px;text-align:right;top:681.34px;font-size:12px;line-height:12px;color:#000;font-weight:normal;transform:scaleX(0.899);transform-origin:right top;">2023.11.14 22:00:31</div><div class="t" style="left:96px;width:400px;text-align:right;top:681.34px;font-size:12px;line-height:12px;color:#000;font-weight:normal;transform:scaleX(0.990);transform-origin:right top;">buy</div><div class="t" style="left:182px;width:400px;text-align:right;top:681.34px;font-size:12px;line-height:12px;color:#000;font-weight:normal;transform:scaleX(0.899);transform-origin:right top;">0.50</div><div class="t" style="left:289px;width:400px;text-align:right;top:681.34px;font-size:12px;line-height:12px;color:#000;font-weight:normal;transform:scaleX(0.990);transform-origin:right top;">xauusd</div><div class="t" style="left:396px;width:400px;text-align:right;top:681.34px;font-size:12px;line-height:12px;color:#000;font-weight:normal;transform:scaleX(0.895);transform-origin:right top;">1963.75</div><div class="t" style="left:503px;width:400px;text-align:right;top:681.34px;font-size:12px;line-height:12px;color:#000;font-weight:normal;transform:scaleX(0.895);transform-origin:right top;">1930.00</div><div class="t" style="left:610px;width:400px;text-align:right;top:681.34px;font-size:12px;line-height:12px;color:#000;font-weight:normal;transform:scaleX(0.895);transform-origin:right top;">1995.00</div><div class="t" style="left:847px;width:400px;text-align:right;top:681.34px;font-size:12px;line-height:12px;color:#000;font-weight:normal;transform:scaleX(0.899);transform-origin:right top;">2023.11.21 15:20:38</div><div class="t" style="left:954px;width:400px;text-align:right;top:681.34px;font-size:12px;line-height:12px;color:#000;font-weight:normal;transform:scaleX(0.895);transform-origin:right top;">1995.00</div><div class="t" style="left:1061px;width:400px;text-align:right;top:681.34px;font-size:12px;line-height:12px;color:#000;font-weight:normal;transform:scaleX(0.901);transform-origin:right top;">-114.94</div><div class="t" style="left:1179px;width:400px;text-align:right;top:681.34px;font-size:12px;line-height:12px;color:#000;font-weight:normal;transform:scaleX(0.899);transform-origin:right top;">1 562.50</div><div class="t" style="left:1512px;width:400px;text-align:right;top:681.34px;font-size:12px;line-height:12px;color:#000;font-weight:normal;transform:scaleX(0.937);transform-origin:right top;">1711496188 Indicators[tp]</div><div style="left:16px;top:717px;width:1900px;height:1px;background:#d0d0d0"></div><div style="left:154px;top:698px;width:1px;height:19px;background:#d0d0d0"></div><div style="left:391px;top:698px;width:1px;height:19px;background:#d0d0d0"></div><div style="left:498px;top:698px;width:1px;height:19px;background:#d0d0d0"></div><div style="left:584px;top:698px;width:1px;height:19px;background:#d0d0d0"></div><div style="left:691px;top:698px;width:1px;height:19px;background:#d0d0d0"></div><div style="left:798px;top:698px;width:1px;height:19px;background:#d0d0d0"></div><div style="left:905px;top:698px;width:1px;height:19px;background:#d0d0d0"></div><div style="left:1012px;top:698px;width:1px;height:19px;background:#d0d0d0"></div><div style="left:1249px;top:698px;width:1px;height:19px;background:#d0d0d0"></div><div style="left:1356px;top:698px;width:1px;height:19px;background:#d0d0d0"></div><div style="left:1463px;top:698px;width:1px;height:19px;background:#d0d0d0"></div><div style="left:1581px;top:698px;width:1px;height:19px;background:#d0d0d0"></div><div style="left:1915px;top:698px;width:1px;height:19px;background:#d0d0d0"></div><svg style="left:18px;top:699px" width="16" height="17"><defs><linearGradient id="dg8" x1="0" y1="0" x2="1" y2="1"><stop offset="0" stop-color="#ffffff"/><stop offset="1" stop-color="#d8d8d8"/></linearGradient><radialGradient id="rg8" cx="0.35" cy="0.3" r="0.8"><stop offset="0" stop-color="#ff9060"/><stop offset="1" stop-color="#e03a10"/></radialGradient></defs><path d="M1.5 1.5 H8.5 L11.5 4.5 V14.5 H1.5 Z" fill="url(#dg8)" stroke="#505050" stroke-width="1" stroke-linejoin="round"/><path d="M8.5 1.5 V4.5 H11.5" fill="none" stroke="#505050" stroke-width="0.8"/><circle cx="11.2" cy="12.4" r="3.3" fill="url(#rg8)" stroke="#a02000" stroke-width="0.7"/></svg><div class="t" style="left:37.5px;top:701.34px;font-size:12px;line-height:12px;color:#000;font-weight:normal;transform:scaleX(0.890);transform-origin:left top;">464991797</div><div class="t" style="left:-11px;width:400px;text-align:right;top:701.34px;font-size:12px;line-height:12px;color:#000;font-weight:normal;transform:scaleX(0.899);transform-origin:right top;">2023.11.20 15:44:19</div><div class="t" style="left:96px;width:400px;text-align:right;top:701.34px;font-size:12px;line-height:12px;color:#000;font-weight:normal;transform:scaleX(0.990);transform-origin:right top;">sell</div><div class="t" style="left:182px;width:400px;text-align:right;top:701.34px;font-size:12px;line-height:12px;color:#000;font-weight:normal;transform:scaleX(0.899);transform-origin:right top;">0.50</div><div class="t" style="left:289px;width:400px;text-align:right;top:701.34px;font-size:12px;line-height:12px;color:#000;font-weight:normal;transform:scaleX(0.990);transform-origin:right top;">eurjpy</div><div class="t" style="left:396px;width:400px;text-align:right;top:701.34px;font-size:12px;line-height:12px;color:#000;font-weight:normal;transform:scaleX(0.895);transform-origin:right top;">162.234</div><div class="t" style="left:503px;width:400px;text-align:right;top:701.34px;font-size:12px;line-height:12px;color:#000;font-weight:normal;transform:scaleX(0.895);transform-origin:right top;">164.500</div><div class="t" style="left:610px;width:400px;text-align:right;top:701.34px;font-size:12px;line-height:12px;color:#000;font-weight:normal;transform:scaleX(0.895);transform-origin:right top;">158.140</div><div class="t" style="left:847px;width:400px;text-align:right;top:701.34px;font-size:12px;line-height:12px;color:#000;font-weight:normal;transform:scaleX(0.899);transform-origin:right top;">2023.12.01 19:11:38</div><div class="t" style="left:954px;width:400px;text-align:right;top:701.34px;font-size:12px;line-height:12px;color:#000;font-weight:normal;transform:scaleX(0.895);transform-origin:right top;">159.852</div><div class="t" style="left:1061px;width:400px;text-align:right;top:701.34px;font-size:12px;line-height:12px;color:#000;font-weight:normal;transform:scaleX(0.903);transform-origin:right top;">-96.10</div><div class="t" style="left:1179px;width:400px;text-align:right;top:701.34px;font-size:12px;line-height:12px;color:#000;font-weight:normal;transform:scaleX(0.895);transform-origin:right top;">810.57</div><div class="t" style="left:1512px;width:400px;text-align:right;top:701.34px;font-size:12px;line-height:12px;color:#000;font-weight:normal;transform:scaleX(0.910);transform-origin:right top;">B0SQ7H3BPWVG Banks</div><div style="left:16px;top:718px;width:1900px;height:19px;background:#ebebeb"></div><div style="left:16px;top:737px;width:1900px;height:1px;background:#d0d0d0"></div><div style="left:154px;top:718px;width:1px;height:19px;background:#d0d0d0"></div><div style="left:391px;top:718px;width:1px;height:19px;background:#d0d0d0"></div><div style="left:498px;top:718px;width:1px;height:19px;background:#d0d0d0"></div><div style="left:584px;top:718px;width:1px;height:19px;background:#d0d0d0"></div><div style="left:691px;top:718px;width:1px;height:19px;background:#d0d0d0"></div><div style="left:798px;top:718px;width:1px;height:19px;background:#d0d0d0"></div><div style="left:905px;top:718px;width:1px;height:19px;background:#d0d0d0"></div><div style="left:1012px;top:718px;width:1px;height:19px;background:#d0d0d0"></div><div style="left:1249px;top:718px;width:1px;height:19px;background:#d0d0d0"></div><div style="left:1356px;top:718px;width:1px;height:19px;background:#d0d0d0"></div><div style="left:1463px;top:718px;width:1px;height:19px;background:#d0d0d0"></div><div style="left:1581px;top:718px;width:1px;height:19px;background:#d0d0d0"></div><div style="left:1915px;top:718px;width:1px;height:19px;background:#d0d0d0"></div><div style="left:907px;top:718px;width:104px;height:18px;background:#60ee60"></div><svg style="left:18px;top:719px" width="16" height="17"><defs><linearGradient id="dg9" x1="0" y1="0" x2="1" y2="1"><stop offset="0" stop-color="#ffffff"/><stop offset="1" stop-color="#d8d8d8"/></linearGradient><radialGradient id="rg9" cx="0.35" cy="0.3" r="0.8"><stop offset="0" stop-color="#80c8ff"/><stop offset="1" stop-color="#1e7ee0"/></radialGradient></defs><path d="M1.5 1.5 H8.5 L11.5 4.5 V14.5 H1.5 Z" fill="url(#dg9)" stroke="#505050" stroke-width="1" stroke-linejoin="round"/><path d="M8.5 1.5 V4.5 H11.5" fill="none" stroke="#505050" stroke-width="0.8"/><circle cx="11.2" cy="12.4" r="3.3" fill="url(#rg9)" stroke="#1050a0" stroke-width="0.7"/></svg><div class="t" style="left:37.5px;top:721.34px;font-size:12px;line-height:12px;color:#000;font-weight:normal;transform:scaleX(0.890);transform-origin:left top;">465321919</div><div class="t" style="left:-11px;width:400px;text-align:right;top:721.34px;font-size:12px;line-height:12px;color:#000;font-weight:normal;transform:scaleX(0.899);transform-origin:right top;">2023.11.22 09:49:54</div><div class="t" style="left:96px;width:400px;text-align:right;top:721.34px;font-size:12px;line-height:12px;color:#000;font-weight:normal;transform:scaleX(0.990);transform-origin:right top;">buy</div><div class="t" style="left:182px;width:400px;text-align:right;top:721.34px;font-size:12px;line-height:12px;color:#000;font-weight:normal;transform:scaleX(0.899);transform-origin:right top;">0.50</div><div class="t" style="left:289px;width:400px;text-align:right;top:721.34px;font-size:12px;line-height:12px;color:#000;font-weight:normal;transform:scaleX(0.990);transform-origin:right top;">xauusd</div><div class="t" style="left:396px;width:400px;text-align:right;top:721.34px;font-size:12px;line-height:12px;color:#000;font-weight:normal;transform:scaleX(0.895);transform-origin:right top;">2002.87</div><div class="t" style="left:503px;width:400px;text-align:right;top:721.34px;font-size:12px;line-height:12px;color:#000;font-weight:normal;transform:scaleX(0.895);transform-origin:right top;">1950.00</div><div class="t" style="left:610px;width:400px;text-align:right;top:721.34px;font-size:12px;line-height:12px;color:#000;font-weight:normal;transform:scaleX(0.895);transform-origin:right top;">2050.00</div><div class="t" style="left:847px;width:400px;text-align:right;top:721.34px;font-size:12px;line-height:12px;color:#000;font-weight:normal;transform:scaleX(0.899);transform-origin:right top;">2023.11.29 03:00:10</div><div class="t" style="left:954px;width:400px;text-align:right;top:721.34px;font-size:12px;line-height:12px;color:#000;font-weight:normal;transform:scaleX(0.895);transform-origin:right top;">2050.00</div><div class="t" style="left:1061px;width:400px;text-align:right;top:721.34px;font-size:12px;line-height:12px;color:#000;font-weight:normal;transform:scaleX(0.901);transform-origin:right top;">-114.94</div><div class="t" style="left:1179px;width:400px;text-align:right;top:721.34px;font-size:12px;line-height:12px;color:#000;font-weight:normal;transform:scaleX(0.899);transform-origin:right top;">2 356.50</div><div class="t" style="left:1512px;width:400px;text-align:right;top:721.34px;font-size:12px;line-height:12px;color:#000;font-weight:normal;transform:scaleX(0.937);transform-origin:right top;">2907186234 Indicators[tp]</div><div style="left:16px;top:757px;width:1900px;height:1px;background:#d0d0d0"></div><div style="left:154px;top:738px;width:1px;height:19px;background:#d0d0d0"></div><div style="left:391px;top:738px;width:1px;height:19px;background:#d0d0d0"></div><div style="left:498px;top:738px;width:1px;height:19px;background:#d0d0d0"></div><div style="left:584px;top:738px;width:1px;height:19px;background:#d0d0d0"></div><div style="left:691px;top:738px;width:1px;height:19px;background:#d0d0d0"></div><div style="left:798px;top:738px;width:1px;height:19px;background:#d0d0d0"></div><div style="left:905px;top:738px;width:1px;height:19px;background:#d0d0d0"></div><div style="left:1012px;top:738px;width:1px;height:19px;background:#d0d0d0"></div><div style="left:1249px;top:738px;width:1px;height:19px;background:#d0d0d0"></div><div style="left:1356px;top:738px;width:1px;height:19px;background:#d0d0d0"></div><div style="left:1463px;top:738px;width:1px;height:19px;background:#d0d0d0"></div><div style="left:1581px;top:738px;width:1px;height:19px;background:#d0d0d0"></div><div style="left:1915px;top:738px;width:1px;height:19px;background:#d0d0d0"></div><div style="left:907px;top:738px;width:104px;height:18px;background:#60ee60"></div><svg style="left:18px;top:739px" width="16" height="17"><defs><linearGradient id="dg10" x1="0" y1="0" x2="1" y2="1"><stop offset="0" stop-color="#ffffff"/><stop offset="1" stop-color="#d8d8d8"/></linearGradient><radialGradient id="rg10" cx="0.35" cy="0.3" r="0.8"><stop offset="0" stop-color="#ff9060"/><stop offset="1" stop-color="#e03a10"/></radialGradient></defs><path d="M1.5 1.5 H8.5 L11.5 4.5 V14.5 H1.5 Z" fill="url(#dg10)" stroke="#505050" stroke-width="1" stroke-linejoin="round"/><path d="M8.5 1.5 V4.5 H11.5" fill="none" stroke="#505050" stroke-width="0.8"/><circle cx="11.2" cy="12.4" r="3.3" fill="url(#rg10)" stroke="#a02000" stroke-width="0.7"/></svg><div class="t" style="left:37.5px;top:741.34px;font-size:12px;line-height:12px;color:#000;font-weight:normal;transform:scaleX(0.890);transform-origin:left top;">465550837</div><div class="t" style="left:-11px;width:400px;text-align:right;top:741.34px;font-size:12px;line-height:12px;color:#000;font-weight:normal;transform:scaleX(0.899);transform-origin:right top;">2023.11.23 17:33:06</div><div class="t" style="left:96px;width:400px;text-align:right;top:741.34px;font-size:12px;line-height:12px;color:#000;font-weight:normal;transform:scaleX(0.990);transform-origin:right top;">sell</div><div class="t" style="left:182px;width:400px;text-align:right;top:741.34px;font-size:12px;line-height:12px;color:#000;font-weight:normal;transform:scaleX(0.899);transform-origin:right top;">0.50</div><div class="t" style="left:289px;width:400px;text-align:right;top:741.34px;font-size:12px;line-height:12px;color:#000;font-weight:normal;transform:scaleX(0.990);transform-origin:right top;">usdjpy</div><div class="t" style="left:396px;width:400px;text-align:right;top:741.34px;font-size:12px;line-height:12px;color:#000;font-weight:normal;transform:scaleX(0.895);transform-origin:right top;">149.528</div><div class="t" style="left:503px;width:400px;text-align:right;top:741.34px;font-size:12px;line-height:12px;color:#000;font-weight:normal;transform:scaleX(0.895);transform-origin:right top;">151.000</div><div class="t" style="left:610px;width:400px;text-align:right;top:741.34px;font-size:12px;line-height:12px;color:#000;font-weight:normal;transform:scaleX(0.895);transform-origin:right top;">147.500</div><div class="t" style="left:847px;width:400px;text-align:right;top:741.34px;font-size:12px;line-height:12px;color:#000;font-weight:normal;transform:scaleX(0.899);transform-origin:right top;">2023.11.28 18:36:26</div><div class="t" style="left:954px;width:400px;text-align:right;top:741.34px;font-size:12px;line-height:12px;color:#000;font-weight:normal;transform:scaleX(0.895);transform-origin:right top;">147.500</div><div class="t" style="left:1061px;width:400px;text-align:right;top:741.34px;font-size:12px;line-height:12px;color:#000;font-weight:normal;transform:scaleX(0.903);transform-origin:right top;">-27.10</div><div class="t" style="left:1179px;width:400px;text-align:right;top:741.34px;font-size:12px;line-height:12px;color:#000;font-weight:normal;transform:scaleX(0.895);transform-origin:right top;">687.46</div><div class="t" style="left:1512px;width:400px;text-align:right;top:741.34px;font-size:12px;line-height:12px;color:#000;font-weight:normal;transform:scaleX(0.939);transform-origin:right top;">316375928 Indicators[tp]</div><div style="left:16px;top:758px;width:1900px;height:19px;background:#ebebeb"></div><div style="left:16px;top:777px;width:1900px;height:1px;background:#d0d0d0"></div><div style="left:154px;top:758px;width:1px;height:19px;background:#d0d0d0"></div><div style="left:391px;top:758px;width:1px;height:19px;background:#d0d0d0"></div><div style="left:498px;top:758px;width:1px;height:19px;background:#d0d0d0"></div><div style="left:584px;top:758px;width:1px;height:19px;background:#d0d0d0"></div><div style="left:691px;top:758px;width:1px;height:19px;background:#d0d0d0"></div><div style="left:798px;top:758px;width:1px;height:19px;background:#d0d0d0"></div><div style="left:905px;top:758px;width:1px;height:19px;background:#d0d0d0"></div><div style="left:1012px;top:758px;width:1px;height:19px;background:#d0d0d0"></div><div style="left:1249px;top:758px;width:1px;height:19px;background:#d0d0d0"></div><div style="left:1356px;top:758px;width:1px;height:19px;background:#d0d0d0"></div><div style="left:1463px;top:758px;width:1px;height:19px;background:#d0d0d0"></div><div style="left:1581px;top:758px;width:1px;height:19px;background:#d0d0d0"></div><div style="left:1915px;top:758px;width:1px;height:19px;background:#d0d0d0"></div><svg style="left:18px;top:759px" width="16" height="17"><defs><linearGradient id="dg11" x1="0" y1="0" x2="1" y2="1"><stop offset="0" stop-color="#ffffff"/><stop offset="1" stop-color="#d8d8d8"/></linearGradient><radialGradient id="rg11" cx="0.35" cy="0.3" r="0.8"><stop offset="0" stop-color="#80c8ff"/><stop offset="1" stop-color="#1e7ee0"/></radialGradient></defs><path d="M1.5 1.5 H8.5 L11.5 4.5 V14.5 H1.5 Z" fill="url(#dg11)" stroke="#505050" stroke-width="1" stroke-linejoin="round"/><path d="M8.5 1.5 V4.5 H11.5" fill="none" stroke="#505050" stroke-width="0.8"/><circle cx="11.2" cy="12.4" r="3.3" fill="url(#rg11)" stroke="#1050a0" stroke-width="0.7"/></svg><div class="t" style="left:37.5px;top:761.34px;font-size:12px;line-height:12px;color:#000;font-weight:normal;transform:scaleX(0.890);transform-origin:left top;">465551035</div><div class="t" style="left:-11px;width:400px;text-align:right;top:761.34px;font-size:12px;line-height:12px;color:#000;font-weight:normal;transform:scaleX(0.899);transform-origin:right top;">2023.11.23 17:35:36</div><div class="t" style="left:96px;width:400px;text-align:right;top:761.34px;font-size:12px;line-height:12px;color:#000;font-weight:normal;transform:scaleX(0.990);transform-origin:right top;">buy</div><div class="t" style="left:182px;width:400px;text-align:right;top:761.34px;font-size:12px;line-height:12px;color:#000;font-weight:normal;transform:scaleX(0.899);transform-origin:right top;">0.50</div><div class="t" style="left:289px;width:400px;text-align:right;top:761.34px;font-size:12px;line-height:12px;color:#000;font-weight:normal;transform:scaleX(0.990);transform-origin:right top;">eurusd</div><div class="t" style="left:396px;width:400px;text-align:right;top:761.34px;font-size:12px;line-height:12px;color:#000;font-weight:normal;transform:scaleX(0.895);transform-origin:right top;">1.09096</div><div class="t" style="left:503px;width:400px;text-align:right;top:761.34px;font-size:12px;line-height:12px;color:#000;font-weight:normal;transform:scaleX(0.895);transform-origin:right top;">1.06000</div><div class="t" style="left:610px;width:400px;text-align:right;top:761.34px;font-size:12px;line-height:12px;color:#000;font-weight:normal;transform:scaleX(0.895);transform-origin:right top;">1.12000</div><div class="t" style="left:847px;width:400px;text-align:right;top:761.34px;font-size:12px;line-height:12px;color:#000;font-weight:normal;transform:scaleX(0.899);transform-origin:right top;">2023.11.29 16:17:20</div><div class="t" style="left:954px;width:400px;text-align:right;top:761.34px;font-size:12px;line-height:12px;color:#000;font-weight:normal;transform:scaleX(0.895);transform-origin:right top;">1.09647</div><div class="t" style="left:1061px;width:400px;text-align:right;top:761.34px;font-size:12px;line-height:12px;color:#000;font-weight:normal;transform:scaleX(0.903);transform-origin:right top;">-12.52</div><div class="t" style="left:1179px;width:400px;text-align:right;top:761.34px;font-size:12px;line-height:12px;color:#000;font-weight:normal;transform:scaleX(0.895);transform-origin:right top;">275.50</div><div class="t" style="left:1512px;width:400px;text-align:right;top:761.34px;font-size:12px;line-height:12px;color:#000;font-weight:normal;transform:scaleX(0.932);transform-origin:right top;">3619351809 Indicators</div><div style="left:16px;top:797px;width:1900px;height:1px;background:#d0d0d0"></div><div style="left:154px;top:778px;width:1px;height:19px;background:#d0d0d0"></div><div style="left:391px;top:778px;width:1px;height:19px;background:#d0d0d0"></div><div style="left:498px;top:778px;width:1px;height:19px;background:#d0d0d0"></div><div style="left:584px;top:778px;width:1px;height:19px;background:#d0d0d0"></div><div style="left:691px;top:778px;width:1px;height:19px;background:#d0d0d0"></div><div style="left:798px;top:778px;width:1px;height:19px;background:#d0d0d0"></div><div style="left:905px;top:778px;width:1px;height:19px;background:#d0d0d0"></div><div style="left:1012px;top:778px;width:1px;height:19px;background:#d0d0d0"></div><div style="left:1249px;top:778px;width:1px;height:19px;background:#d0d0d0"></div><div style="left:1356px;top:778px;width:1px;height:19px;background:#d0d0d0"></div><div style="left:1463px;top:778px;width:1px;height:19px;background:#d0d0d0"></div><div style="left:1581px;top:778px;width:1px;height:19px;background:#d0d0d0"></div><div style="left:1915px;top:778px;width:1px;height:19px;background:#d0d0d0"></div><svg style="left:18px;top:779px" width="16" height="17"><defs><linearGradient id="dg12" x1="0" y1="0" x2="1" y2="1"><stop offset="0" stop-color="#ffffff"/><stop offset="1" stop-color="#d8d8d8"/></linearGradient><radialGradient id="rg12" cx="0.35" cy="0.3" r="0.8"><stop offset="0" stop-color="#80c8ff"/><stop offset="1" stop-color="#1e7ee0"/></radialGradient></defs><path d="M1.5 1.5 H8.5 L11.5 4.5 V14.5 H1.5 Z" fill="url(#dg12)" stroke="#505050" stroke-width="1" stroke-linejoin="round"/><path d="M8.5 1.5 V4.5 H11.5" fill="none" stroke="#505050" stroke-width="0.8"/><circle cx="11.2" cy="12.4" r="3.3" fill="url(#rg12)" stroke="#1050a0" stroke-width="0.7"/></svg><div class="t" style="left:37.5px;top:781.34px;font-size:12px;line-height:12px;color:#000;font-weight:normal;transform:scaleX(0.890);transform-origin:left top;">465551098</div><div class="t" style="left:-11px;width:400px;text-align:right;top:781.34px;font-size:12px;line-height:12px;color:#000;font-weight:normal;transform:scaleX(0.899);transform-origin:right top;">2023.11.23 17:36:36</div><div class="t" style="left:96px;width:400px;text-align:right;top:781.34px;font-size:12px;line-height:12px;color:#000;font-weight:normal;transform:scaleX(0.990);transform-origin:right top;">buy</div><div class="t" style="left:182px;width:400px;text-align:right;top:781.34px;font-size:12px;line-height:12px;color:#000;font-weight:normal;transform:scaleX(0.899);transform-origin:right top;">0.50</div><div class="t" style="left:289px;width:400px;text-align:right;top:781.34px;font-size:12px;line-height:12px;color:#000;font-weight:normal;transform:scaleX(0.990);transform-origin:right top;">gbpusd</div><div class="t" style="left:396px;width:400px;text-align:right;top:781.34px;font-size:12px;line-height:12px;color:#000;font-weight:normal;transform:scaleX(0.895);transform-origin:right top;">1.25370</div><div class="t" style="left:503px;width:400px;text-align:right;top:781.34px;font-size:12px;line-height:12px;color:#000;font-weight:normal;transform:scaleX(0.895);transform-origin:right top;">1.22000</div><div class="t" style="left:610px;width:400px;text-align:right;top:781.34px;font-size:12px;line-height:12px;color:#000;font-weight:normal;transform:scaleX(0.895);transform-origin:right top;">1.28000</div><div class="t" style="left:847px;width:400px;text-align:right;top:781.34px;font-size:12px;line-height:12px;color:#000;font-weight:normal;transform:scaleX(0.899);transform-origin:right top;">2023.11.29 16:17:16</div><div class="t" style="left:954px;width:400px;text-align:right;top:781.34px;font-size:12px;line-height:12px;color:#000;font-weight:normal;transform:scaleX(0.895);transform-origin:right top;">1.26781</div><div class="t" style="left:1061px;width:400px;text-align:right;top:781.34px;font-size:12px;line-height:12px;color:#000;font-weight:normal;transform:scaleX(0.906);transform-origin:right top;">-3.78</div><div class="t" style="left:1179px;width:400px;text-align:right;top:781.34px;font-size:12px;line-height:12px;color:#000;font-weight:normal;transform:scaleX(0.895);transform-origin:right top;">705.50</div><div class="t" style="left:1512px;width:400px;text-align:right;top:781.34px;font-size:12px;line-height:12px;color:#000;font-weight:normal;transform:scaleX(0.932);transform-origin:right top;">2164781738 Indicators</div><div style="left:16px;top:798px;width:1900px;height:19px;background:#ebebeb"></div><div style="left:16px;top:817px;width:1900px;height:1px;background:#d0d0d0"></div><div style="left:154px;top:798px;width:1px;height:19px;background:#d0d0d0"></div><div style="left:391px;top:798px;width:1px;height:19px;background:#d0d0d0"></div><div style="left:498px;top:798px;width:1px;height:19px;background:#d0d0d0"></div><div style="left:584px;top:798px;width:1px;height:19px;background:#d0d0d0"></div><div style="left:691px;top:798px;width:1px;height:19px;background:#d0d0d0"></div><div style="left:798px;top:798px;width:1px;height:19px;background:#d0d0d0"></div><div style="left:905px;top:798px;width:1px;height:19px;background:#d0d0d0"></div><div style="left:1012px;top:798px;width:1px;height:19px;background:#d0d0d0"></div><div style="left:1249px;top:798px;width:1px;height:19px;background:#d0d0d0"></div><div style="left:1356px;top:798px;width:1px;height:19px;background:#d0d0d0"></div><div style="left:1463px;top:798px;width:1px;height:19px;background:#d0d0d0"></div><div style="left:1581px;top:798px;width:1px;height:19px;background:#d0d0d0"></div><div style="left:1915px;top:798px;width:1px;height:19px;background:#d0d0d0"></div><svg style="left:18px;top:799px" width="16" height="17"><defs><linearGradient id="dg13" x1="0" y1="0" x2="1" y2="1"><stop offset="0" stop-color="#ffffff"/><stop offset="1" stop-color="#d8d8d8"/></linearGradient><radialGradient id="rg13" cx="0.35" cy="0.3" r="0.8"><stop offset="0" stop-color="#80c8ff"/><stop offset="1" stop-color="#1e7ee0"/></radialGradient></defs><path d="M1.5 1.5 H8.5 L11.5 4.5 V14.5 H1.5 Z" fill="url(#dg13)" stroke="#505050" stroke-width="1" stroke-linejoin="round"/><path d="M8.5 1.5 V4.5 H11.5" fill="none" stroke="#505050" stroke-width="0.8"/><circle cx="11.2" cy="12.4" r="3.3" fill="url(#rg13)" stroke="#1050a0" stroke-width="0.7"/></svg><div class="t" style="left:37.5px;top:801.34px;font-size:12px;line-height:12px;color:#000;font-weight:normal;transform:scaleX(0.890);transform-origin:left top;">466158992</div><div class="t" style="left:-11px;width:400px;text-align:right;top:801.34px;font-size:12px;line-height:12px;color:#000;font-weight:normal;transform:scaleX(0.899);transform-origin:right top;">2023.11.29 14:49:01</div><div class="t" style="left:96px;width:400px;text-align:right;top:801.34px;font-size:12px;line-height:12px;color:#000;font-weight:normal;transform:scaleX(0.990);transform-origin:right top;">buy</div><div class="t" style="left:182px;width:400px;text-align:right;top:801.34px;font-size:12px;line-height:12px;color:#000;font-weight:normal;transform:scaleX(0.899);transform-origin:right top;">0.10</div><div class="t" style="left:289px;width:400px;text-align:right;top:801.34px;font-size:12px;line-height:12px;color:#000;font-weight:normal;transform:scaleX(0.990);transform-origin:right top;">xauusd</div><div class="t" style="left:396px;width:400px;text-align:right;top:801.34px;font-size:12px;line-height:12px;color:#000;font-weight:normal;transform:scaleX(0.895);transform-origin:right top;">2042.14</div><div class="t" style="left:503px;width:400px;text-align:right;top:801.34px;font-size:12px;line-height:12px;color:#000;font-weight:normal;transform:scaleX(0.895);transform-origin:right top;">1990.00</div><div class="t" style="left:610px;width:400px;text-align:right;top:801.34px;font-size:12px;line-height:12px;color:#000;font-weight:normal;transform:scaleX(0.895);transform-origin:right top;">2090.00</div><div class="t" style="left:847px;width:400px;text-align:right;top:801.34px;font-size:12px;line-height:12px;color:#000;font-weight:normal;transform:scaleX(0.899);transform-origin:right top;">2023.11.30 19:43:40</div><div class="t" style="left:954px;width:400px;text-align:right;top:801.34px;font-size:12px;line-height:12px;color:#000;font-weight:normal;transform:scaleX(0.895);transform-origin:right top;">2040.18</div><div class="t" style="left:1061px;width:400px;text-align:right;top:801.34px;font-size:12px;line-height:12px;color:#000;font-weight:normal;transform:scaleX(0.906);transform-origin:right top;">-9.85</div><div class="t" style="left:1179px;width:400px;text-align:right;top:801.34px;font-size:12px;line-height:12px;color:#000;font-weight:normal;transform:scaleX(0.903);transform-origin:right top;">-19.60</div><div class="t" style="left:1512px;width:400px;text-align:right;top:801.34px;font-size:12px;line-height:12px;color:#000;font-weight:normal;transform:scaleX(0.934);transform-origin:right top;">253712772 Indicators</div><div style="left:16px;top:817px;width:1900px;height:18px;background:#c6c6c6"></div><svg style="left:21px;top:822px" width="10" height="10"><circle cx="5.2" cy="5" r="3.2" fill="#d8d8d8" stroke="#707070" stroke-width="0.9"/><path d="M3.5 6.5 L6.8 3.5" stroke="#a0a0a0" stroke-width="0.8"/></svg><div class="t" style="left:38px;top:820.84px;font-size:12px;line-height:12px;color:#000;font-weight:bold;transform:scaleX(0.975);transform-origin:left top;">Profit/Loss: 9 850.75&nbsp;&nbsp;Credit: 0.00&nbsp;&nbsp;Deposit: 0.00&nbsp;&nbsp;Withdrawal: 0.00</div><div class="t" style="left:1179px;width:400px;text-align:right;top:820.84px;font-size:12px;line-height:12px;color:#000;font-weight:bold;transform:scaleX(1.020);transform-origin:right top;">9 850.75</div>
</body></html>
